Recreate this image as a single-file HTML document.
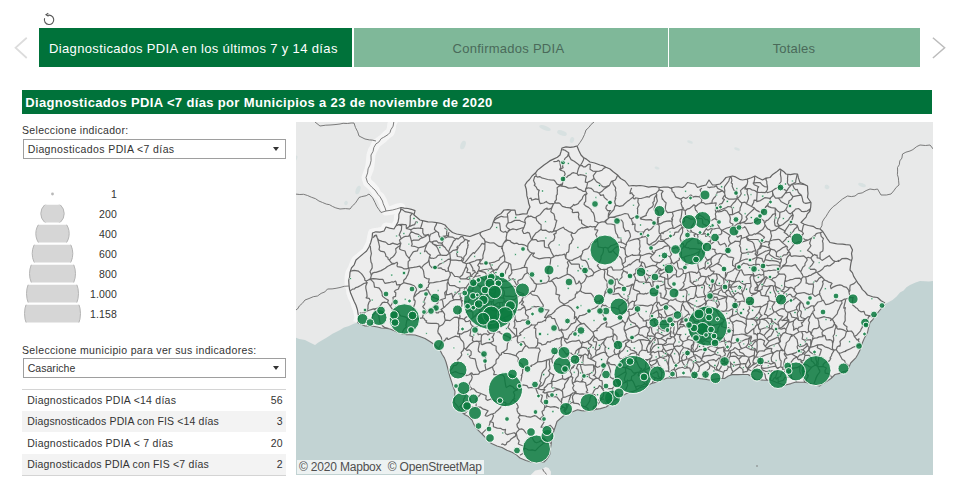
<!DOCTYPE html>
<html><head><meta charset="utf-8">
<style>
html,body{margin:0;padding:0;background:#fff;}
body{width:955px;height:480px;overflow:hidden;position:relative;font-family:"Liberation Sans","DejaVu Sans",sans-serif;color:#333;}
.abs{position:absolute;}
.tab{position:absolute;top:28px;height:38.7px;font-size:13px;white-space:nowrap;}
.tab span{position:absolute;top:12.5px;line-height:15px;}
.t1{left:39px;width:312.6px;background:#00723a;color:#fff;letter-spacing:0.355px;}
.t2{left:354px;width:313.5px;background:#7fb899;color:#4a6a59;letter-spacing:0.26px;}
.t3{left:669px;width:250.8px;background:#7fb899;color:#4a6a59;letter-spacing:0.17px;}
.title{left:22px;top:90px;width:910px;height:23.8px;background:#00723a;color:#fff;font-weight:bold;font-size:13px;line-height:15px;letter-spacing:0.35px;}
.title span{position:absolute;left:3.3px;top:4.5px;white-space:nowrap;}
.lbl{font-size:10.5px;color:#333;white-space:nowrap;}
.sel{border:1px solid #9e9e9e;background:#fff;height:17.7px;width:261px;font-size:10.5px;line-height:17px;}
.sel span{position:absolute;left:3.7px;top:1.2px;white-space:nowrap;}
.sel i{position:absolute;right:5.8px;top:7.2px;width:0;height:0;border-left:3.2px solid transparent;border-right:3.2px solid transparent;border-top:4.3px solid #333;}
.row{position:absolute;left:22px;width:264px;height:22px;font-size:10.5px;line-height:20.6px;letter-spacing:0.24px;}
.row span{position:absolute;left:5.3px;white-space:nowrap;}
.row b{position:absolute;right:3.1px;font-weight:normal;}
.leg{position:absolute;font-size:10.5px;letter-spacing:0.15px;width:40px;text-align:right;left:77px;line-height:13px;}
.attr{position:absolute;left:0.6px;top:338px;height:14px;line-height:14px;padding:0 2px 0 2.5px;letter-spacing:-0.2px;background:rgba(255,255,255,0.7);font-size:12px;color:#4f4f4f;white-space:nowrap;}
</style></head><body>
<svg class="abs" style="left:40px;top:10px" width="18" height="18" viewBox="0 0 18 18"><path d="M7.2 5.5 A4.7 4.7 0 1 1 4.6 8.3" fill="none" stroke="#555" stroke-width="1.1"/><path d="M8.3 3.1 L6 4.8 L8.5 6.2" fill="none" stroke="#555" stroke-width="1.1"/></svg>
<svg class="abs" style="left:10px;top:34px" width="20" height="28" viewBox="0 0 20 28"><path d="M16.75 3.75 L5.5 13.75 L16.75 24" fill="none" stroke="#dcdcdc" stroke-width="1.7"/></svg>
<svg class="abs" style="left:928px;top:34px" width="20" height="28" viewBox="0 0 20 28"><path d="M4.9 3.75 L16.6 13.75 L4.9 24" fill="none" stroke="#bcbcbc" stroke-width="1.5"/></svg>
<div class="tab t1"><span style="left:10px">Diagnosticados PDIA en los últimos 7 y 14 días</span></div>
<div class="tab t2"><span style="left:98.5px">Confirmados PDIA</span></div>
<div class="tab t3"><span style="left:103.7px">Totales</span></div>
<div class="abs title"><span>Diagnosticados PDIA &lt;7 días por Municipios a 23 de noviembre de 2020</span></div>

<div class="abs lbl" style="left:22px;top:124px;letter-spacing:0.32px">Seleccione indicador:</div>
<div class="abs sel" style="left:23px;top:139px"><span style="letter-spacing:0.39px">Diagnosticados PDIA &lt;7 días</span><i></i></div>

<div id="legend">
<svg class="abs" style="left:15px;top:185px" width="80" height="145" viewBox="15 185 80 145">
<circle cx="52.5" cy="194" r="1.4" fill="#b8b8b8"/>
<clipPath id="c0"><rect x="15" y="204.7" width="80" height="17.8"/></clipPath>
<circle cx="52.5" cy="213.6" r="11.7" fill="#d6d6d6" stroke="#b4b4b4" stroke-width="1" clip-path="url(#c0)"/>
<clipPath id="c1"><rect x="15" y="224.7" width="80" height="17.8"/></clipPath>
<circle cx="52.5" cy="233.6" r="16.7" fill="#d6d6d6" stroke="#b4b4b4" stroke-width="1" clip-path="url(#c1)"/>
<clipPath id="c2"><rect x="15" y="244.7" width="80" height="17.8"/></clipPath>
<circle cx="52.5" cy="253.6" r="20.3" fill="#d6d6d6" stroke="#b4b4b4" stroke-width="1" clip-path="url(#c2)"/>
<clipPath id="c3"><rect x="15" y="264.7" width="80" height="17.8"/></clipPath>
<circle cx="52.5" cy="273.6" r="23.0" fill="#d6d6d6" stroke="#b4b4b4" stroke-width="1" clip-path="url(#c3)"/>
<clipPath id="c4"><rect x="15" y="284.7" width="80" height="17.8"/></clipPath>
<circle cx="52.5" cy="293.6" r="26.0" fill="#d6d6d6" stroke="#b4b4b4" stroke-width="1" clip-path="url(#c4)"/>
<clipPath id="c5"><rect x="15" y="304.7" width="80" height="17.8"/></clipPath>
<circle cx="52.5" cy="313.6" r="28.0" fill="#d6d6d6" stroke="#b4b4b4" stroke-width="1" clip-path="url(#c5)"/>
</svg>
<div class="leg" style="top:188.2px">1</div>
<div class="leg" style="top:208.2px">200</div>
<div class="leg" style="top:228.2px">400</div>
<div class="leg" style="top:248.2px">600</div>
<div class="leg" style="top:268.2px">800</div>
<div class="leg" style="top:288.2px">1.000</div>
<div class="leg" style="top:308.2px">1.158</div>
</div>

<div class="abs lbl" style="left:22px;top:344px;letter-spacing:0.34px">Seleccione municipio para ver sus indicadores:</div>
<div class="abs sel" style="left:23px;top:358.25px;height:17.4px"><span style="top:0.8px;letter-spacing:0.04px">Casariche</span><i></i></div>

<div class="abs" style="left:22px;top:389px;width:264px;height:1px;background:#d4d4d4"></div>
<div class="row" style="top:390px;background:#fff"><span>Diagnosticados PDIA &lt;14 días</span><b>56</b></div>
<div class="row" style="top:411px;background:#f3f3f3;height:20.5px"><span style="letter-spacing:0.14px">Diagsnosticados PDIA con FIS &lt;14 días</span><b>3</b></div>
<div class="row" style="top:433px;background:#fff;height:20px"><span>Diagnosticados PDIA &lt; 7 días</span><b>20</b></div>
<div class="row" style="top:453.5px;background:#f3f3f3;height:21px"><span style="letter-spacing:0.18px">Diagnosticados PDIA con FIS &lt;7 días</span><b>2</b></div>
<div class="abs" style="left:22px;top:475px;width:264px;height:1px;background:#d4d4d4"></div>

<div class="abs" id="map" style="left:296px;top:122px;width:637px;height:353px;background:#e9eaea;overflow:hidden">
<svg width="637" height="353" viewBox="0 0 637 353" style="position:absolute;left:0;top:0">
<rect width="637" height="353" fill="#e8e9e9"/>
<path d="M97.8 -2.0 L95.9 2.0 L95.2 6.8 L94.0 10.5 L90.7 12.8 L86.9 16.7 L83.8 18.9 L80.0 21.8 L78.0 26.0 L76.2 29.1 L75.0 33.0 L74.5 38.1 L74.0 43.0 L73.1 47.5 L71.4 51.7 L70.0 55.5 L71.5 60.5 L75.6 64.0 L79.0 68.0 L81.0 72.2 L84.3 75.0 L86.5 79.0 L88.3 83.9 L90.0 89.0 L96.5 88.0 L100.5 86.3 L105.0 85.5 L104.3 90.0 L102.5 95.0 L102.0 100.0 L99.8 103.9 L98.0 107.0 L93.6 105.5 L90.0 105.0 L88.0 109.0 L82.8 110.0 L76.5 111.0 L75.3 116.4 L74.6 121.0 L72.6 124.9 L70.6 129.0 L67.1 132.1 L62.9 135.6 L60.0 138.0 L57.9 142.3 L56.4 146.5 L54.0 150.5 L53.1 154.9 L53.1 158.9 L53.0 163.0 L54.5 166.7 L54.9 171.0 L56.5 175.5 L58.8 179.8 L59.9 184.1 L61.5 188.0 L63.0 195.5 L61.5 200.5" fill="none" stroke="#f6f6f6" stroke-width="9" stroke-linejoin="round" stroke-opacity="0.9"/>
<path d="M-2.0 215.0 L3.2 217.0 L9.0 218.0 L13.8 220.4 L19.0 223.0 L22.3 220.4 L26.5 218.0 L30.0 216.0 L33.2 214.0 L36.5 211.8 L40.1 209.9 L44.0 208.0 L48.0 205.5 L53.0 204.0 L57.1 202.0 L61.5 200.5 L65.3 202.3 L69.0 204.0 L73.2 203.9 L77.3 204.3 L81.5 205.0 L85.2 206.0 L89.5 206.3 L94.0 207.0 L98.4 208.7 L102.2 210.4 L106.5 212.0 L110.7 212.6 L114.4 212.7 L119.0 213.0 L123.7 214.5 L129.0 216.5 L134.3 219.8 L139.0 223.0 L144.0 228.0 L146.1 232.3 L148.4 235.9 L150.0 240.0 L151.4 245.0 L152.7 250.2 L154.0 255.0 L155.6 259.9 L157.3 265.1 L159.0 269.5 L158.7 275.1 L158.0 280.0 L161.7 284.3 L164.5 289.0 L168.4 292.4 L172.5 294.6 L176.0 298.0 L177.6 301.9 L180.0 306.0 L183.6 309.7 L188.0 314.0 L191.3 317.9 L195.5 321.5 L201.0 323.9 L206.0 325.5 L210.9 328.2 L216.5 330.5 L220.4 332.9 L224.0 336.0 L229.9 338.5 L235.0 340.0 L239.1 340.5 L243.6 340.0 L248.0 340.0 L251.5 336.3 L254.0 332.0 L254.2 327.6 L255.0 323.2 L255.5 319.0 L256.4 313.6 L258.0 308.5 L259.7 303.5 L261.0 299.5 L264.8 296.2 L268.5 293.0 L272.4 291.1 L277.3 289.5 L281.5 287.7 L285.4 288.6 L290.5 289.0 L294.6 289.0 L299.3 287.4 L304.4 286.6 L310.0 285.0 L314.0 282.5 L317.8 278.9 L322.0 276.0 L325.7 274.4 L329.5 272.0 L333.5 270.3 L336.6 269.4 L340.7 267.7 L343.9 265.6 L348.3 264.4 L351.4 263.4 L355.5 261.5 L359.5 260.4 L362.8 259.1 L366.7 257.7 L371.0 256.0 L375.2 255.6 L379.5 256.0 L383.4 255.0 L387.8 254.9 L392.0 255.0 L395.8 255.3 L400.0 255.9 L404.4 256.6 L409.1 257.2 L413.0 258.0 L418.2 257.2 L423.2 256.5 L428.5 256.5 L432.3 254.0 L436.5 252.5 L441.9 252.6 L446.5 252.5 L452.0 252.5 L456.4 254.9 L460.0 258.0 L465.0 257.9 L469.3 258.3 L474.0 258.0 L477.8 259.3 L482.0 261.0 L485.5 262.1 L489.6 263.0 L495.0 261.6 L500.0 260.0 L504.2 260.2 L508.2 260.3 L513.0 261.0 L517.8 262.7 L523.5 264.0 L527.1 261.2 L530.8 259.3 L535.0 256.5 L539.0 252.5 L543.7 251.4 L547.4 249.6 L552.0 248.6 L553.1 244.8 L554.7 241.0 L560.0 235.6 L561.5 233.0 L564.0 228.0 L566.5 220.5 L568.7 215.4 L571.5 210.5 L572.5 206.0 L574.0 200.5 L577.0 197.3 L579.0 194.0 L584.0 188.0 L589.0 182.0 L592.9 180.0 L596.5 178.0 L600.6 174.4 L604.0 170.5 L607.6 168.5 L610.5 165.3 L614.0 163.0 L619.6 160.6 L624.0 159.0 L628.9 159.2 L632.8 159.4 L638.0 159.0 L638.0 355.0 L-2.0 355.0Z" fill="#c2d3d3"/>
<path d="M61.5 200.5 L63.0 195.5 L62.0 191.3 L61.5 188.0 L60.0 183.2 L58.2 179.5 L56.5 175.5 L54.7 171.3 L53.5 167.1 L53.0 163.0 L52.7 158.3 L53.6 155.1 L54.0 150.5 L55.5 145.9 L58.2 142.8 L60.0 138.0 L63.6 134.9 L67.7 131.4 L70.6 129.0 L73.0 125.0 L74.6 121.0 L76.1 115.7 L76.5 111.0 L79.8 109.8 L83.9 110.1 L88.0 109.0 L90.0 105.0 L93.6 106.1 L98.0 107.0 L100.2 103.3 L102.0 100.0 L102.8 95.8 L102.9 92.3 L104.5 89.0 L105.0 85.5 L108.2 86.1 L112.0 86.5 L115.4 87.3 L119.0 88.6 L118.0 93.0 L121.4 95.8 L124.0 98.0 L127.6 98.8 L132.0 99.9 L136.0 100.0 L140.7 100.7 L145.3 101.5 L149.0 103.0 L151.4 105.9 L153.5 108.0 L156.5 110.5 L160.6 112.0 L166.0 113.0 L170.4 113.9 L174.0 114.5 L178.7 112.6 L182.6 111.3 L186.5 109.5 L190.4 108.2 L194.0 107.0 L196.1 104.0 L197.3 99.9 L199.0 96.0 L201.4 93.6 L205.2 91.4 L208.0 88.0 L212.1 87.7 L215.2 88.2 L219.0 88.0 L220.0 93.0 L223.0 92.6 L226.9 91.8 L231.0 92.0 L231.9 88.9 L234.0 85.0 L232.6 81.0 L232.2 78.2 L230.9 73.9 L230.7 70.9 L230.3 67.2 L229.0 63.0 L231.0 59.9 L233.5 57.5 L236.0 54.0 L239.6 50.8 L241.5 48.1 L244.6 45.7 L248.0 43.0 L251.3 40.7 L253.7 38.9 L257.4 37.1 L261.4 35.3 L264.0 33.0 L265.0 29.7 L266.0 26.0 L270.0 24.9 L274.1 25.4 L277.8 24.9 L281.0 24.0 L282.8 28.4 L285.0 33.0 L287.4 35.5 L290.4 37.1 L294.0 40.0 L298.6 41.0 L304.0 43.0 L307.1 43.7 L310.0 45.2 L314.0 47.0 L317.2 49.8 L321.5 53.0 L324.6 56.5 L329.0 59.0 L333.0 64.0 L336.9 63.5 L340.2 63.8 L344.1 63.5 L348.0 64.0 L352.5 65.1 L356.0 64.7 L359.4 64.6 L364.0 65.5 L367.5 65.2 L372.0 65.0 L374.6 66.1 L379.0 65.0 L382.8 64.8 L386.5 65.5 L389.0 63.7 L391.5 60.5 L395.8 61.5 L399.0 62.0 L401.5 65.5 L405.4 64.1 L410.0 63.0 L413.0 58.0 L416.5 63.0 L419.8 62.9 L424.0 62.0 L427.0 59.1 L430.0 55.5 L436.5 54.0 L439.6 54.9 L443.6 57.3 L446.5 58.0 L451.2 57.1 L455.3 55.7 L459.0 54.0 L462.4 56.0 L466.5 58.0 L470.0 56.1 L474.0 55.5 L476.7 52.4 L480.3 50.1 L484.0 47.0 L487.6 49.4 L490.0 52.0 L494.4 52.7 L498.3 51.8 L501.5 52.0 L502.4 55.9 L504.0 60.5 L507.3 61.8 L511.5 64.0 L511.7 68.4 L512.0 71.6 L511.5 75.5 L515.0 80.5 L514.7 85.2 L514.0 89.0 L511.2 92.1 L510.1 95.1 L507.6 97.6 L505.0 100.5 L508.3 102.2 L512.4 103.5 L517.1 104.3 L520.1 106.3 L524.0 107.0 L526.8 109.5 L529.0 113.0 L531.0 116.3 L534.0 120.5 L538.6 121.4 L541.5 122.0 L546.7 122.2 L549.8 122.6 L554.0 123.0 L556.5 128.0 L555.5 131.3 L556.2 136.2 L555.0 140.6 L554.4 144.5 L554.0 148.0 L556.5 150.9 L557.7 154.4 L560.0 158.0 L561.9 161.1 L564.3 163.9 L566.4 167.6 L569.0 169.9 L571.5 173.0 L576.6 174.8 L581.5 175.5 L585.1 178.8 L589.0 181.0 L584.0 188.0 L579.0 194.0 L577.0 197.3 L574.0 200.5 L572.5 206.0 L571.5 210.5 L568.7 215.4 L566.5 220.5 L564.0 228.0 L561.5 233.0 L560.0 235.6 L554.7 241.0 L553.1 244.8 L552.0 248.6 L547.4 249.6 L543.7 251.4 L539.0 252.5 L535.0 256.5 L530.8 259.3 L527.1 261.2 L523.5 264.0 L517.8 262.7 L513.0 261.0 L508.2 260.3 L504.2 260.2 L500.0 260.0 L495.0 261.6 L489.6 263.0 L485.5 262.1 L482.0 261.0 L477.8 259.3 L474.0 258.0 L469.3 258.3 L465.0 257.9 L460.0 258.0 L456.4 254.9 L452.0 252.5 L446.5 252.5 L441.9 252.6 L436.5 252.5 L432.3 254.0 L428.5 256.5 L423.2 256.5 L418.2 257.2 L413.0 258.0 L409.1 257.2 L404.4 256.6 L400.0 255.9 L395.8 255.3 L392.0 255.0 L387.8 254.9 L383.4 255.0 L379.5 256.0 L375.2 255.6 L371.0 256.0 L366.7 257.7 L362.8 259.1 L359.5 260.4 L355.5 261.5 L351.4 263.4 L348.3 264.4 L343.9 265.6 L340.7 267.7 L336.6 269.4 L333.5 270.3 L329.5 272.0 L325.7 274.4 L322.0 276.0 L317.8 278.9 L314.0 282.5 L310.0 285.0 L304.4 286.6 L299.3 287.4 L294.6 289.0 L290.5 289.0 L285.4 288.6 L281.5 287.7 L277.3 289.5 L272.4 291.1 L268.5 293.0 L264.8 296.2 L261.0 299.5 L259.7 303.5 L258.0 308.5 L256.4 313.6 L255.5 319.0 L255.0 323.2 L254.2 327.6 L254.0 332.0 L251.5 336.3 L248.0 340.0 L243.6 340.0 L239.1 340.5 L235.0 340.0 L229.9 338.5 L224.0 336.0 L220.4 332.9 L216.5 330.5 L210.9 328.2 L206.0 325.5 L201.0 323.9 L195.5 321.5 L191.3 317.9 L188.0 314.0 L183.6 309.7 L180.0 306.0 L177.6 301.9 L176.0 298.0 L172.5 294.6 L168.4 292.4 L164.5 289.0 L161.7 284.3 L158.0 280.0 L158.7 275.1 L159.0 269.5 L157.3 265.1 L155.6 259.9 L154.0 255.0 L152.7 250.2 L151.4 245.0 L150.0 240.0 L148.4 235.9 L146.1 232.3 L144.0 228.0 L139.0 223.0 L134.3 219.8 L129.0 216.5 L123.7 214.5 L119.0 213.0 L114.4 212.7 L110.7 212.6 L106.5 212.0 L102.2 210.4 L98.4 208.7 L94.0 207.0 L89.5 206.3 L85.2 206.0 L81.5 205.0 L77.3 204.3 L73.2 203.9 L69.0 204.0 L65.3 202.3 L61.5 200.5Z" fill="#ededed"/>
<path d="M97.8 0.0 L97.1 4.2 L94.9 7.7 L94.0 10.5 L91.9 12.7 L87.7 15.3 L85.2 16.6 L82.8 20.1 L80.0 21.8 L77.8 25.6 L77.1 29.3 L75.0 33.0 L75.1 38.6 L74.0 43.0 L72.1 46.8 L71.6 50.9 L70.0 55.5 L71.5 60.5 L74.0 63.2 L75.9 65.3 L79.0 68.0 L82.0 72.4 L84.0 74.7 L86.5 79.0 L87.2 81.7 L89.1 86.0 L90.0 89.0 L96.5 88.0 L100.6 86.9 L105.0 85.5 M19.0 0.0 L24.0 4.0 L29.7 3.2 L34.0 3.0 L39.0 2.6 L44.0 2.0 L47.1 1.3 L51.4 1.5 L55.1 1.0 L58.0 1.0 L59.5 5.6 L61.7 9.8 L63.0 14.0 L69.0 17.0 L73.3 17.9 L76.3 18.1 L80.0 19.0 M-1.0 72.0 L3.8 72.5 L7.6 72.3 L11.5 73.5 L15.3 75.2 L19.5 76.7 L22.9 79.0 L26.5 80.5 L30.4 82.1 L33.5 82.7 L36.6 84.5 L39.8 85.9 L44.0 87.0 L49.4 86.6 L54.0 87.0 L56.5 83.7 L59.1 81.5 L61.4 78.1 L63.0 75.5 L65.7 74.6 L70.2 73.7 L73.0 72.0 L76.6 75.8 L79.0 80.5 L80.8 84.5 L83.1 87.8 L85.0 90.5 L90.0 89.0 M53.0 164.0 L48.3 164.3 L44.0 165.5 L40.1 166.3 L36.1 166.9 L31.5 167.0 L28.9 169.9 L25.1 171.4 L21.5 174.0 L17.3 174.7 L13.0 176.5 L9.0 178.0 L6.3 181.4 L3.4 183.9 L1.5 187.0 L-2.0 189.0 M298.0 0.0 L295.1 2.4 L292.9 5.4 L290.0 8.0 L288.5 12.5 L286.4 16.9 L284.0 20.5 L281.5 24.0 M524.0 107.0 L525.9 103.8 L526.3 100.0 L528.0 97.0 L530.2 94.2 L531.6 91.7 L534.0 88.0 L537.2 84.6 L539.9 82.7 L543.1 79.9 L546.5 77.0 L551.5 74.0 L555.3 74.6 L559.0 74.0 L562.1 71.6 L566.2 70.9 L570.1 68.6 L574.0 67.0 L578.2 67.7 L581.5 67.0 L585.0 73.0 L590.4 73.0 L595.0 72.0 L597.7 68.9 L600.2 65.4 L603.0 63.0 L602.6 58.8 L602.4 55.9 L601.4 52.6 L601.6 49.1 L601.5 45.5 L603.3 42.7 L603.8 38.9 L605.9 36.1 L606.5 32.0 L609.9 30.2 L614.0 29.0 L616.9 27.6 L620.7 24.6 L624.0 23.0 L629.5 23.5 L634.0 23.0 L638.0 28.0" fill="none" stroke="#6e6e6e" stroke-width="0.9" stroke-linejoin="round"/>
<clipPath id="ac"><path d="M61.5 200.5 L63.0 195.5 L62.0 191.3 L61.5 188.0 L60.0 183.2 L58.2 179.5 L56.5 175.5 L54.7 171.3 L53.5 167.1 L53.0 163.0 L52.7 158.3 L53.6 155.1 L54.0 150.5 L55.5 145.9 L58.2 142.8 L60.0 138.0 L63.6 134.9 L67.7 131.4 L70.6 129.0 L73.0 125.0 L74.6 121.0 L76.1 115.7 L76.5 111.0 L79.8 109.8 L83.9 110.1 L88.0 109.0 L90.0 105.0 L93.6 106.1 L98.0 107.0 L100.2 103.3 L102.0 100.0 L102.8 95.8 L102.9 92.3 L104.5 89.0 L105.0 85.5 L108.2 86.1 L112.0 86.5 L115.4 87.3 L119.0 88.6 L118.0 93.0 L121.4 95.8 L124.0 98.0 L127.6 98.8 L132.0 99.9 L136.0 100.0 L140.7 100.7 L145.3 101.5 L149.0 103.0 L151.4 105.9 L153.5 108.0 L156.5 110.5 L160.6 112.0 L166.0 113.0 L170.4 113.9 L174.0 114.5 L178.7 112.6 L182.6 111.3 L186.5 109.5 L190.4 108.2 L194.0 107.0 L196.1 104.0 L197.3 99.9 L199.0 96.0 L201.4 93.6 L205.2 91.4 L208.0 88.0 L212.1 87.7 L215.2 88.2 L219.0 88.0 L220.0 93.0 L223.0 92.6 L226.9 91.8 L231.0 92.0 L231.9 88.9 L234.0 85.0 L232.6 81.0 L232.2 78.2 L230.9 73.9 L230.7 70.9 L230.3 67.2 L229.0 63.0 L231.0 59.9 L233.5 57.5 L236.0 54.0 L239.6 50.8 L241.5 48.1 L244.6 45.7 L248.0 43.0 L251.3 40.7 L253.7 38.9 L257.4 37.1 L261.4 35.3 L264.0 33.0 L265.0 29.7 L266.0 26.0 L270.0 24.9 L274.1 25.4 L277.8 24.9 L281.0 24.0 L282.8 28.4 L285.0 33.0 L287.4 35.5 L290.4 37.1 L294.0 40.0 L298.6 41.0 L304.0 43.0 L307.1 43.7 L310.0 45.2 L314.0 47.0 L317.2 49.8 L321.5 53.0 L324.6 56.5 L329.0 59.0 L333.0 64.0 L336.9 63.5 L340.2 63.8 L344.1 63.5 L348.0 64.0 L352.5 65.1 L356.0 64.7 L359.4 64.6 L364.0 65.5 L367.5 65.2 L372.0 65.0 L374.6 66.1 L379.0 65.0 L382.8 64.8 L386.5 65.5 L389.0 63.7 L391.5 60.5 L395.8 61.5 L399.0 62.0 L401.5 65.5 L405.4 64.1 L410.0 63.0 L413.0 58.0 L416.5 63.0 L419.8 62.9 L424.0 62.0 L427.0 59.1 L430.0 55.5 L436.5 54.0 L439.6 54.9 L443.6 57.3 L446.5 58.0 L451.2 57.1 L455.3 55.7 L459.0 54.0 L462.4 56.0 L466.5 58.0 L470.0 56.1 L474.0 55.5 L476.7 52.4 L480.3 50.1 L484.0 47.0 L487.6 49.4 L490.0 52.0 L494.4 52.7 L498.3 51.8 L501.5 52.0 L502.4 55.9 L504.0 60.5 L507.3 61.8 L511.5 64.0 L511.7 68.4 L512.0 71.6 L511.5 75.5 L515.0 80.5 L514.7 85.2 L514.0 89.0 L511.2 92.1 L510.1 95.1 L507.6 97.6 L505.0 100.5 L508.3 102.2 L512.4 103.5 L517.1 104.3 L520.1 106.3 L524.0 107.0 L526.8 109.5 L529.0 113.0 L531.0 116.3 L534.0 120.5 L538.6 121.4 L541.5 122.0 L546.7 122.2 L549.8 122.6 L554.0 123.0 L556.5 128.0 L555.5 131.3 L556.2 136.2 L555.0 140.6 L554.4 144.5 L554.0 148.0 L556.5 150.9 L557.7 154.4 L560.0 158.0 L561.9 161.1 L564.3 163.9 L566.4 167.6 L569.0 169.9 L571.5 173.0 L576.6 174.8 L581.5 175.5 L585.1 178.8 L589.0 181.0 L584.0 188.0 L579.0 194.0 L577.0 197.3 L574.0 200.5 L572.5 206.0 L571.5 210.5 L568.7 215.4 L566.5 220.5 L564.0 228.0 L561.5 233.0 L560.0 235.6 L554.7 241.0 L553.1 244.8 L552.0 248.6 L547.4 249.6 L543.7 251.4 L539.0 252.5 L535.0 256.5 L530.8 259.3 L527.1 261.2 L523.5 264.0 L517.8 262.7 L513.0 261.0 L508.2 260.3 L504.2 260.2 L500.0 260.0 L495.0 261.6 L489.6 263.0 L485.5 262.1 L482.0 261.0 L477.8 259.3 L474.0 258.0 L469.3 258.3 L465.0 257.9 L460.0 258.0 L456.4 254.9 L452.0 252.5 L446.5 252.5 L441.9 252.6 L436.5 252.5 L432.3 254.0 L428.5 256.5 L423.2 256.5 L418.2 257.2 L413.0 258.0 L409.1 257.2 L404.4 256.6 L400.0 255.9 L395.8 255.3 L392.0 255.0 L387.8 254.9 L383.4 255.0 L379.5 256.0 L375.2 255.6 L371.0 256.0 L366.7 257.7 L362.8 259.1 L359.5 260.4 L355.5 261.5 L351.4 263.4 L348.3 264.4 L343.9 265.6 L340.7 267.7 L336.6 269.4 L333.5 270.3 L329.5 272.0 L325.7 274.4 L322.0 276.0 L317.8 278.9 L314.0 282.5 L310.0 285.0 L304.4 286.6 L299.3 287.4 L294.6 289.0 L290.5 289.0 L285.4 288.6 L281.5 287.7 L277.3 289.5 L272.4 291.1 L268.5 293.0 L264.8 296.2 L261.0 299.5 L259.7 303.5 L258.0 308.5 L256.4 313.6 L255.5 319.0 L255.0 323.2 L254.2 327.6 L254.0 332.0 L251.5 336.3 L248.0 340.0 L243.6 340.0 L239.1 340.5 L235.0 340.0 L229.9 338.5 L224.0 336.0 L220.4 332.9 L216.5 330.5 L210.9 328.2 L206.0 325.5 L201.0 323.9 L195.5 321.5 L191.3 317.9 L188.0 314.0 L183.6 309.7 L180.0 306.0 L177.6 301.9 L176.0 298.0 L172.5 294.6 L168.4 292.4 L164.5 289.0 L161.7 284.3 L158.0 280.0 L158.7 275.1 L159.0 269.5 L157.3 265.1 L155.6 259.9 L154.0 255.0 L152.7 250.2 L151.4 245.0 L150.0 240.0 L148.4 235.9 L146.1 232.3 L144.0 228.0 L139.0 223.0 L134.3 219.8 L129.0 216.5 L123.7 214.5 L119.0 213.0 L114.4 212.7 L110.7 212.6 L106.5 212.0 L102.2 210.4 L98.4 208.7 L94.0 207.0 L89.5 206.3 L85.2 206.0 L81.5 205.0 L77.3 204.3 L73.2 203.9 L69.0 204.0 L65.3 202.3 L61.5 200.5Z"/></clipPath>
<path d="M564.9 223.1 L564.0 221.8 M555.5 248.6 L555.3 246.5 L553.1 243.9 L549.2 241.0 L548.8 239.0 L547.9 238.2 L546.3 237.5 L543.7 232.7 L543.1 231.7 L543.8 231.3 M564.0 221.8 L563.0 223.8 L562.9 223.3 L560.3 224.1 L557.0 225.3 L554.5 226.7 L549.4 228.9 L549.7 229.4 L547.8 229.7 L545.4 230.7 L543.8 231.3 M576.3 195.5 L575.7 193.3 M564.0 221.8 L562.3 218.5 L563.0 216.9 L561.0 218.0 L559.9 216.4 L558.4 214.7 L558.3 214.4 M575.7 193.3 L572.9 194.6 L570.9 198.5 L569.5 200.8 L566.7 203.1 L566.4 204.3 L566.3 205.3 L565.2 207.0 L564.6 208.8 L560.7 213.2 L558.3 214.4 M253.3 125.9 L252.4 123.2 L254.4 120.3 L257.7 118.5 L258.8 115.4 L258.5 113.3 L257.7 112.4 L259.9 111.4 L260.5 108.7 M253.3 125.9 L254.7 127.9 L254.6 128.5 L255.6 130.6 L258.0 134.6 M260.5 108.7 L263.6 107.0 L267.3 105.2 L268.9 107.3 L270.4 107.9 L273.6 109.9 L276.3 110.7 M276.3 110.7 L275.3 112.0 L275.1 112.9 L277.2 117.3 L276.1 118.5 L275.3 121.0 L273.4 122.4 L273.1 126.4 L272.6 129.9 L270.7 130.8 L269.9 133.3 L269.9 136.5 M258.0 134.6 L259.8 133.4 L262.1 133.6 L263.6 133.1 L266.0 133.0 L268.5 132.1 L269.0 133.2 L269.9 136.5 M260.5 108.7 L259.7 108.8 M259.7 108.8 L258.2 109.1 L258.5 108.9 L255.8 110.1 L254.2 109.7 L253.2 110.3 L251.4 109.2 L250.0 108.2 L246.2 108.4 L245.1 106.8 M253.3 125.9 L249.2 125.5 L248.4 124.1 L248.3 121.4 L248.3 118.6 L244.9 118.9 L241.8 119.5 L240.2 117.7 L239.2 117.6 L236.2 117.8 M236.2 117.8 L236.7 115.3 L239.8 111.1 L241.6 110.0 L244.1 108.1 L245.1 106.8 M236.4 131.2 L233.4 129.7 L232.0 127.2 L231.7 128.0 L231.7 124.9 M231.7 124.9 L232.0 122.4 L233.5 120.2 L235.6 117.8 M258.0 134.6 L257.0 135.1 L254.8 136.3 M254.8 136.3 L253.4 135.5 L248.4 135.8 L243.2 136.9 L239.4 135.5 L238.1 134.9 L236.7 133.8 L237.4 132.2 L238.5 131.0 L236.4 131.2 M236.2 117.8 L235.6 117.8 M514.9 62.7 L510.5 62.8 L505.5 62.2 L502.3 61.7 L499.0 62.2 L497.2 61.6 M514.7 80.4 L509.8 81.4 L507.9 80.8 L506.8 79.2 L506.7 78.1 L506.3 76.1 L505.4 73.2 M505.4 73.2 L502.5 70.7 L501.3 67.4 L499.8 67.9 L498.1 66.2 L496.6 62.5 M497.2 61.6 L496.6 62.5 M501.2 52.4 L500.4 55.8 L499.7 58.8 L499.7 60.2 L497.2 61.6 M575.7 193.3 L572.7 193.7 L569.4 192.8 L568.9 192.0 L568.0 189.4 L564.9 189.8 L562.8 188.6 L561.4 186.5 L559.9 185.8 L559.0 184.8 L556.7 183.0 L556.4 180.3 L556.8 176.6 L557.2 175.5 L554.0 175.6 M554.0 175.6 L553.5 172.3 L552.8 169.3 L553.5 169.4 M562.5 155.4 L560.3 159.3 L558.0 161.6 L554.2 163.2 L553.8 166.4 L554.0 168.2 L553.5 169.4 M212.4 109.4 L212.0 109.2 L213.9 107.5 L211.5 106.0 L210.1 104.0 L211.6 101.1 L212.3 101.0 M228.0 105.3 L226.1 106.0 L225.1 106.2 L223.6 106.7 L220.2 107.9 L219.7 107.5 L216.9 106.9 L214.1 108.0 L212.4 109.4 M228.0 105.3 L228.5 103.7 L229.5 101.1 M229.5 101.1 L228.0 100.2 L225.2 99.2 L223.8 98.4 L218.9 98.4 L215.1 100.4 L212.3 101.0 M267.6 55.2 L267.2 58.1 L266.3 62.9 M267.6 55.2 L269.2 52.0 L268.1 49.5 L264.7 48.3 M264.7 48.3 L263.7 47.5 L264.8 45.4 L264.2 42.6 L263.9 39.7 L262.3 38.3 L260.8 39.5 L257.8 39.6 M266.2 63.0 L266.3 62.9 M266.2 63.0 L265.5 62.0 L263.5 63.0 L261.0 62.1 L259.3 59.5 L258.0 58.1 L254.3 57.9 L251.7 57.5 L248.2 56.5 L245.6 55.8 L243.6 54.6 L241.4 55.1 L240.2 54.2 M240.2 54.2 L240.1 52.6 L239.6 51.6 M272.7 30.8 L271.6 34.2 L269.0 36.4 L267.4 40.0 L267.0 41.3 L266.6 44.3 L267.1 45.7 L264.8 47.0 L264.7 48.3 M272.7 30.8 L270.8 29.5 L269.3 28.4 L267.6 27.8 L267.5 27.6 L266.7 27.9 M284.5 43.2 L286.0 40.8 L287.6 37.7 L287.5 36.6 M272.7 30.8 L272.9 33.6 L275.1 37.6 L278.2 39.2 L281.2 41.4 L283.2 43.3 L284.5 43.2 M75.2 203.8 L76.9 199.2 L75.8 197.2 L77.1 192.7 L79.1 191.1 L79.1 187.8 M89.6 209.0 L92.0 207.3 L92.1 206.4 L88.9 205.7 L86.4 203.7 L84.5 201.4 L83.8 200.5 L83.4 197.4 L82.7 193.5 L81.2 189.7 L79.1 187.8 M214.3 85.2 L216.3 86.7 L213.9 89.5 L211.3 92.2 L211.7 94.6 M211.7 94.6 L210.6 95.0 L207.5 94.9 L205.3 94.3 L202.9 95.4 L200.0 96.9 L197.4 99.3 M211.7 94.6 L212.3 101.0 M212.4 109.4 L211.0 111.2 M197.3 99.6 L198.3 100.4 L199.8 100.8 L201.5 100.9 L203.6 101.2 L204.1 104.7 L204.5 108.6 L206.3 109.7 L207.7 110.2 L209.6 109.3 L211.0 111.2 M235.6 117.8 L234.7 115.4 L233.4 111.1 L231.6 110.4 L229.0 111.5 L227.7 111.4 L226.3 108.8 L228.0 105.3 M231.7 124.9 L230.5 124.0 L228.1 122.8 L225.8 122.3 L222.9 122.5 L220.8 121.1 L218.2 121.6 L215.1 120.1 L214.1 118.7 L211.2 118.2 L208.9 120.0 L207.9 120.9 M207.9 120.9 L210.5 117.1 L210.1 115.9 L211.0 111.2 M188.2 117.2 L186.9 116.2 L185.5 114.6 L184.0 112.3 L184.9 109.8 L184.0 109.8 M188.2 117.2 L189.4 119.7 L194.1 121.0 L197.7 120.8 L200.4 122.7 L202.9 124.4 L205.1 124.6 L206.7 123.8 M206.7 123.8 L207.2 121.8 L207.9 120.9 M120.8 100.4 L121.2 99.5 L119.8 99.9 L118.7 102.6 L116.7 103.1 L113.1 104.7 M120.3 94.0 L118.2 92.5 L116.3 91.4 M113.1 104.7 L114.0 102.7 L114.3 97.1 L114.3 93.9 L116.3 91.4 M152.9 110.6 L152.4 111.5 L152.6 113.6 L150.8 113.7 M148.9 106.2 L150.7 107.6 L151.0 106.9 L150.6 111.9 L150.8 113.7 M116.3 91.4 L113.8 90.6 L108.9 89.6 L106.6 87.7 L105.0 87.6 L103.0 87.3 M150.8 113.7 L149.6 114.0 M141.1 99.5 L140.3 102.6 L138.8 105.3 L138.4 107.3 L140.1 109.0 M140.1 109.0 L142.6 110.8 L142.6 112.6 L143.8 115.4 L147.9 114.2 L149.6 114.0 M113.1 104.7 L110.4 106.5 M100.3 103.7 L102.7 102.6 M102.7 102.6 L106.1 102.4 L108.1 102.7 L109.4 102.6 L110.4 103.3 L110.2 104.6 L110.4 106.5 M126.9 97.7 L126.2 100.9 L125.1 104.5 L124.4 106.4 M124.4 106.4 L122.4 106.0 L119.7 106.3 L117.7 106.2 L114.8 107.7 M110.4 106.5 L114.8 107.7 M78.0 114.8 L77.0 115.5 M74.3 124.3 L74.7 127.9 L75.4 131.7 L74.7 134.6 L74.5 136.0 L74.9 139.3 L75.2 140.7 L75.8 141.4 L76.1 143.2 L76.2 145.9 L74.1 149.5 L74.1 149.9 L74.6 150.9 L75.3 153.5 M78.0 114.8 L78.5 113.6 L80.2 113.6 L81.5 116.6 L82.7 120.9 L83.6 124.8 L83.0 127.5 L84.5 129.1 L88.2 129.8 L89.5 132.0 L89.9 134.3 L91.9 135.5 L92.1 137.1 L93.3 138.1 M93.3 138.1 L95.6 141.2 L98.5 141.6 M98.5 141.6 L95.4 142.5 L94.9 142.6 L94.4 143.0 L91.4 144.5 L89.3 146.3 L85.1 148.6 L80.0 150.4 L78.6 150.4 L76.5 151.1 L76.3 151.5 L75.3 153.5 M220.3 311.5 L220.3 310.6 L223.3 307.3 M220.3 311.5 L221.4 316.4 L223.2 318.9 L222.6 320.7 L222.3 322.0 L224.7 323.0 L226.9 323.7 L228.8 323.4 L227.8 327.1 M223.3 307.3 L225.7 306.9 L227.4 307.7 L229.3 310.1 L230.6 311.5 L234.5 313.7 L236.1 314.0 L236.0 314.9 L236.9 317.1 L238.3 319.5 L238.9 320.1 L240.6 320.8 L243.3 319.7 L244.9 318.5 L246.5 320.1 L249.9 320.7 M227.8 327.1 L229.7 326.4 L232.1 327.8 L234.3 328.1 L236.2 327.8 L239.1 328.6 L239.7 328.4 L242.5 325.4 L246.3 322.2 L247.5 321.1 L249.9 320.7 M496.0 62.2 L492.5 66.2 L490.6 69.1 M496.0 62.2 L494.8 63.0 L492.8 63.2 L491.4 60.9 L491.6 57.5 L491.5 56.5 L491.8 53.7 L491.6 49.4 M490.6 69.1 L489.8 68.3 L487.7 67.4 L484.2 65.3 L482.8 63.7 M482.3 45.5 L485.1 47.6 L484.7 49.6 L484.4 52.3 L485.0 55.6 L485.1 59.5 L483.0 62.6 L482.8 63.7 M497.0 74.6 L495.2 72.7 L494.1 70.3 L492.2 70.5 L489.3 71.1 M489.3 71.1 L490.6 69.1 M496.6 62.5 L496.6 62.6 L496.0 62.2 M505.4 73.2 L501.8 73.7 L497.0 74.6 M310.9 147.2 L307.4 147.4 M310.9 147.2 L311.7 148.4 L311.3 152.6 L314.4 154.2 L315.7 154.7 L316.6 155.1 L319.1 157.7 M307.4 147.4 L308.9 149.2 L308.4 152.7 L308.3 155.6 L308.9 156.8 L309.8 158.0 L311.4 159.9 L311.1 162.4 L311.0 163.5 L311.4 165.7 L310.1 168.3 L308.9 170.0 L309.6 171.0 M309.6 171.0 L311.3 169.8 L312.8 170.2 L314.3 172.2 L316.0 170.9 M319.1 157.7 L319.3 162.8 L318.2 164.2 L318.5 167.5 M316.0 170.9 L318.4 169.6 L318.5 167.5 M304.7 147.5 L300.1 149.8 L298.0 150.9 M304.7 147.5 L304.2 146.5 L303.3 146.4 L302.3 144.7 L301.3 143.8 L301.5 143.5 L304.5 138.3 L305.1 136.4 L305.0 134.4 L306.9 131.2 L307.4 129.2 L307.4 125.9 M285.5 133.2 L284.7 135.9 L285.3 137.7 L287.5 138.4 L289.3 138.3 L291.1 140.5 L292.5 144.1 L293.1 147.0 L293.7 146.9 L294.8 146.8 L296.3 148.7 L298.0 150.9 M285.5 133.2 L286.4 131.2 L286.8 130.3 L286.5 129.3 L288.6 127.6 L291.8 126.6 L293.7 124.1 L294.7 122.6 L295.0 121.6 L297.2 119.4 L298.0 119.5 L299.1 120.3 L301.5 118.2 M307.4 125.9 L305.2 125.5 L302.2 124.9 L301.8 120.7 L301.5 118.2 M285.5 133.2 L282.5 135.2 L278.1 137.1 L276.1 138.4 L273.1 138.0 M269.9 136.5 L272.0 137.8 L273.1 138.0 M276.3 110.7 L276.9 111.4 L278.7 111.5 L280.5 109.9 L281.9 108.0 L286.1 105.4 L286.7 106.2 L288.4 105.7 L290.0 105.7 L292.5 105.1 M292.5 105.1 L294.2 104.3 L296.3 104.8 L300.2 104.3 M301.5 118.2 L300.7 114.1 L299.6 112.5 L301.1 109.8 L301.8 108.0 L298.8 107.7 L299.0 105.9 L300.2 104.3 M268.5 182.2 L267.3 183.1 M267.3 183.1 L269.6 183.5 L272.1 183.8 L275.2 186.1 L277.5 188.9 L278.7 190.2 L278.6 193.4 L278.3 196.7 L279.4 194.8 L280.0 194.7 L280.8 197.1 M304.0 178.9 L301.0 179.7 L300.5 180.4 L300.8 180.0 L298.2 177.1 L296.9 173.6 L294.9 171.3 L289.4 171.4 L285.9 170.0 L284.2 168.5 M304.0 178.9 L303.4 181.2 L301.6 184.2 L299.0 186.0 L295.9 187.3 L295.4 187.5 L292.9 189.2 L291.9 190.5 L289.3 192.3 L285.8 193.3 L283.6 193.7 L281.1 197.3 M284.2 168.5 L282.4 170.1 L280.5 170.1 L280.9 170.2 L281.2 171.3 L279.4 172.3 L279.2 175.6 L276.4 177.4 L274.7 178.4 L274.3 178.4 L273.2 178.9 L272.6 180.0 L268.5 182.2 M281.1 197.3 L280.8 197.1 M250.9 195.4 L252.3 193.4 L255.1 192.6 L258.2 190.0 L259.0 189.3 L258.7 188.9 L260.6 187.1 L263.9 184.7 L267.3 183.1 M250.9 195.4 L254.8 194.5 L256.0 196.4 L258.6 196.7 L259.5 199.3 L260.4 201.6 L262.6 206.1 L263.2 208.6 L265.8 207.2 M280.8 197.1 L280.1 197.6 L279.7 199.9 L278.1 200.9 L278.3 200.7 L276.2 201.8 L275.2 201.7 L274.8 202.6 L272.1 206.5 L271.4 207.1 L269.8 208.0 L266.6 208.1 L265.8 207.2 M271.6 152.2 L271.1 151.3 L271.4 148.4 L271.2 146.1 L271.3 146.7 L271.6 146.2 L272.6 143.2 L271.3 140.3 L273.1 138.1 M271.6 152.2 L273.8 152.8 L277.3 155.4 L278.7 157.8 L279.5 160.5 L280.1 162.1 L282.2 160.9 L282.9 159.2 L283.3 159.1 L284.2 160.9 L285.0 162.1 M273.1 138.1 L273.7 140.0 L275.4 142.1 L278.5 142.2 L282.4 142.0 L283.3 142.3 L283.5 145.2 L284.7 146.8 L288.1 146.9 L289.6 147.5 L289.1 150.9 L289.0 152.1 L290.3 153.6 L291.9 154.8 M285.0 162.1 L285.9 161.4 L288.3 159.4 L290.3 155.5 L290.5 153.9 L291.9 154.8 M254.8 136.3 L254.5 139.5 L253.9 143.6 L251.5 148.1 L251.9 148.2 L251.9 150.0 L252.1 152.5 L252.6 153.8 L252.2 154.0 L253.3 155.7 L252.6 159.0 M252.6 159.0 L254.1 159.6 L255.4 158.5 M255.4 158.5 L257.5 156.9 L261.0 155.6 L261.5 156.3 L262.5 156.5 L264.5 155.6 L266.6 154.5 L271.6 152.2 M273.1 138.0 L273.1 138.1 M255.4 158.5 L255.4 159.1 L257.0 160.1 L260.0 165.0 L260.3 167.6 L260.2 169.3 L259.9 172.1 L263.7 173.2 L262.9 175.4 L262.9 177.1 L264.1 179.8 L267.1 181.6 L268.5 182.2 M284.2 168.5 L285.4 164.6 L285.0 162.1 M298.0 150.9 L296.6 153.6 L295.5 153.6 L293.5 154.5 L291.9 154.8 M306.2 178.7 L304.0 178.9 M309.6 171.0 L309.0 170.9 L308.0 174.8 L306.2 176.5 L304.5 177.8 L306.2 178.7 M304.7 147.5 L307.4 147.4 M232.1 93.7 L232.4 94.1 M233.6 76.5 L235.1 76.2 L235.8 78.3 L239.7 76.9 L243.0 77.6 M232.4 94.1 L232.0 94.9 L234.6 94.2 L235.6 94.3 L237.3 95.4 L239.5 95.8 M239.5 95.8 L240.7 94.5 L244.1 92.7 L247.8 88.1 L249.5 86.8 L251.1 86.1 L251.0 87.1 L253.4 87.1 L255.5 86.0 L257.2 82.5 M243.0 77.6 L243.7 80.6 L244.2 81.6 L247.8 81.0 L250.4 79.4 L251.1 80.5 L253.8 81.8 L256.1 81.7 L257.7 81.7 M257.2 82.5 L257.7 81.7 M229.5 101.1 L228.7 98.3 L229.8 96.0 L232.4 94.1 M240.2 54.2 L238.7 54.5 L237.5 58.6 L239.1 61.9 L238.3 63.4 L238.8 63.6 L240.3 65.2 L241.4 67.4 L243.3 68.4 L242.7 69.3 L242.4 72.2 L243.0 77.6 M245.1 106.8 L245.1 102.8 L242.8 101.0 L242.1 99.8 L240.6 98.3 L240.2 96.0 L239.5 95.8 M259.7 108.8 L257.5 108.7 L258.1 107.2 L259.3 104.4 L260.1 100.7 L260.8 98.5 L258.9 97.6 L258.6 94.5 L257.9 91.9 L255.4 90.3 L254.8 89.4 L255.6 86.6 L257.2 82.5 M258.8 79.7 L260.4 77.6 L260.3 75.7 L260.4 73.4 L261.4 72.2 L261.2 71.2 L261.4 68.3 L261.1 65.8 L262.7 64.4 L266.2 63.0 M258.8 79.7 L258.7 81.0 L257.7 81.7 M292.5 105.1 L289.6 104.0 L285.7 101.5 L285.5 99.8 L285.6 98.1 L283.4 98.0 L282.4 94.8 L282.9 92.1 L282.2 90.2 L279.7 90.4 L277.0 90.7 L276.2 90.1 L276.6 87.8 L274.0 85.9 M274.0 85.9 L270.0 85.3 L266.4 84.3 L263.8 81.3 L262.2 80.9 L259.8 81.1 L258.8 79.7 M64.3 190.9 L65.1 191.4 L66.5 191.2 L68.0 191.1 L68.0 190.8 L68.0 191.4 M53.1 169.9 L56.5 167.1 L58.4 167.0 L59.6 165.6 L61.6 165.1 L64.7 163.5 L67.9 161.4 L71.0 161.0 L71.2 160.6 M71.2 160.6 L69.8 163.9 L69.8 166.2 L70.7 170.3 L70.9 172.4 L71.1 174.4 L70.1 175.8 L73.1 176.4 L74.4 178.8 L73.0 180.2 L72.0 183.3 L72.0 186.4 L71.2 188.3 L68.0 191.4 M79.1 187.8 L77.5 186.9 M77.5 186.9 L70.3 189.3 L68.0 191.4 M52.4 149.5 L55.7 148.9 L58.3 148.3 L62.5 149.2 L65.4 151.6 L67.0 153.7 L68.4 156.0 L68.8 156.4 L68.6 156.6 L68.9 158.4 L70.5 158.9 M70.5 158.9 L70.1 160.4 L71.2 160.6 M156.7 176.0 L157.8 178.1 L158.6 177.7 M158.6 177.7 L154.5 179.2 L153.0 180.7 L153.0 180.9 L150.3 183.2 L148.6 185.1 M151.2 167.2 L150.3 170.1 L150.3 172.9 L153.2 172.4 L155.7 171.4 L156.3 173.0 L156.7 176.0 M151.2 167.2 L150.8 168.4 L148.7 170.6 L148.7 171.4 L149.2 173.7 L149.4 176.3 L145.6 177.5 M145.6 177.5 L146.6 179.0 L147.5 184.5 L148.6 185.1 M162.1 125.5 L161.2 127.9 L160.6 131.5 L161.4 134.5 L165.2 135.0 L166.4 136.2 L165.4 138.5 M162.1 125.5 L160.9 125.5 L161.5 124.3 L163.2 123.7 L165.2 120.9 L167.7 119.4 L169.4 117.4 M172.7 118.7 L169.4 117.4 M173.4 118.9 L171.8 119.4 L171.5 121.1 L172.3 123.2 L171.9 123.6 L171.8 123.5 L171.8 125.3 L170.7 127.8 L170.4 131.6 L169.5 133.1 L167.9 134.8 L167.5 137.7 L166.3 139.6 M166.3 139.6 L165.4 138.5 M148.2 115.2 L149.6 114.0 M159.5 117.1 L156.4 115.1 L152.0 114.8 L149.3 116.0 L148.2 115.2 M159.5 117.1 L160.8 116.4 L162.1 117.1 L164.8 114.7 L166.6 114.3 L168.1 117.0 L169.4 117.4 M188.0 122.1 L186.1 121.4 L184.3 124.0 L181.7 127.3 L179.5 129.8 L178.4 131.4 L177.7 130.6 L176.5 131.3 L174.1 134.0 L171.5 137.4 L169.0 140.4 L167.2 140.5 M188.0 122.1 L189.2 120.5 L188.2 117.2 M167.2 140.5 L166.3 139.6 M93.3 138.1 L94.8 136.3 L96.4 135.3 L98.6 133.0 L100.1 130.2 L99.7 126.8 L101.9 125.0 L103.6 123.9 L104.9 121.2 M98.5 141.6 L101.0 140.2 L101.6 141.3 L101.0 143.7 L101.4 144.6 L104.5 145.2 L106.2 145.6 L107.7 146.8 L110.4 146.9 L112.8 146.1 M112.8 146.1 L112.1 145.1 L112.2 144.7 L112.1 142.5 L112.2 139.7 L114.1 137.8 L113.0 136.1 M113.0 136.1 L110.4 133.2 L109.0 129.0 L105.4 128.0 L103.5 126.9 L104.4 123.1 L104.9 121.2 M115.4 110.3 L114.8 107.7 M102.7 102.6 L105.7 103.9 L105.4 108.0 L104.2 110.5 L103.1 113.2 L103.9 113.5 L104.6 115.4 L105.2 116.8 M115.4 110.3 L114.7 110.5 L113.6 112.5 M105.2 116.8 L107.4 115.1 L109.4 114.3 L112.7 114.1 L113.6 112.5 M78.0 114.8 L80.0 112.9 L80.6 113.6 L81.2 115.7 L82.6 118.1 L86.2 119.4 L89.6 120.1 L92.3 122.5 L94.0 122.4 L96.8 121.1 L98.7 121.9 L99.0 121.9 L101.5 122.6 L104.3 120.9 M105.2 116.8 L103.5 118.1 L104.3 120.9 M104.3 120.9 L104.9 121.2 M73.2 157.4 L74.9 157.6 L77.8 160.6 L78.5 165.1 L80.9 165.5 L81.5 165.7 L83.2 166.2 L85.7 169.8 L86.4 173.0 L86.2 173.5 L86.9 174.6 L89.5 176.5 L92.4 178.3 L91.5 180.5 M73.2 157.4 L74.5 156.9 M74.5 156.9 L77.4 156.7 L80.2 156.8 L83.5 157.3 L86.8 157.3 L88.1 160.0 L89.1 161.4 L90.3 161.1 L94.5 160.3 L96.1 159.7 L97.2 160.2 L99.1 159.2 L99.6 159.2 L100.1 160.1 L100.7 162.8 L104.6 162.7 M104.6 162.7 L103.2 164.8 L102.5 167.0 L99.5 168.2 L98.4 169.7 L99.8 170.7 L99.6 174.4 L97.9 174.8 L96.9 175.4 L97.4 178.2 L96.0 181.8 L94.4 184.4 M94.4 184.4 L92.9 182.1 L91.5 180.5 M77.5 186.9 L79.0 186.9 L78.8 186.8 L81.9 186.0 L84.0 184.2 L86.4 180.6 L88.5 180.1 L89.5 180.3 L91.5 180.5 M70.5 158.9 L73.2 157.4 M75.3 153.5 L74.5 156.9 M112.8 146.1 L112.8 146.1 M107.7 160.7 L104.6 162.7 M107.7 160.7 L107.7 158.3 L109.9 156.3 L111.1 153.8 L111.9 152.7 L112.0 152.1 L113.2 148.2 L112.8 146.1 M106.3 213.2 L106.6 209.6 L108.1 207.0 L110.4 205.0 L109.9 203.5 L110.9 198.2 L111.7 197.4 M111.7 197.4 L111.3 196.3 L109.1 194.8 L104.8 193.9 L102.9 191.5 L102.7 190.0 L102.4 189.8 L100.1 188.7 L98.3 188.0 L97.1 187.9 L96.1 186.8 L94.4 184.4 M219.8 312.0 L218.1 310.7 L215.5 311.5 L211.5 312.6 L210.1 312.0 L209.0 310.5 L209.5 307.4 L208.2 307.8 L206.1 307.3 L204.5 306.3 L201.3 306.1 L197.4 304.7 L197.4 301.6 L197.2 300.7 L194.1 299.4 M219.8 312.0 L219.3 314.4 L217.3 315.4 L215.1 316.9 L213.6 319.0 L210.9 320.4 L210.2 322.4 L208.7 323.1 L206.7 321.9 L205.7 322.3 M186.4 311.3 L187.4 310.1 L188.7 308.9 L189.1 308.4 L192.3 305.6 L193.7 302.1 L194.1 299.4 M224.3 332.9 L226.8 331.5 L227.7 331.0 L227.5 328.4 L227.8 327.1 M219.8 312.0 L220.3 311.5 M256.9 321.3 L253.3 320.8 L249.9 320.7 M223.3 307.3 L221.4 304.9 L220.9 302.3 L222.0 301.0 L222.8 300.4 L223.8 297.4 L222.3 295.5 L223.4 293.6 M259.1 309.3 L256.5 305.9 L254.3 303.3 L250.0 304.6 L247.3 305.3 L245.0 305.2 L245.7 303.9 L248.0 300.3 L246.8 298.5 L243.7 296.9 M223.4 293.6 L225.5 293.6 L229.2 294.0 L230.9 294.6 L234.4 295.2 L238.6 293.6 L240.4 294.3 L242.5 296.1 L243.7 296.9 M203.5 233.6 L203.2 232.6 L202.6 231.5 L201.3 230.4 L200.1 228.1 L200.1 224.3 L196.7 222.8 L194.9 221.3 M203.5 233.6 L205.5 232.5 L205.4 231.1 L207.0 230.2 M207.0 230.2 L209.6 228.6 L211.0 227.1 L211.5 221.7 L212.9 219.0 L215.0 218.3 L213.6 215.5 M194.9 221.3 L194.7 220.5 L197.5 218.9 L197.3 216.3 L196.1 215.2 L197.4 213.6 L198.9 209.2 M213.6 215.5 L210.2 213.9 L205.9 212.0 L203.8 210.8 L203.8 209.7 L201.5 210.0 L198.9 209.2 M131.2 121.7 L131.6 121.4 L132.6 120.2 L133.7 119.1 M131.2 121.7 L131.9 121.0 L129.6 123.2 L127.5 124.7 L122.4 125.8 M115.5 119.2 L116.2 122.2 L115.4 124.0 L118.3 124.3 L122.4 125.8 M115.5 119.2 L117.5 118.1 L122.8 118.2 L124.4 116.5 L126.3 115.9 L128.9 114.8 M133.7 119.1 L133.5 115.2 M133.5 115.2 L132.3 112.4 M128.9 114.8 L132.3 112.4 M113.0 136.1 L114.2 134.5 L116.4 131.0 L117.3 129.9 L118.9 129.3 L121.5 128.9 L122.4 125.8 M113.6 112.5 L115.5 119.2 M115.4 110.3 L116.8 110.2 L118.7 111.3 L122.4 112.4 L124.3 113.9 L126.6 115.8 L128.9 114.8 M135.1 120.2 L133.7 119.1 M146.0 121.3 L143.8 120.9 L142.4 120.8 L140.6 118.9 L138.0 119.1 L135.1 120.2 M140.1 109.0 L139.7 109.8 L136.4 111.5 L134.4 112.3 L133.5 115.2 M146.0 121.3 L148.0 117.2 L148.2 115.2 M124.4 106.4 L126.8 106.5 L126.8 110.7 L128.2 113.1 L130.6 112.8 L132.3 112.4 M125.7 145.7 L124.8 145.8 L123.9 144.1 L120.6 144.9 L117.5 145.4 L114.4 145.8 L112.8 146.1 M125.7 145.7 L126.3 144.6 L128.0 142.8 L132.0 140.1 L132.9 137.7 M131.2 121.7 L129.5 125.8 L128.5 129.7 L128.9 129.0 L130.1 129.0 L131.9 131.2 L134.4 133.0 L133.5 134.7 M132.9 137.7 L133.5 134.7 M241.5 239.9 L242.0 236.7 L242.4 234.1 L242.9 231.2 L244.3 228.5 L243.1 226.2 L239.1 225.8 M241.5 239.9 L238.3 242.3 L236.0 243.2 L235.3 243.4 L234.7 244.2 L235.5 244.4 L233.3 244.6 L231.5 246.1 L226.7 247.0 L226.6 248.5 M226.6 248.5 L227.2 247.0 L227.9 246.3 L226.8 244.4 L226.0 242.3 L223.9 240.8 L222.0 239.7 L222.4 236.4 L222.0 235.6 L220.2 233.9 M220.2 233.9 L220.6 232.2 L223.0 229.6 L226.0 229.2 L226.8 227.6 L228.6 224.8 L229.8 223.9 M229.8 223.9 L230.7 223.9 L232.8 226.0 L235.4 225.8 L239.1 225.8 M221.9 214.2 L221.4 216.5 L221.2 218.7 L222.0 220.8 L223.3 220.8 L227.1 219.5 L227.7 219.9 L228.5 221.2 L229.8 223.9 M220.6 214.1 L221.9 214.2 M219.8 214.2 L220.6 214.1 M219.8 214.2 L215.1 216.1 L215.5 216.6 L213.6 215.5 M207.0 230.2 L208.6 231.4 L211.5 231.5 L215.1 232.2 L217.2 232.9 L220.2 233.9 M558.3 214.4 L557.9 213.4 L557.5 211.6 L555.4 209.0 L551.9 209.3 M554.0 175.6 L549.2 177.2 M551.9 209.3 L550.6 207.0 L551.0 204.8 L549.2 203.5 L547.5 201.8 L549.2 198.6 L549.1 194.3 L549.4 191.2 L549.3 190.8 L548.8 188.4 L549.4 185.7 L547.9 186.2 L547.8 185.7 L548.5 182.5 L549.5 178.7 L549.2 177.2 M543.8 231.3 L542.3 230.6 L540.2 227.7 M540.2 227.7 L541.3 224.7 L543.1 223.9 L544.0 224.1 L544.4 221.7 L543.9 219.5 L545.5 217.7 L548.6 215.2 L549.5 213.2 L550.0 210.9 L550.6 209.5 M551.9 209.3 L550.6 209.5 M316.0 170.9 L317.1 172.3 L322.5 171.4 L324.6 174.0 L327.0 176.2 L329.3 177.4 L331.3 178.7 M318.5 167.5 L322.1 165.6 L325.5 165.8 L327.2 165.5 M331.3 178.7 L332.5 175.8 L332.0 174.9 L331.6 174.1 L333.5 172.2 L334.0 169.4 L335.3 164.5 L336.5 162.9 L337.5 162.4 M327.2 165.5 L328.8 164.9 L333.5 163.8 L336.3 162.2 L337.5 162.4 M319.1 157.7 L321.2 156.8 L321.3 157.2 L322.3 159.0 M327.2 165.5 L327.0 163.2 L325.7 162.7 L322.8 161.1 L322.3 159.0 M310.9 147.2 L311.7 146.1 L315.0 144.8 L316.0 145.7 L317.0 148.1 L319.5 148.0 L322.1 148.0 L324.4 148.0 L326.4 147.2 M326.4 147.2 L327.7 148.8 M322.3 159.0 L326.1 155.1 L325.7 153.0 L326.4 151.0 L327.7 148.8 M328.2 205.3 L328.2 207.0 L329.4 208.5 L333.5 206.3 L336.8 205.1 L341.1 203.5 L342.0 204.9 L343.4 207.0 M328.2 205.3 L329.5 201.8 M329.5 201.8 L329.4 200.9 L331.0 199.3 L331.5 197.3 L332.7 194.8 M332.7 194.8 L333.3 197.6 L335.4 200.0 L339.3 201.6 L340.3 204.0 L342.6 205.5 L343.8 206.6 M343.8 206.6 L343.4 207.0 M340.4 94.2 L341.9 93.9 L342.8 94.3 L344.0 95.4 L344.9 97.1 M360.3 102.1 L358.2 101.2 L356.2 98.7 L355.1 97.7 L349.9 97.9 L344.9 97.1 M340.4 94.2 L339.1 94.5 L338.4 95.2 L335.3 96.9 M360.3 102.1 L357.9 103.6 L356.6 105.3 L355.1 107.1 L352.7 108.5 L351.7 106.9 L349.4 107.8 L347.8 110.1 M335.3 96.9 L336.3 100.1 L337.0 100.3 L336.3 102.6 L337.9 102.1 L339.1 102.1 L338.8 106.4 L339.3 108.7 L341.4 109.8 L342.8 109.9 L347.8 110.1 M284.5 43.2 L283.6 44.0 M267.6 55.2 L269.3 55.4 L271.0 55.1 L271.9 53.9 L274.1 52.9 L275.9 51.2 L277.8 50.7 L280.3 51.5 L281.1 51.7 M283.6 44.0 L282.3 47.1 L281.4 50.3 L281.1 51.7 M283.6 44.0 L286.1 43.5 L287.4 44.9 L289.4 44.8 L292.5 42.3 L294.2 42.4 L294.3 43.4 L294.0 47.3 L296.8 49.1 L300.3 49.4 M311.0 44.8 L307.7 46.4 L306.1 48.2 L303.3 49.1 L300.3 49.4 M266.3 62.9 L265.3 63.8 L265.1 64.1 L267.5 64.3 L269.4 64.6 L272.5 66.1 L276.8 65.9 L280.0 65.1 L281.8 66.4 L283.1 67.4 L285.1 67.9 L287.3 69.4 L289.7 69.3 M274.0 85.9 L275.9 84.6 L277.8 82.5 L278.5 83.3 L280.7 82.4 L282.4 81.5 L283.2 80.0 L286.2 76.8 L286.9 74.6 L288.6 72.6 L291.0 71.6 M291.0 71.6 L289.7 69.3 M300.2 104.3 L302.5 101.0 M291.0 71.6 L289.6 73.5 L289.8 75.5 L289.6 79.6 L288.5 80.5 L288.0 82.3 L289.9 84.1 L292.5 85.4 L295.1 87.6 L295.3 88.8 L297.4 91.0 L298.3 93.7 L298.8 96.8 L298.8 99.2 L300.5 99.8 L302.5 101.0 M336.9 75.2 L338.0 73.4 L336.4 72.4 L335.8 70.7 L334.0 71.7 L334.4 69.1 L335.5 66.3 M336.9 75.2 L333.5 77.9 L331.1 79.6 L328.7 81.8 L326.7 83.7 L325.7 83.8 L323.4 84.4 L321.2 83.5 L318.7 84.2 M318.7 84.2 L319.9 83.3 L319.1 81.6 L318.7 79.2 L319.8 76.2 L319.2 76.3 L320.0 73.7 L320.0 69.9 L319.2 68.1 L319.7 66.2 L319.4 65.3 L317.1 62.0 L316.8 58.9 M321.6 53.3 L320.3 56.3 L318.8 58.3 L316.8 58.9 M340.4 94.2 L341.6 93.8 L341.6 90.2 L341.7 87.2 L341.3 86.6 L342.1 84.7 L343.2 83.0 L341.8 80.0 L342.3 76.4 M342.3 76.4 L340.7 76.0 L339.5 75.9 L338.9 76.9 L337.8 76.6 L336.9 75.2 M312.7 95.4 L312.4 94.1 L314.6 91.1 L318.0 87.5 L318.7 84.2 M312.7 95.4 L314.2 95.3 L317.2 95.2 M317.2 95.2 L320.5 94.1 L324.3 93.2 L329.0 91.5 L332.0 92.0 L333.2 94.4 L333.6 95.8 L335.3 96.9 M158.6 177.7 L165.0 177.6 M162.8 196.9 L161.3 195.1 L158.2 195.4 L154.1 198.6 L150.4 198.1 L149.3 198.3 M162.8 196.9 L162.8 196.3 M162.8 196.3 L163.3 195.4 L164.2 195.2 L163.5 192.2 L163.2 189.1 L165.1 186.1 L165.7 184.2 L166.1 182.0 L165.0 177.6 M148.6 185.1 L145.0 187.5 L146.8 189.4 M149.3 198.3 L148.4 194.8 L148.6 192.0 L148.1 191.3 L146.8 189.4 M125.7 145.7 L127.3 148.3 L127.6 149.5 L128.0 152.4 L128.5 155.3 L130.8 156.6 L133.3 156.9 L132.4 160.6 L133.8 160.9 M133.8 160.9 L133.1 162.1 L132.5 162.8 L132.3 165.0 L130.5 166.1 L130.4 167.6 M107.7 160.7 L111.4 161.6 L114.7 162.4 L118.5 164.1 L120.3 166.6 L120.6 168.1 L119.2 170.8 L117.8 175.0 M130.4 167.6 L127.7 168.6 L124.3 169.3 L122.3 171.2 L120.4 172.5 L119.4 173.8 L117.8 175.0 M111.7 197.4 L113.6 197.9 L116.9 197.4 M117.8 175.0 L117.9 177.4 L117.9 178.1 L118.3 177.6 L119.2 179.0 L118.8 182.0 L117.7 184.7 L117.7 185.8 L116.7 188.5 L115.1 192.3 L114.2 193.7 L116.2 195.1 L116.9 197.4 M145.7 219.6 L145.8 218.9 L145.4 215.5 L143.9 213.2 L143.3 211.8 L142.4 211.9 L141.8 209.1 L143.0 203.9 M140.5 228.1 L142.7 226.1 L144.9 222.1 L145.7 219.6 M143.0 203.9 L142.6 202.0 L140.3 201.4 L135.1 201.4 L132.0 201.2 L130.1 200.2 L130.6 198.9 L130.7 198.8 L129.4 198.6 L128.0 196.4 L126.3 195.8 M116.9 197.4 L117.4 198.6 L119.4 197.8 L122.1 196.7 L126.3 195.8 M156.7 176.0 L158.7 172.5 L161.3 170.2 L162.4 169.5 L163.8 168.6 L163.7 166.1 M165.0 177.6 L165.0 177.6 M165.0 177.6 L164.4 176.5 L165.8 176.1 L164.1 174.8 L164.1 171.7 L166.3 170.7 L168.2 168.2 L169.0 165.5 M169.0 165.5 L163.7 166.1 M151.2 167.2 L151.1 161.8 L152.0 159.4 M163.7 166.1 L160.7 165.0 L158.7 163.7 L155.8 163.6 L153.7 163.3 L152.6 161.7 L152.0 159.4 M194.1 299.4 L195.9 297.9 L197.5 293.8 L196.6 292.1 M196.6 292.1 L195.0 292.2 L191.0 294.3 L189.2 293.7 L190.1 291.7 L192.1 288.9 L189.6 287.7 L187.3 287.2 L184.7 285.2 L182.4 285.2 L178.7 285.7 M165.3 293.7 L167.5 291.8 L169.6 291.0 L172.9 286.6 L174.8 284.5 L175.0 284.6 L177.1 285.1 L178.7 285.7 M219.8 268.3 L217.4 269.9 L218.7 273.0 L218.0 276.4 L218.8 276.8 L216.9 277.6 M219.8 268.3 L220.3 267.5 L217.9 266.2 L216.9 264.9 L213.8 263.4 L210.3 265.5 L209.8 264.2 L209.1 260.3 L208.4 255.2 L206.6 252.9 L203.1 252.7 L197.7 252.7 L198.2 250.6 L198.4 249.4 L197.9 248.9 L197.2 247.8 L196.5 244.8 M210.1 281.9 L209.4 280.3 L205.2 280.1 L202.4 279.7 L200.1 279.4 L197.8 278.2 L196.5 277.5 L195.8 277.7 L194.9 276.6 L194.4 277.3 L191.4 278.4 L189.8 277.0 L190.2 273.9 L188.5 273.0 L184.9 271.5 M210.1 281.9 L213.7 282.0 L216.9 277.6 M196.5 244.8 L194.9 245.6 L191.0 247.5 M191.0 247.5 L189.3 248.2 L186.5 249.1 L183.9 250.3 M183.9 250.3 L182.6 252.1 L179.0 252.4 L177.0 252.6 L175.8 250.8 L174.6 251.4 M184.9 271.5 L180.6 270.0 L177.8 266.9 L176.4 267.0 L176.0 266.7 M174.6 251.4 L176.2 255.3 L175.6 257.6 L173.3 261.1 L173.8 264.5 L176.0 266.7 M248.5 285.9 L248.1 287.9 L246.0 289.5 L246.6 292.0 L247.6 293.5 L244.6 296.2 L243.7 296.9 M222.5 264.6 L222.2 264.5 L221.2 268.1 L219.8 268.3 M222.5 264.6 L224.7 264.6 L227.0 262.9 L229.3 263.3 L230.9 263.7 L232.4 265.8 L236.6 265.4 L239.6 266.0 M239.6 266.0 L241.5 270.7 L242.7 272.8 L241.9 274.1 L243.8 272.9 L246.1 273.1 L246.4 273.9 L245.8 276.0 L244.9 279.4 L246.5 281.0 L249.0 282.9 L248.5 285.9 M223.4 293.6 L224.0 292.2 L222.3 291.2 L221.2 289.0 L221.0 286.6 L222.2 285.7 L222.0 284.0 L220.1 280.2 L216.9 277.6 M222.5 264.6 L222.6 261.7 L224.9 259.0 L225.2 257.4 L225.9 254.0 L225.8 253.2 L225.2 253.5 L226.6 251.1 L226.6 248.5 M203.5 233.6 L202.4 235.9 L200.4 237.4 L200.0 239.0 L200.0 241.4 L197.5 243.8 L196.5 244.8 M178.7 285.7 L180.1 284.2 L180.2 279.8 L179.9 277.2 L183.4 273.5 L184.9 271.5 M196.6 292.1 L196.7 291.7 L199.0 291.0 L199.9 289.8 L201.8 288.3 L204.4 285.8 L205.9 283.0 L208.5 283.4 L209.4 283.2 L210.1 281.9 M166.4 287.2 L165.7 285.6 L163.8 284.6 L166.0 282.1 L167.4 280.4 L167.6 277.5 L168.2 276.2 L168.5 276.1 L168.9 275.4 L169.1 274.3 L169.4 272.0 L170.6 270.7 L172.7 268.8 L176.0 266.7 M149.0 253.2 L153.0 252.0 L158.9 249.7 L160.8 250.2 L164.1 251.7 L166.6 251.6 L168.1 252.7 L169.8 252.7 L170.0 253.6 L172.8 253.0 L174.6 251.4 M148.2 254.0 L149.0 253.2 M236.4 131.2 L234.5 132.9 L232.0 136.6 L230.3 139.0 L229.0 143.0 L228.3 143.8 L228.4 145.4 M252.6 159.0 L250.4 160.9 L246.7 161.4 L244.6 161.8 L240.4 162.1 M240.4 162.1 L238.1 160.9 L237.7 159.5 L235.6 157.0 L234.2 154.9 L232.8 151.8 L231.1 150.4 L231.1 148.1 M228.4 145.4 L230.0 145.4 L231.1 145.7 L231.1 148.1 M235.9 203.0 L239.8 202.8 M235.9 203.0 L233.7 201.1 L232.5 197.7 M232.5 197.7 L231.9 196.7 L232.3 194.4 L230.5 193.1 L229.4 191.5 L229.7 188.7 M229.7 188.7 L231.1 188.0 L234.3 187.1 L235.3 185.9 L237.8 184.4 L240.1 184.9 L241.8 184.5 L245.2 184.5 L247.2 184.4 M239.8 202.8 L240.8 202.7 L242.1 200.3 L243.5 200.3 L246.1 199.8 L249.0 198.2 L249.6 198.8 L249.6 197.6 L249.9 197.0 L250.9 195.4 M250.9 195.4 L248.6 195.4 L251.5 190.5 L252.7 188.8 L252.9 188.0 L248.8 187.6 L246.5 186.5 L247.2 184.4 M241.7 220.7 L241.5 223.1 L239.1 225.8 M221.9 214.2 L223.1 213.8 L225.0 213.0 L223.6 211.6 L224.2 210.8 L226.5 209.3 L228.2 207.2 L232.8 205.3 L234.5 203.6 L235.9 203.0 M241.7 220.7 L241.8 216.8 L240.9 216.5 L240.0 214.9 L239.6 210.1 L239.9 206.8 L239.0 206.3 L238.0 206.0 L239.8 202.8 M220.6 214.1 L220.6 210.6 L220.6 208.3 L220.3 206.4 L217.7 206.0 L218.9 203.5 L218.8 200.4 L218.2 199.7 L219.1 196.9 M219.1 196.9 L220.8 199.6 L222.9 199.5 L224.5 199.4 L226.1 198.1 L228.9 198.2 L232.5 197.7 M240.4 162.1 L240.2 165.1 L238.3 169.4 L236.3 169.2 L234.1 170.9 M250.9 195.4 L250.9 195.4 M234.1 170.9 L236.4 172.9 L240.2 173.5 L241.3 173.8 L242.8 175.7 L244.7 179.1 L247.3 183.1 L247.2 184.4 M152.5 148.9 L152.4 147.2 L152.4 145.2 L152.0 146.6 L153.2 144.1 L154.2 140.9 L154.4 138.6 M152.5 148.9 L149.9 149.5 L149.2 148.4 L149.0 147.9 L146.4 147.4 L145.1 145.9 L142.4 146.2 L139.6 146.0 L135.6 145.5 M135.6 145.5 L137.8 144.5 L141.1 144.9 L143.5 142.1 L147.0 140.7 L150.6 138.5 L152.0 137.4 L154.7 136.9 L153.8 137.3 L154.5 137.2 M154.4 138.6 L154.5 137.2 M133.8 160.9 L137.4 160.6 L140.7 159.9 L144.4 159.5 L146.9 158.6 L147.8 158.7 L151.1 157.9 L152.6 156.8 M154.1 150.6 L154.1 152.0 L154.4 153.0 L152.6 156.8 M132.9 137.7 L133.6 143.0 L135.6 145.5 M154.1 150.6 L152.5 148.9 M165.4 138.5 L163.0 138.6 L160.0 138.1 L157.6 138.1 L155.2 138.1 L154.4 138.6 M162.1 125.5 L161.1 127.0 L158.9 128.2 L157.0 128.4 L154.9 130.3 L153.8 130.8 M153.8 130.8 L154.0 132.9 L154.5 137.2 M137.9 122.4 L140.4 124.3 L141.9 126.7 L143.0 129.8 L144.6 132.8 M137.9 122.4 L141.4 123.5 L145.6 123.0 L147.1 124.0 L149.3 125.7 M144.6 132.8 L146.7 133.4 L150.4 133.4 L153.0 131.5 M153.0 131.5 L152.6 129.9 M149.3 125.7 L150.4 127.7 L152.6 129.9 M135.1 120.2 L136.9 120.5 L136.3 121.5 L137.9 122.4 M133.5 134.7 L134.9 136.5 L135.9 136.0 L137.4 136.5 L139.7 135.8 L142.0 133.4 L144.6 132.8 M146.0 121.3 L147.1 123.7 L149.3 125.7 M153.8 130.8 L153.0 131.5 M159.5 117.1 L158.9 118.2 L157.6 119.1 L155.6 123.4 L154.2 125.8 L152.6 129.9 M241.7 220.7 L244.4 221.4 L245.5 222.0 L245.9 223.0 L249.7 222.1 L251.6 219.6 L254.4 220.1 L254.8 219.2 L257.7 218.2 L260.9 216.6 L261.9 216.8 L263.5 216.6 L265.9 215.2 M265.8 207.2 L265.1 209.2 L266.8 211.4 L267.5 214.4 L266.3 215.1 M265.9 215.2 L266.3 215.1 M550.6 209.5 L546.9 207.6 L543.8 206.8 L541.8 207.1 L540.8 206.0 L540.9 204.5 L539.1 202.5 M545.7 178.7 L546.0 181.2 L544.5 183.4 L543.4 186.3 L541.9 189.1 L541.2 191.9 L538.9 194.3 L536.3 197.1 M549.2 177.2 L548.1 177.2 L545.7 178.7 M536.3 197.1 L537.7 199.6 L538.2 201.1 L538.5 200.6 L538.3 202.1 M539.1 202.5 L538.3 202.1 M521.7 244.6 L521.6 244.5 M521.7 244.6 L527.1 244.5 M521.6 244.5 L521.8 243.1 L522.3 241.9 L522.0 240.3 L522.8 235.7 L523.9 232.2 L524.6 230.4 L525.3 227.6 L521.3 225.7 L521.8 222.9 M527.1 244.5 L527.1 242.7 L529.4 240.2 L533.4 238.9 L534.8 236.5 L534.0 236.2 L534.4 235.3 L535.6 233.5 L535.7 232.4 L538.2 228.2 M521.8 222.9 L525.9 222.7 L529.0 224.8 L532.4 225.8 L535.0 227.2 L536.3 227.8 L537.3 227.7 M538.2 228.2 L537.3 227.7 M535.5 255.2 L534.3 253.0 L532.3 251.7 L529.2 251.1 L529.0 248.5 L530.4 246.3 L529.9 245.7 L527.1 244.5 M517.9 261.7 L518.9 259.3 L520.0 256.5 L519.7 256.2 L520.2 255.6 L521.6 252.9 L523.8 250.0 L523.6 247.8 L523.3 248.2 L522.6 246.8 L521.7 244.6 M540.2 227.7 L538.2 228.2 M536.7 221.7 L537.7 218.4 L537.6 215.9 L537.1 214.3 L538.5 212.0 L538.7 208.4 L539.5 206.1 L540.2 205.6 L539.1 202.5 M536.7 221.7 L536.3 226.4 L537.3 227.7 M384.9 77.1 L387.4 75.3 L389.8 76.5 L393.2 74.5 L394.3 73.2 L395.8 73.4 L395.3 74.7 L395.8 75.6 L398.1 74.6 L399.7 74.3 L403.6 74.8 M384.9 77.1 L379.9 75.1 L378.1 71.8 L377.9 70.7 L376.2 69.6 L375.6 66.4 L374.6 64.6 M405.5 66.4 L404.0 68.0 L405.4 70.2 L405.0 71.2 L404.6 72.6 L403.6 74.8 M362.9 64.2 L363.1 67.8 M342.3 76.4 L345.1 76.5 L348.5 75.5 L351.1 74.6 L353.2 75.1 L354.2 73.9 L356.9 72.5 L360.2 71.2 M363.1 67.8 L362.1 69.2 L360.2 71.2 M344.9 97.1 L345.7 95.4 L350.3 93.4 L350.1 92.2 L351.6 89.6 L352.2 88.4 L353.0 87.0 L356.7 84.4 L357.4 82.4 L356.8 80.7 L358.2 79.1 L358.4 75.8 L360.7 72.7 M360.7 72.7 L360.2 71.2 M360.7 72.7 L360.6 75.7 L361.4 79.1 L360.3 81.3 L359.3 83.3 L358.1 86.9 L358.3 88.5 L359.8 87.9 L360.7 88.0 L362.2 89.8 L362.3 93.1 L362.6 93.3 L362.1 96.3 L362.4 99.5 M360.3 102.1 L360.4 102.0 M360.4 102.0 L361.4 99.7 L362.4 99.5 M369.2 87.6 L369.5 88.2 L367.3 90.0 L366.8 92.2 L364.7 94.0 L362.9 95.6 L361.7 95.7 L361.3 97.8 L362.4 99.5 M369.2 87.6 L369.4 84.6 L370.1 80.8 L368.5 79.5 L366.7 77.1 L366.6 76.6 L366.4 77.3 L365.7 74.6 L365.4 71.7 L367.1 69.2 L366.0 68.6 L363.1 67.8 M362.4 99.5 L362.4 99.5 M364.9 111.6 L363.4 111.5 L363.0 109.5 L363.3 104.4 L362.6 102.5 L360.4 102.0 M364.5 112.5 L364.9 111.6 M347.8 110.1 L345.5 115.5 M364.5 112.5 L363.2 114.2 L360.7 117.6 L359.6 119.1 L355.3 121.6 L355.2 122.2 L354.6 122.1 L353.1 123.0 M353.1 123.0 L351.2 121.2 L351.1 115.8 L350.0 114.3 L345.5 115.5 M317.2 95.2 L320.1 96.1 L321.8 98.4 L325.5 98.0 L327.0 100.5 L327.4 105.4 L328.7 107.8 L329.4 109.5 L330.9 108.5 L332.7 108.7 L334.1 111.7 L334.5 114.6 L333.2 116.7 L332.0 119.0 M332.0 119.0 L334.0 118.8 L338.0 117.4 L341.8 116.7 M345.5 115.5 L341.8 116.7 M307.4 125.9 L309.3 125.3 L311.9 126.4 M302.5 101.0 L305.0 100.1 L306.0 99.9 L306.0 99.9 L308.5 99.7 L309.7 98.4 L311.6 97.0 L313.5 95.5 M313.5 95.5 L311.1 97.6 L309.1 100.0 L311.0 101.8 L315.1 102.0 L318.8 102.9 L318.9 105.3 L319.3 108.3 L320.0 111.2 L321.4 113.0 L322.0 115.6 L324.8 116.0 L325.0 117.5 L325.4 120.7 M311.9 126.4 L312.0 125.9 L312.1 126.4 L314.9 123.8 L318.7 122.5 L322.4 120.3 L324.7 120.0 L325.4 120.7 M332.0 119.0 L330.4 121.2 L330.5 122.8 M312.7 95.4 L312.2 95.3 M313.5 95.5 L312.2 95.3 M325.4 120.7 L326.9 120.9 L329.6 122.4 L330.5 122.8 M324.4 192.3 L327.1 189.9 M324.4 192.3 L323.9 190.1 L323.8 188.3 L322.8 187.3 M327.1 189.9 L331.0 186.9 L332.4 184.3 L333.2 181.2 L332.0 181.3 M322.8 187.3 L322.9 185.6 L323.0 183.8 L324.4 183.4 L327.7 180.3 L331.3 178.7 M331.3 178.7 L332.2 179.1 L332.0 181.3 M327.1 199.1 L325.8 197.5 L323.5 195.8 L325.5 196.4 L325.6 195.2 L324.4 192.3 M327.1 199.1 L329.5 201.8 M332.7 194.8 L333.3 193.6 M333.3 193.6 L333.0 189.6 L332.3 189.0 L328.4 190.2 M328.4 190.2 L327.1 189.9 M306.8 180.4 L306.0 183.9 L304.8 186.1 L303.6 189.6 L306.7 191.5 L307.2 193.2 L307.6 194.1 L309.0 195.3 L309.9 198.6 M306.8 180.4 L306.3 182.8 L307.9 183.6 L309.4 183.3 L311.9 185.4 L315.2 185.6 L318.6 185.5 L322.8 187.3 M314.0 205.2 L310.4 204.9 L310.0 204.3 L311.0 201.3 L309.9 198.6 M314.0 205.2 L318.0 203.5 L322.7 201.5 L327.1 199.1 M306.8 180.4 L306.2 178.7 M331.3 178.7 L331.3 178.7 M313.3 63.4 L310.3 64.6 L307.5 64.9 L305.3 63.5 L303.0 61.0 L301.0 60.1 L300.1 59.1 L298.0 56.4 M313.3 63.4 L308.2 66.9 L306.0 69.3 L304.2 70.4 L303.2 71.1 M303.2 71.1 L301.4 70.2 L298.0 69.5 L297.1 68.1 L295.1 66.3 L292.2 65.8 L289.6 67.1 M289.6 67.1 L290.7 65.0 L291.6 60.6 M291.6 60.6 L293.0 59.6 L295.5 58.5 L298.0 56.4 M316.8 58.9 L315.8 59.7 L316.1 59.0 L315.3 59.5 L313.3 63.4 M300.3 49.4 L299.8 50.4 L297.3 53.6 L298.0 56.4 M312.2 95.3 L312.5 91.7 L313.7 89.3 L314.7 88.6 L311.6 88.6 L309.8 86.2 L310.4 84.0 L312.1 82.1 L312.1 78.8 L308.2 75.4 L307.5 73.1 L307.5 72.9 L304.6 73.4 L303.2 71.1 M289.7 69.3 L289.6 68.6 L289.6 67.1 M281.1 51.7 L281.8 52.7 L282.3 53.4 L284.0 52.7 L287.3 53.1 L288.7 53.6 L290.4 54.2 L289.7 56.9 L289.3 60.1 L291.6 60.6 M143.6 178.3 L142.0 177.7 L142.1 178.5 L141.8 181.1 L139.6 182.8 L139.2 183.2 L136.7 185.5 M143.6 178.3 L141.1 176.7 L138.7 176.0 L135.0 174.1 L133.4 170.9 L131.9 167.9 M131.9 167.9 L132.6 170.1 L130.8 173.5 L129.5 175.5 L128.0 178.9 L128.9 181.2 L128.5 182.7 L126.7 184.6 L128.5 186.9 L130.1 189.0 L130.3 191.0 M136.7 185.5 L132.6 189.2 L130.3 191.0 M145.6 177.5 L143.6 178.3 M146.8 189.4 L142.7 190.0 L142.3 190.9 L140.3 190.9 L139.9 189.7 L140.5 187.2 L139.4 184.7 L136.7 185.5 M152.6 156.8 L152.0 159.4 M130.4 167.6 L131.9 167.9 M126.3 195.8 L127.5 192.0 L129.5 191.7 L130.3 191.0 M149.3 198.3 L147.5 201.7 L146.4 202.8 L143.6 204.3 L143.0 203.9 M167.2 140.5 L170.5 141.7 M188.0 122.1 L189.0 121.4 L188.9 124.6 L188.8 127.5 L187.9 129.7 L186.9 133.5 L187.0 136.1 L184.0 140.0 M184.0 140.0 L183.8 138.1 L184.5 137.4 L183.6 137.7 L180.2 138.2 L179.0 139.0 L176.2 139.9 L173.1 141.0 M170.5 141.7 L173.1 141.0 M194.9 221.3 L193.6 220.6 L190.7 220.9 L186.2 222.6 L185.1 222.0 L185.2 218.6 M198.9 209.2 L198.8 209.2 M198.8 209.2 L196.5 210.9 L193.9 211.5 M193.9 211.5 L193.3 211.9 L191.9 213.1 L190.2 211.8 L188.0 211.8 L185.6 213.4 M185.2 218.6 L185.2 216.2 L185.6 213.4 M191.0 247.5 L190.0 247.8 L189.5 245.6 L189.1 243.5 L189.9 237.6 L189.1 234.9 L187.6 233.0 L184.5 230.8 L182.4 229.3 L182.4 228.3 L182.2 227.3 L183.4 221.6 L182.6 219.4 M185.2 218.6 L184.4 219.1 L182.6 219.4 M195.0 200.9 L195.6 201.6 M193.9 211.5 L191.8 209.6 L192.1 206.3 L195.6 201.6 M195.0 200.9 L191.8 201.0 L189.0 202.1 L183.9 203.1 L181.7 204.6 L179.5 205.0 M185.6 213.4 L184.6 212.0 L182.3 212.8 L181.0 208.9 L179.5 205.0 M174.5 198.1 L174.1 197.9 L176.3 196.2 M174.5 198.1 L174.5 201.4 L175.2 202.7 L176.5 204.2 M176.3 196.2 L178.9 194.4 L181.8 193.5 L183.9 195.8 L187.7 196.9 L191.0 199.2 L195.0 200.9 M176.5 204.2 L179.5 205.0 M192.4 140.8 L193.3 140.9 L194.3 142.5 L195.9 146.6 M192.4 140.8 L188.2 141.7 L184.6 141.8 L183.7 140.5 M195.9 146.6 L192.3 147.2 L188.5 147.5 L185.3 148.3 L182.4 148.7 M183.7 140.5 L181.7 143.4 L183.3 145.0 L183.1 146.8 L182.4 148.7 M208.0 132.9 L208.8 136.2 L208.7 139.6 M208.0 132.9 L205.9 134.8 L204.3 135.6 L202.9 138.1 L201.1 138.7 L198.2 140.2 L194.0 141.0 L192.4 140.8 M208.7 139.6 L207.8 139.9 L204.6 142.5 L203.0 144.6 L201.3 147.6 L200.7 148.1 L200.7 147.1 L198.1 148.4 M198.1 148.4 L195.9 146.6 M206.7 123.8 L205.6 126.7 L206.3 126.0 L206.6 127.9 L207.0 129.9 L207.7 130.5 L208.0 132.9 M184.0 140.0 L183.7 140.5 M208.7 139.6 L213.0 141.3 M228.4 145.4 L226.4 145.6 L224.6 146.5 L219.7 147.5 L216.2 148.2 L215.3 147.0 M213.0 141.3 L214.7 142.2 L215.3 147.0 M229.7 188.7 L228.7 184.9 M234.1 170.9 L232.7 172.1 L230.3 173.2 L229.6 174.6 L227.9 174.7 M228.7 184.9 L227.5 183.3 L225.5 182.6 L227.6 179.9 L226.8 179.2 L226.1 177.1 L227.9 174.7 M250.6 284.4 L252.4 284.5 L254.5 285.1 L258.5 284.7 L260.2 285.1 L264.0 286.8 L267.6 285.2 M267.6 285.2 L269.1 286.1 L268.0 288.1 M248.5 285.9 L250.6 284.4 M269.7 290.6 L268.4 289.3 M268.0 288.1 L268.4 289.3 M304.7 277.7 L303.1 278.3 L301.0 277.5 L299.3 276.4 M304.7 277.7 L302.9 280.9 L301.7 282.5 L299.6 284.9 L300.5 287.0 M299.3 276.4 L300.0 280.0 L300.6 283.4 L298.3 284.3 L297.3 285.2 L297.4 287.2 L297.9 289.8 M451.3 55.1 L451.2 57.1 L451.7 59.4 L451.2 62.0 M434.9 54.2 L435.9 58.3 L435.2 61.0 L436.4 61.7 L436.2 64.3 L438.0 68.3 L440.5 68.5 L440.0 70.5 L441.1 73.1 L441.1 77.1 L440.8 76.5 M440.8 76.5 L441.6 75.6 M441.6 75.6 L442.4 75.7 L443.7 74.4 L445.3 71.8 L444.5 68.7 L446.3 66.8 L449.0 64.8 L451.2 62.0 M339.5 265.1 L341.7 270.2 M352.9 263.6 L351.4 263.6 M339.5 265.1 L342.6 263.8 L344.7 264.0 L349.1 261.8 M349.1 261.8 L351.4 263.6 M266.3 215.1 L269.3 216.7 M281.1 197.3 L283.6 200.2 L285.0 201.0 L283.9 202.3 M269.3 216.7 L269.8 216.6 L271.1 217.5 L271.8 216.9 L273.7 213.1 L275.5 211.8 L276.8 209.7 L278.6 209.3 L279.6 208.2 L280.4 205.5 L281.2 204.4 L283.9 202.3 M309.9 198.6 L310.5 199.8 L309.2 200.8 L305.4 202.6 L302.7 205.8 L300.9 207.1 L300.9 207.4 L301.2 208.7 L299.5 208.6 L297.0 210.3 M283.9 202.3 L288.0 201.3 L290.4 204.0 L293.3 206.9 L295.0 208.6 L297.0 210.3 M298.6 214.9 L300.3 216.0 L300.8 216.4 L301.5 217.7 L302.6 218.5 L307.2 217.4 L310.8 215.4 M317.4 213.7 L314.3 214.9 L310.8 215.4 M314.0 205.2 L315.5 206.6 L317.1 208.0 L317.0 209.8 L317.0 212.1 L318.7 212.2 M318.7 212.2 L317.4 213.7 M298.6 214.9 L297.9 213.1 M297.0 210.3 L297.9 213.1 M298.6 214.9 L296.9 218.4 L297.9 219.6 L300.6 219.9 L300.4 222.2 L299.1 227.3 L300.5 228.6 M310.8 215.4 L307.8 219.7 M300.5 228.6 L301.4 227.9 L303.4 227.0 L304.8 222.8 L307.8 219.7 M515.6 245.3 L512.8 244.5 L512.1 243.5 L509.9 242.6 L507.0 241.8 L505.4 239.2 M505.4 239.2 L504.7 239.1 L507.7 238.4 L508.3 236.2 L509.0 233.2 M515.6 245.3 L519.4 243.1 M519.4 243.1 L517.4 240.3 L515.3 238.8 L515.0 235.0 L512.8 233.3 L509.0 233.2 M526.4 178.5 L524.7 179.5 L521.9 180.0 L520.0 182.3 L517.7 185.2 M545.7 178.7 L543.3 179.0 L541.4 178.9 L539.4 177.9 L537.4 180.1 L532.6 182.2 L529.8 182.6 L528.6 180.7 L527.4 178.3 L526.4 178.5 M536.3 197.1 L534.5 198.5 L535.3 196.9 L534.8 196.4 L532.3 195.7 L530.6 195.5 L528.2 194.7 L525.0 195.6 L521.6 196.5 L519.4 195.8 M519.4 195.8 L517.0 191.5 M517.7 185.2 L518.5 188.5 L516.9 189.3 L517.0 191.5 M527.4 208.8 L526.0 210.4 L526.3 212.9 M527.4 208.8 L525.0 206.7 L523.1 203.7 M523.1 203.7 L523.5 203.3 L522.7 205.4 L520.5 206.7 L518.2 206.5 L516.4 208.2 L515.1 212.5 M526.3 212.9 L527.0 214.6 L523.1 214.9 L521.0 215.9 L518.3 216.2 L516.4 217.4 M516.4 217.4 L517.1 214.3 L516.7 213.7 L515.1 212.5 M536.7 221.7 L536.0 218.5 L533.6 217.6 L530.6 218.0 L529.9 216.9 L529.1 213.9 L526.3 212.9 M538.3 202.1 L536.7 204.9 L533.5 205.8 L531.2 206.6 L527.4 208.8 M519.4 195.8 L521.6 196.4 L522.7 199.4 L523.1 203.7 M456.1 249.1 L456.8 249.5 M466.9 250.3 L463.1 249.9 L460.7 248.8 L459.1 248.6 L456.8 249.5 M465.0 240.9 L465.1 241.0 M465.1 241.0 L466.4 242.6 L465.5 243.5 L465.4 245.7 M465.0 240.9 L464.0 243.4 L461.8 242.9 L461.3 242.8 L461.1 243.7 L458.2 245.8 L456.1 249.1 M466.9 250.3 L466.2 247.8 M465.4 245.7 L466.2 247.8 M478.8 240.8 L474.8 242.1 L472.7 241.0 L468.9 240.3 L465.1 241.0 M480.4 245.5 L480.7 245.5 M478.8 240.8 L480.4 245.5 M465.4 245.7 L467.9 246.3 L471.5 245.9 L475.0 245.0 L479.8 244.2 L480.7 245.5 M494.8 246.3 L491.3 246.6 M494.8 246.3 L495.7 248.3 L494.9 252.8 L496.0 257.0 M491.3 246.6 L490.2 248.2 L485.2 251.4 L484.5 254.5 L481.6 255.8 L480.2 257.0 M496.0 257.0 L494.0 255.4 L491.2 255.2 L488.9 255.3 L487.3 258.3 L484.1 259.3 L482.2 259.9 M482.2 259.9 L482.0 256.0 L480.2 257.0 M413.0 81.7 L416.0 80.9 L416.2 78.5 L418.1 75.7 L419.4 74.5 L421.4 69.9 L423.0 70.1 L425.6 69.1 L426.7 68.8 M413.0 81.7 L417.6 81.2 L420.2 80.8 L419.6 84.0 L419.4 88.8 L420.1 90.2 M420.1 90.2 L420.9 89.5 M429.0 73.0 L428.6 71.0 M429.0 73.0 L427.6 74.7 L426.5 76.7 L428.4 77.4 L426.0 81.4 L423.6 82.4 L421.7 86.8 L421.2 89.3 M421.2 89.3 L420.9 89.5 M428.6 71.0 L426.7 68.8 M405.1 80.6 L407.2 80.6 L409.6 82.2 L413.0 81.7 M403.6 74.8 L406.0 77.5 L405.1 80.6 M411.6 65.0 L413.4 65.6 L415.1 65.2 L418.2 65.0 L419.0 64.4 L420.3 63.9 L421.7 66.4 L424.5 67.7 L426.7 68.8 M433.8 52.9 L434.3 55.3 L433.6 56.2 L432.8 59.0 L431.2 61.1 L428.6 64.6 L428.3 66.0 L428.8 68.7 L428.6 71.0 M440.8 76.5 L437.8 77.1 L436.6 77.2 L432.6 77.1 L429.6 75.3 L429.0 73.0 M441.4 75.7 L441.6 75.6 M434.4 84.8 L437.0 81.5 L439.4 79.2 L441.4 75.7 M434.4 84.8 L432.1 84.5 L430.6 85.6 L427.1 86.7 L425.5 87.4 L422.9 88.7 L421.2 89.3 M434.4 84.8 L435.7 85.3 L436.2 86.2 L436.5 89.6 L436.5 92.7 M436.5 92.7 L433.1 92.7 M433.1 92.7 L431.9 90.9 L431.0 89.2 L428.6 87.9 L425.9 89.3 L422.4 90.0 L420.9 89.5 M497.0 74.6 L495.3 77.6 L492.9 79.0 L492.9 80.2 L492.5 81.5 L492.0 83.2 M489.3 71.1 L486.9 74.2 L486.7 74.4 L486.1 74.4 L486.0 75.7 L481.9 76.0 M492.0 83.2 L488.1 81.2 L485.3 79.8 L483.3 77.0 L481.9 76.0 M514.1 87.1 L511.2 89.1 L507.9 89.7 L505.5 89.3 L504.4 87.9 L502.5 86.5 L499.5 87.2 L498.5 88.5 L498.5 88.6 L496.5 90.1 M496.5 90.1 L494.4 91.9 L492.5 91.0 L489.8 87.6 M492.0 83.2 L489.8 87.6 M482.8 63.7 L482.2 64.9 L482.4 66.0 L480.7 66.0 L479.5 66.6 L476.5 68.8 M476.5 68.8 L476.6 70.7 M481.9 76.0 L479.5 76.1 L477.5 73.3 L476.6 70.7 M432.7 129.4 L432.1 127.3 L432.5 123.9 L434.2 122.1 M432.7 129.4 L430.6 126.4 L430.1 123.3 L428.5 121.2 L424.6 123.0 L423.4 122.3 L422.2 119.8 L419.7 118.5 M434.2 122.1 L434.3 120.9 L433.1 119.0 L432.5 115.9 L434.3 113.6 L433.2 112.7 L429.7 110.4 L425.9 108.2 M419.7 118.5 L422.1 114.6 L422.6 113.0 L424.4 112.6 L425.8 111.6 L425.5 108.4 L425.1 107.8 M425.9 108.2 L425.3 108.0 M425.1 107.8 L425.3 108.0 M435.6 104.8 L430.9 106.0 L425.9 108.2 M435.6 104.8 L436.0 104.8 M436.0 104.8 L437.0 102.0 L434.9 101.2 L433.9 100.1 L434.1 98.2 L434.4 96.4 L433.8 94.1 L433.1 92.7 M419.8 97.4 L421.0 97.7 L421.1 98.9 L421.6 102.5 L422.8 104.4 L423.7 106.3 L425.3 108.0 M419.8 97.4 L419.8 94.1 L419.4 92.7 L419.5 91.2 L420.1 90.2 M435.6 104.8 L439.2 105.0 L440.0 107.0 L439.8 110.0 L440.3 111.2 L440.7 111.5 L440.3 113.6 L441.5 115.1 L444.5 113.6 L445.4 113.5 L445.3 116.5 M434.2 122.1 L437.8 120.3 L439.0 119.2 L440.8 119.4 L442.6 119.4 L444.2 120.1 M445.3 116.5 L444.4 118.6 L444.2 120.1 M493.4 101.9 L493.0 102.7 L492.2 104.1 L490.5 106.6 L488.7 109.4 M492.7 114.3 L490.9 112.2 L488.1 110.2 L489.2 109.5 L488.7 109.4 M492.7 114.3 L493.5 114.2 M493.4 101.9 L494.4 102.9 L498.0 102.0 L501.3 103.4 M493.5 114.2 L494.9 111.5 L497.3 109.4 L498.5 107.1 L499.0 106.8 L500.6 105.6 L501.3 103.4 M514.1 87.3 L513.5 90.4 M509.2 101.4 L507.3 103.7 L506.0 109.6 M493.4 101.9 L494.5 100.0 L496.4 96.9 L497.3 93.0 L496.5 92.6 M496.5 90.1 L496.5 92.6 M506.0 109.6 L503.0 108.2 L501.3 103.4 M364.9 111.6 L366.1 110.5 L367.1 111.5 L367.9 109.9 L370.8 108.7 L373.7 106.8 L376.1 106.0 L377.6 106.5 L378.4 106.3 M362.4 99.5 L361.9 100.9 L364.0 102.1 L367.2 100.2 L371.1 99.1 L373.7 98.9 L376.0 99.5 M376.0 99.5 L376.0 101.9 L376.9 104.3 L377.1 106.1 L378.4 106.3 M369.2 87.6 L371.5 90.7 L376.3 90.1 M376.0 99.5 L376.6 97.0 L375.6 97.1 L377.3 93.8 L377.0 92.7 L376.3 90.1 M331.8 134.8 L330.0 135.0 L329.2 136.3 L329.4 139.6 L326.3 142.3 M331.8 134.8 L329.5 132.5 L329.1 127.9 M329.1 127.9 L327.9 126.3 L327.2 125.6 L324.8 125.3 L323.4 124.2 L320.8 124.9 L318.6 126.3 L316.2 129.0 L313.2 130.4 M326.3 142.3 L325.8 137.7 L324.6 135.6 L321.1 132.9 L318.7 130.7 L316.9 128.6 L315.7 129.2 L315.1 130.5 L313.2 130.4 M343.4 137.9 L341.0 137.5 L337.3 139.9 L334.2 142.8 L333.6 142.8 L333.6 142.2 L332.3 143.0 L330.9 144.3 L327.7 145.5 M343.4 137.9 L344.7 134.3 L343.6 132.8 M343.6 132.8 L341.3 133.1 L338.7 133.3 L336.8 133.3 L336.7 132.5 L334.1 133.8 L331.8 134.8 M327.7 145.5 L327.4 144.0 L326.3 142.3 M343.2 132.7 L343.3 131.4 L344.2 129.1 L343.2 127.3 L344.1 124.5 L343.7 121.6 L343.8 118.5 L341.8 116.7 M343.6 132.8 L343.2 132.7 M330.5 122.8 L328.9 125.6 L329.1 127.9 M311.9 126.4 L312.1 127.9 L313.2 130.4 M326.4 147.2 L327.7 145.5 M343.4 207.0 L343.1 209.4 L342.4 211.9 M352.6 206.1 L351.0 205.0 L350.9 204.2 L349.9 204.3 M343.8 206.6 L346.8 204.9 L349.9 204.3 M342.4 211.9 L345.0 213.5 L345.9 212.9 L345.9 213.1 L348.4 215.0 L350.8 215.9 M352.6 206.1 L353.4 207.0 L353.1 209.6 L351.6 211.4 L351.6 213.2 M351.6 213.2 L350.8 215.9 M154.1 150.6 L155.6 150.3 L157.3 152.5 L158.7 154.3 L160.9 154.5 L163.6 155.2 M170.5 141.7 L170.2 144.5 M163.6 155.2 L166.5 152.8 L167.3 150.5 L167.8 149.7 L169.6 145.6 L170.2 144.5 M177.8 219.6 L176.4 218.3 L176.4 217.7 L177.0 214.9 L173.9 213.7 L174.7 209.6 L175.3 206.6 M177.8 219.6 L173.7 222.5 L170.3 226.5 L169.1 226.8 M168.0 225.8 L169.1 226.8 M168.0 225.8 L167.8 221.5 L166.9 219.5 L165.0 217.7 L163.7 215.2 M175.3 206.6 L173.5 208.1 L171.3 209.4 L168.4 210.1 L165.5 212.1 L163.2 211.6 M163.7 215.2 L163.5 211.8 L163.2 211.6 M182.6 219.4 L180.7 219.1 L177.8 219.6 M176.5 204.2 L175.3 206.6 M183.9 250.3 L182.4 248.3 L181.2 245.8 L180.3 242.7 L179.9 240.1 L179.1 236.8 L174.3 236.0 L173.2 234.3 L174.4 233.6 L175.1 232.8 L175.2 229.6 L173.4 227.8 L172.7 227.9 L171.2 228.4 L169.1 226.8 M149.0 253.2 L151.6 252.1 L153.4 251.5 L154.4 248.3 L156.6 245.8 L157.6 243.6 L160.0 243.3 L162.0 241.1 L161.8 238.8 L161.4 238.0 L164.2 235.5 L165.8 232.9 L165.1 230.4 L167.1 228.5 L167.2 228.2 L168.0 225.8 M145.7 219.6 L147.7 219.2 L149.4 217.7 L150.3 216.1 L151.5 216.2 L151.3 217.1 L152.4 217.5 L155.6 215.7 L159.5 214.1 L163.7 215.2 M168.2 197.4 L169.7 199.7 L171.9 199.5 L174.5 198.1 M168.2 197.4 L166.1 196.6 L162.8 196.3 M162.8 196.9 L162.6 200.2 L162.8 203.6 L162.5 205.2 L162.7 207.5 L161.6 211.8 L163.2 211.6 M198.1 148.4 L196.9 148.6 M182.4 148.7 L182.2 148.9 M196.9 148.6 L191.2 153.6 M191.2 153.6 L188.9 150.4 L186.0 149.7 L182.2 148.9 M231.1 148.1 L230.9 149.3 L231.5 150.7 L228.5 152.6 L226.2 156.7 L222.4 158.4 L221.7 159.6 L222.2 161.9 L221.0 163.8 M215.3 147.0 L215.9 151.0 L214.0 153.7 L213.2 153.7 L212.7 155.8 L214.4 157.8 L216.4 157.1 L217.2 156.6 M221.0 163.8 L217.2 156.6 M213.0 141.3 L212.4 143.6 L211.9 145.3 L209.7 148.5 L209.5 150.7 L208.5 153.0 L206.7 155.1 L204.7 157.5 M217.2 156.6 L211.9 158.9 L209.1 159.1 L207.0 159.3 L204.3 159.8 L204.7 157.5 M190.5 165.0 L194.1 166.6 L196.0 168.0 L198.0 167.3 L199.1 166.6 M199.1 166.6 L203.0 163.7 L203.9 162.7 L204.5 162.3 M189.6 158.9 L190.9 158.8 M190.9 158.8 L195.1 158.3 L198.7 157.6 L203.3 158.2 L205.2 157.7 L204.7 161.4 M190.5 165.0 L191.5 161.1 L189.6 158.9 M204.5 162.3 L204.7 161.4 M196.9 148.6 L198.5 151.4 L200.1 153.7 L204.9 154.0 L204.9 155.2 L204.8 156.5 L204.5 159.8 M191.2 153.6 L189.6 156.6 L190.9 158.8 M204.7 161.4 L204.5 159.8 M204.5 159.8 L204.7 157.5 M228.7 184.9 L226.2 186.1 L224.7 187.6 L222.3 187.8 L220.1 188.9 L219.5 189.4 L217.1 189.2 M227.9 173.5 L228.1 174.2 L227.9 174.7 M227.9 173.5 L227.9 173.5 M227.9 173.5 L227.7 172.9 L226.3 177.3 L225.1 179.7 L222.7 181.7 L220.2 184.2 L217.6 185.8 L216.9 187.6 M217.1 189.2 L216.9 187.6 M219.1 196.9 L218.9 192.9 L217.3 191.6 M217.1 189.2 L215.7 190.1 L218.2 189.9 L217.3 191.6 M219.8 214.2 L218.1 211.8 L216.6 210.5 L213.8 207.3 L211.8 205.5 L213.2 202.6 L213.3 201.1 L210.2 199.0 L208.2 196.6 L207.5 195.8 M217.3 191.6 L214.0 193.0 L210.9 194.6 L207.5 195.8 M227.9 173.5 L227.9 172.5 L223.6 173.8 L220.7 175.7 L218.7 177.7 L215.6 177.6 L214.7 178.2 L210.8 179.0 L208.1 179.5 M216.9 187.6 L215.7 186.3 L214.0 184.0 L209.9 181.3 L208.1 179.5 M198.8 209.2 L200.5 206.6 L202.6 203.6 L203.9 202.9 L203.8 201.7 L204.0 198.7 L204.4 197.7 M207.5 195.8 L204.4 197.7 M291.2 291.9 L292.1 286.6 L289.3 284.8 M268.4 289.3 L269.2 288.9 L270.5 287.1 L271.1 285.9 L272.6 281.9 L273.2 281.6 L273.9 281.5 L276.4 280.3 L278.0 281.1 M278.0 281.1 L282.0 281.6 L284.7 283.6 L289.3 284.8 M299.3 276.4 L299.2 274.2 L298.7 272.5 L296.9 272.4 M289.3 284.8 L291.7 282.3 L293.8 278.7 L294.0 276.3 L294.9 273.7 L296.2 273.2 L296.9 272.4 M306.4 266.2 L306.9 267.7 L307.9 269.2 L307.6 271.8 L307.1 274.7 L304.6 276.7 L305.1 277.3 M306.4 266.2 L311.9 266.6 L316.5 266.3 M316.5 266.3 L317.0 270.6 M317.0 270.6 L314.9 271.6 L314.1 276.2 L313.7 277.3 L311.7 278.0 L311.3 280.2 L310.5 282.5 M305.1 277.3 L308.8 276.9 L308.9 279.0 L310.5 282.5 M327.1 272.4 L325.1 272.8 L323.1 273.0 L320.6 271.4 L318.4 270.5 L317.0 270.6 M313.8 284.6 L310.5 282.5 M457.2 61.1 L458.2 62.7 L462.7 64.8 L461.7 66.0 L461.2 70.1 M457.2 61.1 L460.6 60.7 L464.2 60.6 L466.6 63.3 L468.4 64.6 L471.3 65.0 L471.5 67.3 M461.2 70.1 L463.8 70.5 L465.6 70.4 L469.1 70.7 L470.3 69.5 M471.5 67.3 L470.3 69.5 M458.4 53.4 L458.7 57.2 L457.9 60.5 L457.2 61.1 M461.2 70.4 L458.7 68.5 L455.7 67.8 L453.7 66.5 L451.8 66.7 L448.8 67.0 M461.2 70.4 L461.2 70.1 M451.2 62.0 L448.8 67.0 M471.5 53.3 L469.9 57.8 L470.8 59.6 L470.8 61.3 L471.5 64.5 L471.5 67.3 M476.5 68.8 L475.0 69.5 L471.3 70.7 L470.3 69.5 M353.8 245.6 L358.8 244.9 L362.2 244.3 L363.3 246.7 L365.0 248.9 M353.8 245.6 L351.0 247.0 L348.2 248.5 M348.2 248.5 L352.7 252.2 M365.0 248.9 L365.9 250.5 M354.1 252.3 L352.7 252.2 M354.1 252.3 L357.8 251.2 L360.5 249.4 L361.9 251.1 L362.1 252.6 L362.5 254.9 L365.3 255.8 M365.9 250.5 L365.3 255.8 M356.4 260.4 L359.4 255.9 M359.4 255.9 L356.8 254.7 L355.5 252.5 L354.1 252.3 M351.4 263.6 L350.8 260.6 L351.1 256.3 L351.8 253.4 L352.7 252.2 M365.0 256.4 L365.3 255.8 M359.4 255.9 L360.1 255.8 L361.5 256.6 L361.9 256.8 L365.0 256.4 M354.7 244.1 L359.7 241.3 L361.2 238.4 M354.7 244.1 L354.6 242.7 L353.1 242.4 L353.4 239.8 M353.4 239.8 L356.4 238.7 L359.8 237.8 M361.2 238.4 L359.8 237.8 M365.0 248.9 L365.4 245.7 L362.9 243.0 L361.2 238.4 M353.8 245.6 L354.7 244.1 M356.1 230.1 L357.2 229.5 L358.6 230.7 L362.5 229.0 M356.1 230.1 L353.9 232.4 L355.9 233.3 L355.7 235.5 M355.7 235.5 L354.4 236.7 L353.4 239.8 M362.5 229.0 L362.6 230.2 L363.1 233.5 L363.8 235.5 M363.8 235.5 L359.8 237.8 M296.9 272.4 L295.9 272.2 M304.7 277.7 L305.1 277.3 M306.4 266.2 L306.2 266.0 M306.2 266.0 L305.6 266.1 L305.4 264.9 L303.4 263.6 L301.7 266.3 L299.7 266.7 L298.0 268.7 L296.9 271.3 L295.9 272.2 M280.2 270.1 L276.8 273.7 L276.4 275.7 L277.3 279.6 L278.0 281.1 M280.2 270.1 L279.8 271.7 L281.8 271.5 L283.7 272.1 L286.6 271.8 L289.4 272.3 L292.4 271.3 M292.4 271.3 L295.9 272.2 M297.4 242.9 L298.9 244.6 M297.4 242.9 L297.9 247.1 L296.7 250.1 L293.2 252.0 M298.9 244.6 L299.2 246.6 L299.6 250.3 L299.1 252.2 L297.3 253.4 L298.8 253.8 L300.5 255.9 L301.0 256.3 M293.2 252.0 L293.1 255.1 L294.9 256.5 L297.5 257.6 L299.6 256.4 M301.0 256.3 L299.6 256.4 M306.2 266.0 L306.3 260.6 L305.9 258.6 L304.0 258.4 L302.8 256.9 M302.8 256.9 L302.5 256.2 L301.0 256.3 M290.3 264.9 L290.3 263.7 L294.2 261.8 L296.3 258.8 L299.6 256.4 M290.3 264.9 L291.6 268.3 L290.2 269.9 L292.4 271.3 M250.6 284.4 L250.8 281.6 L250.8 281.5 L251.0 279.3 L250.7 274.2 L251.0 271.2 M267.6 285.2 L264.7 283.6 L266.1 281.5 L265.3 280.1 M265.3 280.1 L263.5 278.4 L260.8 274.9 L255.4 274.7 L252.5 274.6 L251.0 271.2 M280.1 270.1 L276.6 271.2 M280.1 270.1 L277.8 268.4 L276.8 266.2 L276.7 265.8 L278.0 263.5 L276.5 261.5 M276.6 271.2 L273.8 273.3 L271.2 274.3 L269.1 275.2 L267.1 275.3 M276.5 261.5 L276.1 258.2 L276.9 255.4 L275.0 254.3 M267.1 275.3 L266.5 269.5 M266.5 269.5 L266.0 268.2 L268.5 265.4 L268.7 262.3 L270.5 259.8 L272.5 256.8 L273.1 255.4 M275.0 254.3 L273.1 255.4 M268.0 288.1 L270.3 285.9 L270.7 284.1 L270.1 283.2 L272.0 281.3 L272.9 279.0 L274.4 274.2 L275.2 272.9 L276.6 271.2 M280.2 270.1 L280.1 270.1 M265.3 280.1 L266.0 277.0 L265.3 277.1 L267.1 275.3 M346.0 228.0 L346.2 223.4 L344.2 218.5 L342.9 217.8 M346.0 228.0 L349.6 228.6 L350.8 228.1 L352.1 230.5 L351.8 230.3 M342.9 217.8 L347.2 217.7 L349.4 218.1 L351.0 218.5 L354.1 218.7 M351.8 230.3 L350.5 226.5 L352.7 221.5 M352.7 221.5 L354.1 218.7 M342.4 211.9 L340.0 213.6 L336.7 215.6 L335.3 217.1 M335.3 217.1 L335.4 220.4 L338.6 220.0 L342.9 217.8 M350.8 215.9 L354.1 218.7 M348.2 248.5 L345.6 249.5 M355.7 235.5 L351.9 238.0 M345.6 249.5 L347.8 247.3 L349.6 245.8 L349.6 242.2 L350.9 238.4 L351.9 238.0 M354.4 229.8 L351.8 230.3 M354.4 229.8 L356.1 230.1 M346.0 228.0 L343.7 229.9 L342.6 232.7 M351.9 238.0 L351.4 237.5 L347.8 237.3 L343.6 235.7 L342.6 232.7 M339.5 265.1 L337.3 259.8 L336.0 258.1 L333.0 258.9 M329.8 267.6 L330.9 265.1 L331.6 263.5 L331.4 262.0 L331.0 259.1 L331.6 258.2 M333.0 258.9 L331.6 258.2 M298.9 244.6 L299.3 244.1 M302.8 256.9 L304.1 254.1 L305.6 251.6 L306.6 247.8 L306.8 248.0 L309.1 245.2 L310.4 241.2 M299.3 244.1 L300.3 244.4 L301.1 245.5 L303.2 244.8 L303.2 244.5 L306.9 242.8 L310.4 241.2 M300.5 228.6 L299.7 230.3 L299.8 233.6 M307.8 219.7 L307.8 222.6 L310.0 225.3 L309.0 225.8 L309.0 228.7 L310.6 232.9 M299.8 233.6 L304.3 231.4 L307.7 230.2 L310.6 231.1 L310.6 232.9 M505.2 238.8 L505.4 239.2 M508.4 232.1 L509.0 233.2 M508.4 232.1 L507.3 231.8 L506.7 231.1 M505.2 238.8 L505.0 237.7 L504.1 237.4 L502.1 237.6 L501.3 235.9 M501.3 235.9 L503.5 233.2 L505.9 232.6 L506.6 231.9 L506.7 231.1 M503.9 244.1 L505.0 243.1 M503.9 244.1 L503.9 245.7 L503.9 249.7 L505.6 253.6 L507.0 255.3 L507.5 255.2 L508.1 257.4 L508.8 262.5 M505.0 243.1 L507.1 246.5 L508.7 246.6 L509.0 247.2 L510.0 250.6 L511.7 253.4 L512.0 255.0 M510.4 263.0 L510.4 259.6 L510.4 256.8 L512.0 255.0 M488.9 246.8 L491.3 246.6 M505.2 238.8 L505.0 243.1 M488.9 246.8 L490.9 244.8 L493.4 244.4 L493.9 242.9 L495.4 241.2 L495.3 239.8 L497.8 236.7 L500.7 234.9 M500.7 234.9 L501.3 235.9 M494.8 246.3 L494.9 246.4 L497.5 246.1 L501.0 245.7 L503.9 244.1 M501.0 260.6 L499.6 258.5 L496.0 257.0 M515.6 245.3 L512.2 249.3 L510.3 251.2 L512.4 253.1 L512.0 255.0 M521.6 244.5 L520.3 243.5 M520.3 243.5 L519.4 243.1 M477.5 231.1 L480.8 228.7 L483.8 229.0 M476.9 232.2 L477.5 231.1 M476.9 232.2 L475.2 235.7 L475.6 239.1 L476.7 240.2 L478.8 240.8 M480.4 245.5 L482.2 245.9 L484.8 244.8 M483.8 229.0 L483.3 232.2 L483.6 236.3 L484.2 237.7 L484.1 237.9 L485.2 238.9 L484.8 244.8 M508.4 232.1 L511.3 229.4 L512.6 228.0 L513.0 225.1 M506.7 231.1 L509.0 229.7 L506.9 227.6 M506.9 227.6 L510.3 224.7 L511.5 222.7 M511.5 222.7 L512.1 224.5 L513.2 224.9 L513.0 225.1 M520.3 243.5 L520.9 240.8 L520.6 238.9 L519.9 237.5 L519.9 233.6 L517.2 231.3 L516.4 231.6 L514.3 230.2 L512.8 228.3 L514.1 225.6 M513.0 225.1 L514.1 225.6 M521.8 222.9 L517.1 224.7 L514.2 225.4 M514.1 225.6 L514.2 225.4 M516.4 217.4 L514.7 224.0 M514.2 225.4 L514.7 224.0 M515.1 212.5 L514.4 209.8 L513.0 209.4 M517.0 191.5 L516.0 191.0 L514.3 194.2 M513.0 209.4 L512.3 207.7 L512.6 203.9 L513.5 200.5 L512.4 198.4 L512.7 197.5 L514.3 194.2 M456.8 249.5 L454.4 252.5 L453.7 256.3 M466.9 250.3 L467.4 250.9 L469.0 252.4 L469.6 256.2 L471.3 258.8 M365.0 256.4 L366.1 257.5 M482.6 261.1 L482.2 259.9 M479.6 255.4 L482.1 247.2 M479.6 255.4 L478.1 256.0 L477.0 257.8 L476.6 258.2 L475.7 259.0 M482.1 247.2 L482.1 248.1 L479.3 249.3 M474.1 260.1 L474.6 256.1 L475.9 252.1 L479.3 249.3 M486.7 246.0 L484.8 244.8 M480.7 245.5 L482.1 247.2 M480.2 257.0 L479.6 255.4 M488.9 246.8 L486.8 247.5 L486.7 246.0 M466.2 247.8 L469.9 249.5 L475.3 248.8 L479.3 249.3 M486.3 120.6 L483.4 117.5 L482.3 117.4 L477.7 117.8 L474.0 119.0 M474.0 119.0 L475.1 115.7 L475.6 113.8 L474.8 111.1 L474.6 109.1 M492.7 114.3 L492.0 115.5 L490.6 115.5 L489.8 117.3 L486.3 120.6 M488.7 109.4 L487.8 108.2 L486.1 107.4 L482.6 105.6 M482.6 105.6 L479.4 108.2 L474.6 109.1 M454.8 161.4 L450.8 161.5 L448.0 162.5 M439.3 159.8 L443.1 159.0 L444.7 160.4 L448.0 162.5 M439.3 159.8 L439.8 157.1 L441.0 154.6 L442.1 152.1 L443.6 149.2 L443.1 148.1 M454.8 161.4 L454.0 155.9 L455.5 153.2 L455.7 152.5 M443.1 148.1 L445.8 147.8 L446.4 150.1 L448.3 153.2 L452.7 152.7 L455.7 152.5 M459.9 128.7 L457.5 129.1 L456.2 130.1 L452.3 130.2 L449.8 130.9 L446.3 131.3 M459.9 128.7 L460.2 130.4 L459.1 131.9 L459.8 132.4 M461.0 134.9 L459.8 135.7 L455.2 137.9 L453.4 138.5 L452.6 138.4 L452.1 137.1 L450.2 137.0 L446.0 138.5 L443.4 140.1 M461.0 134.9 L459.9 132.5 M443.4 140.1 L444.9 136.0 L445.4 132.1 L446.3 131.3 M459.9 132.5 L459.8 132.4 M445.3 116.5 L450.2 115.0 M450.2 115.0 L451.6 118.1 L456.0 119.7 L456.8 120.5 L457.7 121.7 L458.9 126.4 L459.9 128.7 M444.2 120.1 L444.2 122.2 L443.3 123.7 L444.6 125.6 L444.8 129.6 L446.3 131.3 M439.7 144.7 L439.7 144.7 M439.7 144.7 L439.6 143.3 L439.3 142.3 L443.4 140.1 M460.0 143.0 L457.5 142.5 L456.7 143.1 L452.7 143.3 L451.6 142.0 L449.3 141.6 L447.4 141.2 L444.9 143.7 L440.8 146.2 L439.6 146.7 M439.7 144.7 L439.6 146.7 M461.4 135.4 L459.9 138.6 L459.8 142.2 M459.8 142.2 L460.0 143.0 M461.4 135.4 L461.0 134.9 M429.4 132.3 L432.1 134.8 L436.0 135.4 L437.8 136.0 L436.6 139.4 L436.6 143.4 L439.7 144.7 M429.4 132.3 L430.4 130.0 L432.7 129.4 M461.2 70.4 L460.7 77.6 M476.6 70.7 L476.8 73.7 L474.2 76.1 L474.4 76.6 M460.7 77.6 L460.8 79.6 L464.4 78.6 L468.7 75.7 L470.8 75.8 L473.5 76.4 L474.4 76.6 M448.8 67.0 L449.6 67.0 L451.5 67.6 L451.0 69.5 L451.5 72.4 L452.0 73.1 L452.6 76.3 L450.4 81.7 M441.4 75.7 L441.8 76.6 L443.5 79.0 L444.9 80.2 L445.7 80.8 M450.4 81.7 L448.9 80.1 L445.7 80.8 M460.7 77.6 L459.8 78.3 L458.1 78.2 L457.6 80.8 L456.7 82.4 L455.6 84.5 M450.4 81.7 L455.6 84.5 M474.4 76.6 L473.6 79.4 L471.6 82.9 L469.9 84.6 M465.7 92.3 L466.8 90.6 L467.9 88.1 L469.9 84.6 M465.7 92.3 L465.5 89.8 L463.6 89.9 L460.2 88.1 L458.3 86.0 M455.6 84.5 L458.3 86.0 M436.5 92.7 L439.2 91.3 L442.6 89.9 M445.7 80.8 L445.6 82.7 L444.1 86.1 L444.0 88.6 L442.6 89.9 M436.0 104.8 L439.4 103.4 L441.9 101.6 L442.7 102.9 L442.4 102.0 L444.4 99.7 L444.9 98.9 M442.6 89.9 L443.7 91.3 L445.8 93.1 L446.0 96.6 L444.9 98.9 M466.0 97.4 L465.4 97.2 L462.5 97.3 L458.8 100.1 L455.3 101.3 L451.7 101.4 L449.8 101.6 L447.6 100.5 L445.6 100.8 M466.0 97.4 L467.4 98.4 L467.8 98.5 L468.5 101.2 M468.8 102.4 L468.5 101.2 M468.8 102.4 L468.9 104.0 L466.8 107.4 L464.5 108.7 L461.0 111.4 M461.0 111.4 L459.3 112.3 L458.5 111.8 L456.3 113.1 L453.4 113.2 M453.4 113.2 L452.1 110.4 L449.9 106.1 L448.7 104.7 L448.0 105.5 L445.7 106.1 L443.7 102.0 M443.7 102.0 L445.6 100.8 M458.3 86.0 L457.7 87.3 L454.6 90.1 L452.2 92.4 L450.0 94.9 L451.3 96.9 L449.3 99.3 L448.0 99.9 L445.6 100.8 M465.7 92.3 L465.2 92.3 L463.0 94.9 L466.0 97.4 M450.3 114.9 L453.4 113.2 M450.3 114.9 L450.2 115.0 M444.9 98.9 L443.7 102.0 M528.6 158.0 L525.9 155.0 M528.6 158.0 L526.5 159.5 L527.1 161.7 L526.1 164.9 L524.3 168.4 L523.7 169.3 L523.6 170.9 L523.9 171.5 M525.9 155.0 L523.2 156.1 L520.7 159.6 L519.1 158.9 L518.8 159.1 L517.4 160.6 L517.3 162.0 M517.3 162.0 L517.5 164.6 L517.0 166.8 L516.5 171.9 M523.9 171.5 L518.9 174.4 L516.5 171.9 M556.3 138.3 L553.8 137.8 L551.4 136.6 L549.9 136.3 L545.9 136.7 L543.8 138.5 L542.4 139.4 L542.6 138.4 L540.7 139.5 L538.7 139.4 M553.5 169.4 L551.9 167.2 L550.5 165.4 L547.8 164.7 L545.8 163.3 L543.8 162.9 L540.4 163.6 L537.1 165.1 L535.0 166.7 L534.4 163.8 L536.1 161.4 L535.4 160.9 L532.9 160.2 L531.8 159.4 L528.6 158.0 M538.7 139.4 L537.9 140.8 L533.7 143.9 L532.4 143.9 L531.1 143.4 L530.0 144.4 L529.0 144.0 L526.7 146.9 L523.3 149.4 L521.2 150.3 M521.2 150.3 L522.1 151.7 L525.9 155.0 M526.4 178.5 L524.7 174.1 L523.6 172.6 L523.9 171.5 M509.7 154.9 L510.3 158.6 L510.1 161.1 L511.3 161.2 L512.9 162.2 L517.3 162.0 M509.7 154.9 L512.1 154.4 L512.3 154.0 L512.7 153.6 L515.2 153.1 L516.5 152.1 L519.8 150.4 M521.2 150.3 L519.8 150.4 M472.6 120.0 L473.5 120.6 L473.6 121.9 L472.5 122.0 L472.8 123.6 L473.7 126.1 M472.6 120.0 L469.6 119.4 L469.4 119.7 L468.4 120.3 L466.0 120.0 M473.7 126.1 L469.9 124.7 L466.3 123.9 L463.3 126.8 L461.7 127.8 M466.0 120.0 L464.8 126.0 L462.2 127.5 M461.7 127.8 L462.2 127.5 M461.0 111.4 L463.9 111.8 L466.5 113.7 L468.5 115.3 L467.8 116.2 L466.0 120.0 M474.0 119.0 L472.6 120.0 M474.6 109.1 L473.6 107.6 L472.0 107.1 L470.5 105.5 L469.9 104.3 L468.8 102.4 M450.3 114.9 L452.8 117.3 L457.1 117.5 L461.9 117.5 L463.9 119.9 L465.2 121.9 L463.8 125.3 L462.2 127.5 M459.8 132.4 L460.1 133.2 L461.5 131.3 L461.8 128.7 L461.7 127.8 M506.0 109.6 L507.5 111.5 L506.1 113.0 L506.2 115.8 L508.9 117.5 L511.9 118.2 M493.5 114.2 L495.4 115.2 L496.3 116.3 L496.4 118.9 L496.3 120.7 L499.5 121.6 M499.5 121.6 L502.5 119.7 L505.2 120.5 L508.1 119.3 L511.9 118.2 M486.3 120.6 L490.6 124.1 M493.6 130.3 L491.4 127.7 L490.9 125.9 L491.6 125.2 L490.6 124.1 M493.6 130.3 L494.0 131.0 M499.5 121.6 L497.3 123.1 L494.9 126.1 L493.1 127.9 L492.4 129.4 L494.0 131.0 M504.8 149.8 L506.8 145.2 L508.9 143.5 L509.0 141.5 L511.2 138.0 L510.5 136.2 M504.8 149.8 L503.2 148.2 L501.6 146.1 L499.4 142.6 L495.5 144.1 L491.0 143.7 L488.7 143.8 L486.3 145.0 M486.3 145.0 L486.9 143.6 L489.2 142.3 L490.5 140.2 L490.4 137.1 L491.7 134.7 L493.7 132.8 L494.3 131.7 M494.3 131.7 L494.4 133.4 L495.7 134.4 L497.9 133.9 L499.7 133.9 L504.0 134.3 L507.5 133.8 L510.5 136.2 M507.2 154.9 L509.7 154.9 M507.2 154.9 L506.3 152.4 L505.3 151.1 L504.8 149.8 M519.8 150.4 L520.1 148.3 L518.6 147.2 L514.3 147.3 L513.6 145.4 L515.8 143.1 L517.9 140.0 L516.4 138.7 L514.8 135.9 M514.8 135.9 L513.1 135.6 L512.2 135.3 L510.5 136.2 M413.4 100.0 L413.2 102.9 L412.9 104.0 L410.9 105.0 M413.4 100.0 L412.6 99.2 L411.7 97.8 L411.1 97.6 L409.4 97.7 L406.9 94.9 L403.2 92.7 M410.9 105.0 L411.7 104.4 L410.2 103.6 L406.7 101.8 L406.5 97.8 L405.8 96.5 L401.7 96.7 M403.2 92.7 L401.7 96.7 M419.8 97.4 L418.8 96.4 L417.1 97.4 L414.1 99.3 L413.4 100.0 M416.4 107.0 L418.3 106.9 L419.8 106.5 L423.3 106.0 L425.1 107.8 M416.4 107.0 L414.9 106.5 L412.0 108.2 L410.1 106.9 L410.7 105.4 M410.7 105.4 L410.9 105.0 M405.1 80.6 L401.9 82.5 L398.9 85.3 M398.9 85.3 L399.6 88.2 L400.6 88.8 L401.2 90.0 L403.2 92.7 M389.7 95.4 L390.0 94.6 L389.5 94.1 L389.5 91.7 L389.2 89.1 M389.7 95.4 L387.3 96.1 L388.5 97.3 L388.5 99.3 L385.7 101.7 M385.7 101.7 L384.0 99.1 L384.2 97.1 L384.8 96.9 L385.4 93.6 L385.9 89.6 L385.9 87.3 M389.2 89.1 L388.9 88.0 L388.0 88.1 L386.3 87.2 M386.3 87.2 L385.9 87.3 M398.9 85.3 L399.2 83.8 L397.9 82.8 L396.3 84.3 L393.8 86.3 L391.1 87.1 L389.7 88.7 L389.2 89.1 M398.0 96.8 L401.7 96.7 M398.0 96.8 L394.7 97.2 L391.5 95.3 L389.7 95.4 M384.7 102.8 L378.4 106.3 M376.3 90.1 L382.0 88.3 L385.9 87.3 M384.7 102.8 L385.7 101.7 M384.9 77.1 L385.9 79.7 L385.6 80.1 L385.0 81.1 L386.2 85.0 L387.5 86.2 L386.3 87.2 M333.3 193.6 L334.8 193.6 L335.6 193.0 L337.4 192.4 L341.4 189.6 M328.4 190.2 L331.0 187.8 L332.4 187.7 L333.8 187.0 L334.4 187.2 L336.1 187.3 L338.5 184.0 M338.5 184.0 L339.8 187.7 L341.3 187.8 L341.4 189.6 M332.0 181.3 L334.2 180.8 L336.2 179.2 L337.9 179.5 L338.5 179.8 M338.5 179.8 L338.0 183.1 M338.5 184.0 L338.0 183.1 M349.9 204.3 L350.6 200.7 L349.7 198.6 M341.4 189.6 L343.6 194.1 L347.1 197.3 L347.3 198.9 L349.7 198.6 M177.3 156.1 L176.0 157.8 L175.7 158.9 L176.2 159.3 L173.8 160.2 L173.2 161.1 M177.3 156.1 L178.8 154.4 M178.8 154.4 L180.8 151.5 M174.0 154.4 L172.4 155.1 L170.1 156.6 M174.0 154.4 L176.0 154.5 L175.7 153.1 L179.2 149.9 M179.2 149.9 L180.8 151.5 M170.1 156.6 L171.7 157.3 L174.7 157.1 L173.2 161.1 M180.7 162.4 L178.2 164.7 L176.9 166.5 L177.1 167.5 L175.5 169.2 M170.0 165.6 L171.0 168.0 L172.4 167.8 L175.5 169.2 M180.7 162.4 L179.7 161.6 L178.2 160.4 L177.3 156.1 M170.0 165.6 L173.2 161.1 M183.7 164.2 L180.7 162.4 M190.5 165.0 L185.6 164.1 L183.7 164.2 M189.6 158.9 L186.3 156.6 L183.9 153.6 L181.8 154.0 L178.8 154.4 M182.2 148.9 L181.5 149.4 L181.9 151.3 L180.8 151.5 M163.6 155.2 L164.4 156.8 L170.1 156.6 M170.2 144.5 L171.8 147.4 L170.8 150.3 L174.2 150.9 L174.6 152.8 L174.0 154.4 M173.1 141.0 L174.6 142.4 L176.8 146.4 L177.0 149.0 L178.0 148.4 L178.2 148.4 L179.2 149.9 M169.0 165.5 L170.0 165.6 M192.4 173.5 L194.9 173.4 L196.8 174.2 L198.8 171.8 M192.4 173.5 L189.9 172.6 L187.4 172.1 L185.3 172.1 M185.3 172.1 L186.2 169.0 M186.2 169.0 L189.8 169.8 L192.7 170.5 L194.6 170.5 L195.1 171.3 L197.5 171.5 L199.5 170.4 M199.5 170.4 L198.8 171.8 M183.7 164.2 L186.2 169.0 M199.1 166.6 L199.5 170.4 M204.4 197.7 L203.7 198.9 M203.7 198.9 L201.4 198.5 M194.5 195.8 L194.6 199.9 L195.6 201.6 M194.5 195.8 L196.6 196.0 L199.4 194.1 L202.3 193.5 M202.3 193.5 L201.4 198.5 M194.5 195.8 L193.9 194.0 L191.7 193.8 L187.0 192.6 M187.0 192.6 L188.1 189.8 M194.3 186.9 L188.1 189.8 M194.3 186.9 L196.2 188.4 L200.4 188.8 M202.3 193.5 L200.4 188.8 M203.7 198.9 L204.3 197.7 L202.9 195.3 L203.7 191.4 L206.7 189.4 L207.3 187.0 L206.7 182.0 L207.1 180.3 M208.1 179.5 L208.0 179.4 M208.0 179.4 L207.1 180.3 M185.3 172.1 L183.0 174.6 L180.1 177.8 L182.1 181.0 M192.4 173.5 L190.6 174.7 L191.5 175.0 L189.1 178.2 M189.1 178.2 L182.1 181.0 M227.6 171.7 L222.9 170.1 L219.7 168.4 L220.6 165.1 M227.6 171.7 L223.3 173.4 L220.2 173.5 L217.0 174.7 L213.2 174.2 L210.6 174.4 L207.4 173.7 M220.6 165.1 L217.2 164.0 L212.7 165.4 L208.1 165.9 L205.4 165.3 M207.4 173.7 L208.4 172.1 L208.2 169.3 L206.1 165.8 L205.4 165.3 M227.9 173.5 L227.6 171.7 M221.0 163.8 L220.6 165.1 M208.1 176.3 L208.0 179.4 M208.1 176.3 L207.1 175.7 L207.4 173.7 M204.5 162.3 L204.5 163.6 L204.5 163.5 L205.4 165.3 M198.2 173.1 L198.6 175.5 L200.7 176.0 L204.2 175.7 L208.1 176.3 M198.8 171.8 L198.2 173.1 M339.8 147.6 L343.2 145.6 L345.1 142.8 M339.3 151.3 L339.3 151.7 L339.8 151.3 L339.8 149.7 L339.8 147.6 M339.3 151.3 L336.6 153.2 L333.3 154.4 L331.2 151.7 L331.3 150.2 L330.1 150.1 L327.7 148.8 M343.4 137.9 L343.4 140.0 L346.0 139.9 M346.0 139.9 L345.1 142.8 M354.4 229.8 L354.5 229.8 M352.7 221.5 L353.1 222.2 L355.4 219.5 L357.3 216.8 L358.4 215.7 M354.5 229.8 L354.4 226.9 L355.1 224.7 L356.7 221.3 L359.3 218.0 L358.4 215.7 M362.6 190.9 L365.4 192.7 L365.8 194.7 L368.5 196.2 M368.5 196.2 L370.5 199.0 L372.3 199.7 M362.6 190.9 L363.0 194.6 M363.0 194.6 L365.5 195.8 L365.4 198.4 L367.8 200.0 L372.3 199.7 M368.5 196.2 L371.2 194.1 M371.2 194.1 L376.0 192.7 M372.3 199.7 L377.5 199.3 M376.0 192.7 L377.7 192.6 L376.8 196.8 L377.3 198.6 L378.2 199.3 M377.5 199.3 L378.2 199.3 M293.7 218.4 L289.4 220.2 L287.8 220.7 L286.3 219.9 L285.9 222.5 M293.7 218.4 L291.9 219.4 L292.9 221.6 L295.8 223.1 L294.8 224.3 L292.9 227.0 L293.6 230.9 L295.3 233.3 L294.9 235.2 L294.8 237.3 M285.9 222.5 L285.1 225.6 M294.8 237.3 L291.9 235.9 L291.9 233.8 M291.9 233.8 L292.9 230.6 L290.6 226.1 L286.8 225.1 L285.2 225.7 M285.1 225.6 L285.2 225.7 M297.9 213.1 L293.7 218.4 M269.3 216.7 L268.5 218.3 L270.8 221.2 L273.6 219.9 L276.7 219.0 L279.9 219.1 L283.2 218.2 L284.8 220.8 L285.9 222.5 M294.9 237.3 L297.3 235.0 L299.8 233.6 M294.9 237.3 L294.8 237.3 M277.7 232.7 L279.0 231.9 L280.2 228.7 L282.7 226.8 L285.1 225.6 M270.2 232.2 L274.9 230.9 L276.1 232.1 L277.0 232.9 L277.7 232.7 M265.9 215.2 L265.1 219.1 L265.2 222.3 L265.8 222.9 L264.7 225.2 M264.7 225.2 L267.2 228.0 L270.2 232.2 M286.5 242.5 L286.9 241.2 L287.0 238.5 L287.4 233.1 M287.4 233.1 L289.2 231.9 L291.9 233.8 M297.4 242.9 L293.0 242.9 L289.0 243.2 L286.5 242.5 M299.3 244.1 L299.9 239.9 L298.2 238.9 L294.9 237.3 M288.3 253.1 L286.2 255.0 L286.8 257.7 L285.1 259.7 L284.0 260.0 M288.3 253.1 L286.8 251.1 L285.2 246.4 L284.4 242.5 M284.4 242.5 L282.0 242.1 M282.0 242.1 L281.5 243.5 L280.3 246.6 L281.8 247.0 L282.6 250.2 L282.2 253.8 L280.0 256.1 L278.6 260.1 M278.6 260.1 L280.9 259.0 L284.0 260.0 M293.2 252.0 L288.3 253.1 M290.3 264.9 L289.6 260.7 L287.1 259.7 L284.0 260.0 M286.5 242.5 L284.4 242.5 M276.5 261.5 L278.6 260.1 M270.2 232.2 L272.7 234.2 L272.0 234.7 L272.2 237.2 L273.8 239.2 M255.8 236.6 L258.1 233.0 L259.0 230.8 L259.1 231.2 L261.8 230.1 L262.9 229.6 L263.3 226.0 L264.7 225.2 M255.8 236.6 L256.1 239.7 L257.1 241.3 L259.9 242.0 L264.0 242.6 L266.2 245.1 L266.9 247.9 M266.9 247.9 L269.1 247.2 M273.8 239.2 L272.9 242.2 L270.1 243.4 L269.9 243.8 L269.1 247.2 M266.5 256.6 L269.0 257.6 L273.1 255.4 M266.5 256.6 L266.6 254.3 L266.1 252.1 L266.3 249.7 L266.9 247.9 M275.0 254.3 L275.0 255.0 L275.7 252.2 L273.9 249.3 L275.2 246.6 L277.3 245.5 L278.1 243.6 M269.1 247.2 L269.4 248.0 L270.9 249.4 L274.8 246.8 L278.1 243.6 M241.9 266.5 L242.1 266.6 M241.9 266.5 L242.9 264.7 L244.1 262.5 L245.2 260.5 L244.7 260.1 L243.8 259.0 L244.5 257.2 L245.5 253.3 L246.1 250.9 L247.5 248.7 L249.5 246.9 L250.3 245.2 L250.4 240.2 L250.9 237.6 L250.8 238.1 M242.1 266.6 L243.7 264.9 L244.7 264.1 L246.7 263.1 L248.3 260.1 L249.3 257.2 L249.6 256.6 L252.9 253.9 L253.2 253.2 L254.2 250.8 M254.2 250.8 L252.4 248.6 L253.8 247.3 L254.0 246.0 L253.3 242.0 L253.6 239.0 L252.7 237.4 M250.8 238.1 L252.7 237.4 M241.5 239.9 L245.6 239.7 L249.1 238.6 L250.8 238.1 M239.6 266.0 L241.9 266.5 M255.2 259.8 L256.8 256.0 L257.9 252.7 L256.8 252.6 L254.2 250.8 M266.5 256.6 L264.0 257.5 L259.5 259.5 L257.1 259.3 L255.2 259.8 M255.8 236.6 L252.7 237.4 M263.2 267.3 L258.4 268.4 L257.8 269.6 L253.0 269.8 L251.1 270.3 M263.2 267.3 L258.2 265.7 L255.6 265.3 L256.0 263.8 L255.9 260.4 M255.9 260.4 L256.0 259.5 L255.5 261.1 L251.7 262.3 L250.2 264.3 L248.9 265.5 L248.4 265.4 L248.0 267.4 M251.1 270.3 L249.0 271.1 L246.9 270.1 L248.9 267.8 L248.0 267.4 M266.5 269.5 L263.2 267.3 M251.0 271.2 L251.1 270.3 M255.2 259.8 L255.9 260.4 M242.1 266.6 L245.0 267.7 L248.0 267.4 M342.6 232.7 L340.8 232.4 M340.6 230.6 L340.8 232.4 M335.3 217.1 L334.6 217.5 L333.1 218.9 M340.6 230.6 L338.2 228.9 L334.3 227.7 L334.0 225.7 L332.6 225.2 L330.6 224.2 L329.6 221.4 M329.6 221.4 L333.1 218.9 M328.2 205.3 L328.1 207.4 L329.7 211.3 L330.3 212.9 L329.9 213.4 L331.0 216.3 L333.1 218.5 M333.1 218.5 L333.1 218.9 M318.7 212.2 L321.0 214.7 L321.0 217.7 L321.9 220.9 M333.1 218.5 L332.9 218.1 L330.1 218.0 L326.8 220.2 L321.9 220.9 M329.5 260.3 L328.3 257.1 L329.5 253.5 L330.3 251.4 L329.7 249.4 M329.5 260.3 L326.8 261.4 L324.8 263.4 L324.1 263.1 L323.2 262.7 L320.0 263.7 L318.9 262.7 M329.7 249.4 L328.8 250.3 L322.6 254.0 L318.5 256.0 L316.5 256.6 L314.3 255.2 M318.9 262.7 L318.1 259.9 L318.7 258.5 L317.8 257.4 L314.3 255.2 M316.5 266.3 L317.7 264.6 L318.9 262.7 M331.6 258.2 L329.5 260.3 M310.4 241.2 L311.1 240.8 M311.1 240.8 L312.9 244.0 L314.5 248.7 L314.5 251.7 L314.3 255.2 M340.8 239.5 L342.3 243.3 L343.8 245.9 L345.8 246.9 L344.1 248.8 M340.8 239.5 L340.7 239.7 L337.8 239.8 L335.3 242.5 L331.9 244.1 L329.6 245.5 M329.6 245.5 L331.7 246.4 L335.4 248.0 L336.4 249.7 L337.7 251.1 L341.0 250.4 M344.1 248.8 L344.0 250.7 L343.2 250.1 M343.2 250.1 L341.0 250.4 M340.8 232.4 L340.5 234.7 L339.5 238.0 L340.8 239.5 M345.6 249.5 L344.1 248.8 M329.3 245.6 L329.7 249.4 M333.0 258.9 L335.3 257.9 L335.5 255.5 L335.6 254.3 L337.5 253.5 L341.0 250.4 M329.3 245.6 L329.6 245.5 M349.1 261.8 L347.1 259.3 L345.2 256.7 L343.3 254.7 L342.1 252.9 L343.2 250.1 M313.0 235.4 L312.2 236.4 L311.0 239.4 L313.3 240.8 L312.8 241.1 M313.0 235.4 L316.2 233.7 L319.1 232.0 M312.8 241.1 L313.5 241.9 L315.8 242.6 L318.7 242.6 L320.3 244.6 L323.8 245.3 L326.8 245.1 M319.1 232.0 L320.0 232.7 L322.1 231.6 L322.9 231.8 M322.9 231.8 L322.5 234.2 M322.5 234.2 L324.0 236.5 L326.2 237.1 M326.8 245.1 L326.2 241.4 L326.9 238.5 L326.2 237.1 M311.1 240.8 L312.8 241.1 M310.6 232.9 L313.0 235.4 M317.4 213.7 L316.5 217.3 L317.5 218.5 L318.4 221.1 L320.4 223.0 L319.0 226.4 L318.0 229.2 L319.1 232.0 M329.3 245.6 L326.8 245.1 M321.9 220.9 L323.2 221.9 L322.5 223.3 L323.9 224.4 L323.9 228.6 L323.2 230.1 L323.3 230.5 L322.9 231.8 M329.6 221.4 L329.7 224.0 L327.5 227.6 L326.1 229.2 L325.3 229.4 L322.4 232.8 L322.5 234.2 M340.6 230.6 L337.8 231.1 L335.1 231.5 L332.1 234.1 L329.5 235.1 L326.2 237.1 M514.7 224.0 L514.7 222.4 L514.8 218.8 L514.6 217.7 L513.6 217.8 L511.7 217.8 L508.6 218.1 M513.0 209.4 L511.3 210.6 L510.6 210.7 L509.2 209.5 L505.6 209.5 M505.6 209.5 L506.8 212.8 L506.1 217.0 L508.6 218.1 M511.5 222.7 L511.1 221.7 M508.6 218.1 L510.0 221.5 L511.1 221.7 M454.2 179.5 L456.3 180.0 L456.2 180.9 L456.0 183.8 L458.9 185.2 L464.3 184.4 L465.4 184.9 M452.1 180.1 L454.2 179.5 M452.1 180.1 L453.9 179.7 L453.1 180.6 L453.1 183.7 L453.7 186.6 L451.7 188.8 L453.2 190.6 L450.8 194.3 L450.9 196.9 M463.3 189.4 L464.5 186.3 L465.4 184.9 M463.3 189.4 L462.2 191.3 L461.1 192.4 L459.0 195.4 L457.4 196.1 L453.7 197.2 M453.7 197.2 L450.9 196.9 M483.5 104.1 L482.8 103.8 M483.5 104.1 L482.9 103.1 L481.3 101.1 L482.3 96.5 L483.6 95.6 L483.9 90.4 M482.8 103.8 L480.5 104.3 L479.1 103.6 L478.4 99.8 L479.4 94.2 L479.6 91.7 M479.6 91.7 L479.2 90.9 L479.2 86.1 M483.9 90.4 L481.6 89.1 L479.2 86.1 M496.5 92.6 L494.9 94.5 L493.6 95.8 L492.7 97.8 L489.5 100.3 L486.9 102.5 L483.5 104.1 M482.6 105.6 L482.8 103.8 M489.8 87.6 L487.9 89.2 L483.9 90.4 M468.5 101.2 L470.0 99.3 L470.0 98.6 L471.9 98.2 L475.0 94.8 L476.8 92.4 L479.6 91.7 M469.9 84.6 L471.9 83.6 L472.5 84.6 L475.3 85.6 L479.2 86.1 M467.7 149.3 L466.8 148.6 M467.7 149.3 L471.3 148.9 L473.0 148.3 L473.6 148.6 L475.7 148.5 L477.8 148.0 L480.0 148.2 L481.6 148.6 L482.0 150.4 M466.8 148.6 L466.8 146.2 L468.9 143.2 M468.9 143.2 L472.3 143.6 L476.5 143.0 L480.1 143.0 L483.6 143.5 L483.1 146.6 L482.1 150.2 M482.0 150.4 L482.1 150.4 M482.1 150.4 L482.1 150.2 M459.8 142.2 L463.1 142.3 L464.4 143.8 L465.3 146.6 L466.8 148.6 M467.6 140.7 L466.4 138.2 L466.1 136.7 L462.9 135.8 L461.4 135.4 M467.6 140.7 L467.2 142.6 L468.9 143.2 M456.2 152.5 L457.8 152.8 M456.2 152.5 L457.7 154.9 L457.9 157.3 L459.0 159.6 M457.8 152.8 L458.7 154.2 L460.8 153.3 L463.6 152.3 L465.0 153.2 L467.7 152.3 M459.0 159.6 L460.8 160.5 L461.9 160.3 L464.1 159.7 L469.2 155.3 M467.7 152.3 L468.2 155.5 L469.2 155.3 M460.0 143.0 L459.3 145.1 L457.3 149.0 L456.6 148.8 L457.8 152.8 M439.6 146.7 L440.5 147.7 L443.1 148.1 M455.7 152.5 L456.2 152.5 M467.7 149.3 L467.7 152.3 M483.3 151.8 L482.3 152.7 L479.8 155.4 L476.9 156.1 L475.7 158.0 M471.1 155.6 L472.6 156.4 L475.7 158.0 M483.3 151.8 L481.9 150.8 L482.0 150.4 M469.8 154.6 L469.2 155.3 M471.1 155.6 L469.8 154.6 M490.6 124.1 L486.7 125.7 L483.2 128.4 L481.4 129.3 L480.5 130.7 M493.6 130.3 L491.6 130.7 L491.0 132.5 L489.7 132.8 L487.9 132.8 L486.3 134.4 L483.0 135.0 M483.0 135.0 L480.3 134.2 L480.5 130.7 M473.7 126.1 L474.9 127.2 M480.5 130.7 L478.6 128.2 L474.9 127.2 M459.9 132.5 L461.9 133.6 L462.6 132.9 L466.7 130.7 L469.3 129.2 L470.6 129.0 L474.7 127.6 M474.7 127.6 L474.9 127.2 M524.5 110.6 L522.1 111.0 L520.3 111.6 L518.3 114.3 L518.3 114.4 L519.0 114.2 L518.0 113.9 L515.7 116.1 M524.5 110.6 L525.2 114.3 L527.4 116.5 L526.9 117.9 L526.4 118.9 L527.0 121.2 L527.1 126.6 L526.8 128.9 L524.2 130.4 L524.0 133.7 L524.2 136.9 M515.7 116.1 L515.1 116.6 L513.6 121.2 L514.9 123.7 L513.8 125.5 L511.5 128.4 L513.7 129.8 L516.5 132.2 L516.7 133.7 M524.2 136.9 L523.7 136.1 L521.2 135.8 L521.1 133.1 L520.1 133.5 L518.7 132.4 L516.7 133.7 M526.4 110.0 L524.5 110.6 M511.9 118.2 L515.7 116.1 M538.7 139.4 L536.8 138.2 L534.9 136.0 L533.3 133.7 L529.1 136.6 L526.1 138.4 L524.2 136.9 M494.0 131.0 L494.3 131.7 M514.8 135.9 L516.7 133.7 M338.0 183.1 L342.7 183.3 L346.8 183.4 L351.7 184.1 L355.5 182.8 L357.0 183.7 M349.7 198.6 L351.1 198.2 L353.3 197.9 M353.3 197.9 L354.6 195.3 L354.2 193.7 L353.8 194.5 M353.8 194.5 L354.8 191.2 L356.2 187.8 L357.0 183.7 M353.3 197.9 L354.1 198.6 L356.3 198.5 L358.2 196.4 L358.6 197.2 L360.4 196.9 M360.4 196.9 L363.0 194.6 M362.6 190.9 L362.2 188.3 M353.8 194.5 L355.4 192.5 L359.1 189.6 L361.2 188.4 L362.2 188.3 M199.8 184.0 L204.1 184.9 M199.8 184.0 L197.9 182.9 L197.6 182.3 M197.6 182.3 L197.7 182.8 L198.9 182.7 L202.2 180.5 L203.5 180.6 M204.1 184.9 L203.5 180.6 M200.4 188.8 L201.4 188.2 L200.4 187.6 L199.8 184.0 M201.4 198.5 L201.6 193.2 L203.2 190.5 L204.1 188.6 L204.1 184.9 M194.3 186.9 L195.7 184.3 L195.3 181.6 L195.6 179.5 M195.6 179.5 L196.9 179.7 M196.9 179.7 L197.6 182.3 M198.2 173.1 L198.8 174.4 L197.4 179.1 L196.9 179.7 M207.1 180.3 L203.5 180.6 M189.2 185.6 L188.1 184.7 M189.2 185.6 L190.0 183.6 L192.5 182.0 L194.1 179.7 M188.1 184.7 L187.8 182.1 L189.4 178.8 L190.0 177.8 M194.1 179.7 L190.0 177.8 M195.6 179.5 L194.1 179.7 M188.1 189.8 L189.1 187.3 L189.2 185.6 M189.1 178.2 L190.0 177.8 M343.2 132.7 L346.2 133.5 L349.8 132.2 L353.3 131.4 L354.8 131.8 L356.8 132.9 M359.8 143.7 L356.6 143.4 L353.4 144.3 L349.6 145.6 L348.7 142.3 L348.2 141.2 L346.0 139.9 M359.8 143.7 L361.7 140.4 M361.7 140.4 L359.6 140.2 L356.8 138.8 L354.5 135.2 L356.8 132.9 M354.7 123.8 L353.1 123.0 M354.7 123.8 L356.0 125.0 L356.1 125.2 L356.1 129.2 L358.0 131.7 M358.0 131.7 L356.8 132.9 M398.0 96.8 L398.5 100.1 L395.8 104.4 L394.3 107.8 L395.5 109.0 L395.3 109.7 M384.7 102.8 L386.3 104.0 M395.3 109.7 L393.0 110.5 L392.3 110.0 L390.8 106.6 L389.6 106.0 L386.9 105.4 L386.3 104.0 M357.0 183.7 L358.1 182.0 L359.8 180.3 L360.9 180.0 M359.7 171.1 L359.6 171.9 L360.8 173.4 L360.9 180.0 M359.7 171.1 L355.6 171.5 L353.8 170.0 M338.5 179.8 L340.6 178.1 L340.7 174.8 L341.3 172.1 L344.0 171.5 M353.8 170.0 L350.8 171.8 L349.4 171.4 L347.9 172.2 L344.8 171.7 L344.0 171.5 M337.5 162.4 L338.1 162.4 M344.0 171.5 L343.3 169.6 L339.3 168.1 L337.1 166.9 L337.7 163.9 L338.1 162.4 M339.3 151.3 L338.1 153.3 L339.7 156.5 M339.7 156.5 L338.1 162.4 M351.6 213.2 L353.9 214.4 L354.9 213.8 L358.9 214.5 M358.4 215.7 L359.4 215.2 M358.9 214.5 L359.4 215.2 M354.5 229.8 L357.0 225.3 L358.9 223.5 L361.3 222.1 L362.6 222.3 M362.6 222.3 L361.6 216.7 M359.4 215.2 L361.6 216.7 M280.9 241.9 L280.8 241.4 L282.4 239.5 L282.8 237.5 L286.2 233.4 M280.9 241.9 L279.8 241.0 M279.8 241.0 L279.3 239.4 L279.3 238.3 M279.3 238.3 L281.1 235.5 L280.7 234.5 M280.7 234.5 L282.0 233.3 M286.2 233.4 L283.2 233.1 L282.0 233.3 M287.4 233.1 L286.2 233.4 M282.0 242.1 L280.9 241.9 M278.1 243.6 L279.8 241.0 M273.8 239.2 L276.9 239.0 L279.3 238.3 M277.7 232.7 L277.5 234.4 L280.7 234.5 M285.2 225.7 L283.0 227.4 L282.8 230.2 L281.9 233.1 L282.0 233.3 M463.3 189.4 L464.4 192.6 L466.0 193.3 L464.7 194.5 L463.0 196.1 L464.0 197.7 M453.7 197.2 L457.9 197.5 M457.9 197.5 L460.4 197.1 L461.6 197.0 L460.6 198.7 L461.8 198.6 L462.0 196.8 L463.9 197.7 M464.0 197.7 L463.9 197.7 M461.4 202.2 L461.5 202.5 L461.1 203.2 L460.9 200.6 L459.2 198.4 L457.9 197.5 M461.4 202.2 L462.3 203.2 M463.9 197.7 L463.9 200.6 L463.6 201.2 L462.3 203.2 M472.0 226.6 L470.9 225.9 M472.0 226.6 L474.7 226.3 L475.8 226.6 L475.1 229.3 L477.5 231.1 M470.9 225.9 L474.1 223.8 L478.7 222.3 L480.9 221.3 L482.6 220.8 L484.5 219.1 M483.8 229.0 L484.5 228.2 L487.2 228.8 M487.2 228.8 L485.1 226.1 L482.6 221.7 L484.5 219.1 M447.0 251.0 L447.1 250.4 M456.1 249.1 L454.6 248.5 L451.7 247.0 M451.7 247.0 L451.4 246.8 M451.4 246.8 L451.6 247.3 L451.8 248.7 L450.2 249.8 L449.6 249.6 L447.1 250.4 M459.8 234.7 L457.7 237.2 M459.8 234.7 L461.9 235.3 L464.7 235.0 M457.7 237.2 L457.0 239.0 L457.1 240.4 L458.1 240.5 L456.5 243.1 M464.7 235.0 L463.7 235.8 L464.6 238.7 M464.6 238.7 L462.6 240.4 L461.4 240.2 L459.7 241.4 L456.5 243.1 M458.3 233.1 L458.3 234.9 L457.7 237.2 M458.3 233.1 L458.7 228.1 L455.0 227.7 M460.8 230.3 L460.0 228.5 L459.0 226.6 L456.1 225.9 M461.3 231.2 L460.8 230.3 M461.3 231.2 L459.8 234.7 M455.0 227.7 L456.1 225.9 M476.9 232.2 L476.3 230.9 L474.1 231.5 L470.2 232.8 L464.7 235.0 M472.0 226.6 L469.4 227.3 L468.2 229.1 L466.5 228.9 L463.1 229.0 L461.3 231.2 M465.0 240.9 L464.6 238.7 M451.7 247.0 L454.0 245.2 L456.5 243.1 M451.4 246.8 L451.3 246.7 M451.3 246.7 L453.3 243.9 L454.6 242.0 L453.6 240.3 L452.8 236.2 M458.3 233.1 L453.3 235.2 M453.3 235.2 L452.8 236.2 M451.3 246.7 L450.8 245.2 L450.7 245.5 L449.5 244.2 L449.9 242.1 L447.4 241.7 M452.8 236.2 L451.2 239.7 L449.9 241.9 L449.4 241.7 L447.4 241.7 M448.0 162.5 L449.7 163.1 L447.9 168.0 L446.4 170.3 M439.3 159.8 L436.4 162.2 L434.4 165.2 M439.3 159.8 L439.3 159.8 M434.4 165.2 L438.1 164.8 L443.5 163.8 L445.9 165.3 L445.5 167.6 L446.4 170.3 M439.7 144.7 L438.1 147.2 L436.8 148.5 L434.1 149.8 L431.5 150.8 L430.3 153.7 L429.3 155.8 M439.3 159.8 L438.4 159.4 L436.1 159.6 L433.6 158.3 M429.3 155.8 L428.5 156.6 M428.5 156.6 L430.1 158.4 L430.3 158.4 L433.6 158.3 M414.2 120.1 L414.7 118.7 L412.2 120.0 L410.0 122.4 L408.2 124.5 L406.1 125.5 M414.2 120.1 L415.2 116.8 L414.2 114.7 L410.9 114.1 M406.1 125.5 L405.4 121.9 L404.4 120.9 L402.1 121.6 L401.9 119.2 L401.4 116.3 L402.0 114.6 L401.3 112.5 M410.9 114.1 L409.7 114.3 L409.8 112.4 L409.3 111.7 L407.0 112.1 M407.0 112.1 L401.3 112.5 M419.7 118.5 L416.1 121.3 L414.1 123.1 M416.4 107.0 L415.1 109.2 L414.1 111.4 L410.9 113.0 L410.9 114.1 M414.1 123.1 L414.2 120.1 M410.7 105.4 L410.7 106.0 L408.4 109.6 L407.0 112.1 M395.3 109.7 L399.9 111.8 M399.9 111.8 L401.3 112.5 M468.8 173.9 L465.2 173.4 L464.9 171.8 L464.5 169.8 L463.0 169.1 M468.8 173.9 L470.0 172.0 L470.4 170.2 L472.2 167.3 L474.6 163.7 M474.6 163.7 L470.6 164.5 L468.5 163.9 L466.3 163.8 M463.0 169.1 L466.1 167.2 L466.3 163.8 M460.1 171.4 L458.0 172.1 L455.5 173.6 L456.2 176.7 L454.2 179.5 M460.1 171.4 L462.1 169.3 M473.3 178.5 L472.6 174.3 L468.8 173.9 M473.3 178.5 L472.7 179.4 L472.8 179.1 L471.8 179.6 L471.8 181.3 M465.4 184.9 L468.5 183.1 L471.8 181.3 M462.1 169.3 L463.0 169.1 M462.8 168.7 L461.9 168.4 L460.9 167.1 L461.8 166.0 L462.4 163.9 M462.8 168.7 L460.8 168.6 L458.8 168.1 L459.2 166.0 L461.2 164.9 L461.3 162.4 L459.2 159.8 M459.2 159.8 L461.7 163.9 L462.4 163.9 M462.1 169.3 L462.8 168.7 M471.1 155.6 L469.3 157.9 L469.2 158.8 L467.5 162.0 L466.9 163.6 L466.3 163.8 M469.8 154.6 L468.1 156.6 L465.5 160.0 L462.4 163.9 M454.8 161.4 L455.1 164.3 L454.0 166.0 L453.7 169.6 L455.0 171.5 L459.8 171.2 L460.1 171.4 M459.0 159.6 L459.2 159.8 M474.6 163.7 L476.5 163.7 L477.4 164.7 M473.3 178.5 L478.2 180.1 M478.2 180.1 L481.1 178.9 M481.1 178.9 L479.4 174.4 L479.9 174.2 L479.8 172.5 L478.8 170.5 L477.7 168.0 L477.4 164.7 M475.7 158.0 L479.0 160.5 L479.2 163.3 M477.4 164.7 L479.2 163.3 M486.3 145.0 L483.9 147.7 L482.1 150.4 M507.2 154.9 L506.3 155.6 L505.0 157.5 M483.3 151.8 L488.3 152.1 L489.8 154.2 M505.0 157.5 L503.7 156.1 L499.4 156.3 L497.0 157.3 L494.4 157.6 L492.5 158.5 L489.8 159.4 L489.2 157.9 L489.8 154.2 M484.1 142.0 L482.8 140.0 L480.0 139.2 L476.9 138.7 L473.6 138.7 L469.0 137.7 M484.1 142.0 L485.3 139.0 L485.5 137.5 M485.5 137.5 L482.2 137.2 L478.7 136.0 L474.1 132.9 L473.1 131.3 M469.0 137.7 L470.1 133.5 L473.1 131.3 M467.6 140.7 L469.0 137.7 M482.1 150.2 L484.0 144.9 L484.1 142.0 M483.0 135.0 L484.2 135.1 L485.5 137.5 M474.7 127.6 L473.1 131.3 M361.9 180.7 L361.2 182.2 L360.3 183.7 L361.7 185.9 L362.0 187.5 L362.4 188.4 M361.9 180.7 L362.9 180.2 L363.7 182.0 L364.1 182.6 L364.9 183.6 L368.4 182.1 L371.7 180.8 M362.4 188.4 L365.8 187.6 L367.0 186.9 L368.3 185.8 M368.3 185.8 L369.0 183.8 L371.1 181.6 M371.7 180.8 L371.1 181.6 M360.9 180.0 L361.9 180.7 M362.2 188.3 L362.4 188.4 M371.2 194.1 L369.6 191.9 L368.8 190.0 L368.3 185.8 M376.0 192.7 L379.1 190.6 L381.8 190.7 M381.8 190.7 L379.7 188.5 L377.8 186.5 L375.2 184.2 L372.5 183.7 L371.1 181.6 M187.7 184.5 L184.9 184.0 M187.7 184.5 L186.5 185.2 L184.3 189.0 L185.2 191.2 M184.9 184.0 L184.8 185.7 L183.4 187.2 L183.3 190.3 M185.2 191.2 L183.3 190.3 M187.0 192.6 L185.2 191.2 M188.1 184.7 L187.7 184.5 M176.3 196.2 L176.8 195.8 M176.8 195.8 L180.2 192.3 L183.3 190.3 M181.7 181.1 L180.0 182.3 L181.3 182.9 M181.7 181.1 L180.0 180.1 L178.6 177.1 L178.3 174.4 L177.1 172.7 M181.3 182.9 L179.1 183.7 L178.2 186.8 L174.6 189.2 M177.1 172.7 L175.6 175.8 L173.1 178.1 L172.5 180.0 M174.6 189.2 L172.3 188.9 L173.3 186.3 M172.5 180.0 L173.2 183.0 L173.3 186.3 M182.1 181.0 L181.7 181.1 M184.9 184.0 L181.3 182.9 M175.5 169.2 L177.1 169.8 L177.1 172.7 M176.8 195.8 L176.9 193.6 L176.9 190.6 L175.9 189.7 L174.6 189.2 M165.0 177.6 L167.2 179.2 L170.6 179.9 L172.5 180.0 M168.2 197.4 L169.4 195.6 L172.3 194.0 L171.6 192.2 L169.9 190.2 L170.8 189.6 L173.3 186.3 M365.0 152.2 L368.6 149.9 L371.2 150.0 M364.6 146.9 L363.3 148.9 L363.0 149.9 L362.9 151.5 L365.0 152.2 M364.6 146.9 L365.1 147.6 L364.8 147.1 L364.7 148.7 L368.1 147.1 M368.1 147.1 L370.6 147.9 L370.0 149.0 L371.2 150.0 M364.6 146.9 L362.8 146.4 M373.8 134.8 L371.6 133.7 L370.2 134.3 L368.6 136.1 L367.6 137.0 L364.9 139.9 L363.3 140.8 L361.7 140.4 M359.8 143.7 L362.8 146.4 M373.8 134.8 L375.4 138.4 M375.4 138.4 L375.1 141.7 L374.3 141.9 M368.1 147.1 L370.2 142.5 L374.3 141.9 M387.3 151.4 L387.2 148.2 M387.3 151.4 L383.6 154.6 L380.7 154.8 L380.1 152.5 M387.2 148.2 L385.7 146.8 L383.1 147.0 L381.7 144.2 L381.5 141.4 L380.7 139.6 M375.4 138.4 L375.9 140.2 L377.7 141.9 L380.7 139.6 M374.3 141.9 L375.1 142.7 L378.4 145.8 L380.7 148.8 L380.1 152.5 M384.6 127.8 L386.6 126.4 L388.0 123.9 M384.6 127.8 L383.1 127.5 L380.8 125.5 L377.8 126.3 L375.1 126.2 L373.6 125.0 M388.0 123.9 L387.3 121.6 L385.7 122.3 L385.5 120.3 L384.2 116.7 L384.6 114.1 L386.3 111.0 L386.7 109.3 L386.4 104.4 M386.4 104.4 L384.9 106.7 L383.0 108.7 L382.7 109.8 L378.9 110.4 L378.3 112.8 L375.0 114.5 L372.0 116.3 L370.8 116.6 L367.8 118.6 M373.6 125.0 L372.7 123.6 M372.7 123.6 L367.8 119.2 M367.8 119.2 L367.8 118.6 M380.7 139.6 L383.3 137.9 L383.4 135.7 L384.8 135.8 M384.8 135.8 L385.3 133.2 L385.4 129.9 L385.1 129.3 L384.6 127.8 M373.8 134.8 L375.6 132.5 L374.3 129.4 L373.4 125.7 L373.6 125.0 M399.9 111.8 L398.7 112.8 L397.9 112.8 L398.8 115.0 L395.8 117.1 L393.7 118.9 L391.1 120.5 L388.9 125.2 M386.3 104.0 L386.4 104.4 M388.9 125.2 L388.0 123.9 M364.5 112.5 L364.9 113.9 L364.8 117.4 L366.1 117.6 L367.8 118.6 M358.0 131.7 L358.7 130.4 L359.0 130.3 L359.3 128.9 L361.7 127.7 L366.2 126.2 L368.7 124.3 L372.7 123.6 M354.7 123.8 L356.7 123.4 L357.6 122.9 L358.7 122.8 L361.3 120.5 L362.7 118.9 L364.4 119.3 L365.3 119.3 L367.8 119.2 M356.8 160.4 L357.2 163.1 L356.3 165.9 M356.8 160.4 L357.2 158.9 L356.9 159.2 L355.9 157.2 L356.8 152.7 M356.3 165.9 L354.7 162.6 L354.2 160.8 L352.8 160.2 L350.4 160.6 M353.4 153.8 L355.0 153.4 L356.8 152.7 M353.4 153.8 L350.2 159.6 M350.2 159.6 L350.4 160.6 M353.8 170.0 L355.0 167.1 L355.4 167.2 L356.3 165.9 M339.7 156.5 L339.2 158.3 L341.3 158.2 L342.3 159.4 L343.3 159.9 L347.3 160.2 L350.4 160.6 M362.8 146.4 L361.1 149.0 L358.5 151.6 L356.8 152.7 M345.1 142.8 L346.7 145.1 L348.5 149.8 L350.8 152.6 L353.4 153.8 M339.8 147.6 L345.1 149.4 L347.9 150.7 L348.4 154.3 L350.2 159.6 M373.3 178.7 L371.7 180.8 M373.3 178.7 L370.5 177.1 L367.7 176.3 M359.7 171.1 L362.1 170.2 M362.1 170.2 L363.7 171.1 L364.9 171.2 L364.9 175.5 L367.7 176.3 M356.8 160.4 L359.9 158.7 M362.1 170.2 L362.7 169.7 L362.0 166.2 L363.3 164.3 L366.8 163.0 L368.7 161.8 M359.9 158.7 L362.6 159.1 L365.5 159.3 L367.6 159.8 L368.7 161.8 M365.0 152.2 L364.1 154.1 M359.9 158.7 L361.1 156.3 L364.1 154.1 M352.6 206.1 L354.8 204.6 M360.4 196.9 L358.0 199.3 L359.8 202.6 M354.8 204.6 L355.4 206.0 L355.5 205.9 L357.1 204.9 L359.8 202.6 M358.9 214.5 L358.9 213.5 M354.8 204.6 L355.5 207.1 L356.1 210.6 L358.9 213.5 M375.0 202.2 L377.5 199.3 M375.0 202.2 L370.1 202.4 L363.5 202.3 L360.7 203.0 M359.8 202.6 L360.7 203.0 M394.3 206.4 L396.1 202.3 L398.3 200.9 L399.4 199.4 M396.2 195.4 L398.0 198.5 L399.4 199.4 M396.2 195.4 L393.2 195.7 L391.6 197.2 L389.2 199.2 L385.3 200.5 L383.4 202.7 M394.3 206.4 L389.4 204.8 L388.3 203.5 M388.3 203.5 L387.3 202.5 L383.4 202.7 M506.9 227.6 L502.4 228.2 M511.1 221.7 L507.6 223.8 L503.9 224.7 L502.0 223.1 M502.0 223.1 L501.1 224.5 L501.4 226.0 L502.4 228.2 M500.7 234.9 L495.8 231.9 M502.4 228.2 L501.5 229.5 L499.4 230.9 L495.8 231.9 M486.7 246.0 L487.7 243.5 L488.1 240.1 L488.8 237.3 L490.9 236.1 L489.2 233.7 L488.2 231.9 L488.9 230.7 M495.8 231.9 L490.8 233.1 L488.9 230.7 M487.2 228.8 L488.4 228.0 M488.9 230.7 L488.4 228.0 M484.4 219.7 L483.9 216.8 L484.9 214.3 M484.4 219.7 L483.6 219.4 L482.9 217.3 L482.0 214.7 M484.9 214.3 L484.8 214.4 L485.2 214.2 L485.5 213.6 L482.5 212.0 M482.0 214.7 L482.7 213.3 L482.5 212.0 M470.9 225.9 L469.3 224.4 M469.3 224.4 L473.1 219.1 M473.1 219.1 L479.0 216.4 L482.0 214.7 M484.5 219.1 L484.4 219.7 M434.2 234.5 L437.5 234.2 L439.6 234.3 L442.8 237.2 M434.2 234.5 L434.6 231.3 M434.6 231.3 L438.2 230.0 L439.3 231.3 L441.6 233.5 L444.9 233.8 L448.2 234.1 M442.8 237.2 L445.1 235.0 L446.2 233.9 L448.2 234.1 M447.4 241.7 L444.6 241.9 M444.6 241.9 L442.8 237.2 M453.3 235.2 L451.5 234.8 L449.1 233.9 M449.1 233.9 L448.2 234.1 M434.7 254.8 L435.5 251.5 L437.1 249.9 M447.1 250.4 L446.8 247.3 L443.6 244.9 M437.1 249.9 L443.6 244.9 M444.6 241.9 L444.4 242.0 M443.6 244.9 L444.4 242.0 M433.1 238.7 L434.4 240.6 M433.1 238.7 L431.7 240.3 L430.3 240.1 M430.3 240.1 L429.7 241.2 L430.3 242.4 L432.4 244.9 M434.4 240.6 L435.0 245.4 M432.4 244.9 L435.0 245.4 M444.4 242.0 L439.5 243.2 L436.7 242.9 L434.4 240.6 M434.2 234.5 L432.9 235.8 L433.1 238.7 M427.6 250.5 L428.6 248.6 L430.7 248.5 L432.4 244.9 M427.6 250.5 L426.0 249.7 L422.6 248.6 M422.6 248.6 L424.7 245.7 L426.2 241.7 L429.0 241.7 L430.1 240.2 M430.1 240.2 L430.3 240.1 M437.1 249.9 L436.1 248.1 L435.0 245.4 M426.0 260.4 L426.9 254.6 L427.6 250.5 M388.9 125.2 L391.4 125.8 L392.6 125.5 L393.3 126.8 L394.8 126.6 L398.5 126.6 L403.7 127.3 M406.1 125.5 L406.7 126.5 M406.7 126.5 L403.7 127.3 M432.3 165.8 L432.2 166.0 M432.3 165.8 L434.1 162.6 L432.7 164.0 M432.2 166.0 L432.9 164.6 L432.0 164.4 L430.1 164.1 M432.7 164.0 L429.8 164.4 L428.2 163.6 M430.1 164.1 L428.2 163.6 M434.4 165.2 L434.4 165.2 M434.4 165.2 L432.3 165.8 M433.6 158.3 L432.7 164.0 M430.5 168.9 L432.6 168.1 M432.6 168.1 L432.2 166.0 M430.5 168.9 L430.6 165.9 L430.1 164.1 M428.5 156.6 L427.1 156.2 M427.1 156.2 L427.7 157.6 L428.0 160.1 L427.9 163.4 M427.9 163.4 L428.2 163.6 M425.3 164.0 L421.2 163.5 L419.5 161.9 L419.7 159.5 M425.3 164.0 L425.5 165.3 M425.5 165.3 L423.2 166.7 L419.1 168.2 M419.1 168.2 L419.0 165.1 L418.0 161.9 M418.0 161.9 L419.7 159.5 M427.9 163.4 L426.2 163.1 L425.3 164.0 M420.4 151.9 L421.3 156.4 L419.7 159.5 M420.4 151.9 L423.0 152.5 L424.6 154.2 L427.1 156.2 M416.2 161.5 L416.3 160.2 L415.0 160.5 L414.1 158.1 L411.7 154.5 M417.0 151.6 L413.8 153.9 L412.4 153.6 L411.7 154.5 M420.4 151.9 L417.0 151.6 M416.2 161.5 L418.0 161.9 M516.5 171.9 L514.7 172.0 L513.0 172.7 L512.2 172.1 L510.7 171.6 L508.1 170.5 L504.6 171.1 L500.9 171.7 M505.0 157.5 L505.5 157.8 L504.7 160.3 L501.6 163.5 L499.2 164.8 L498.1 168.6 M498.1 168.6 L500.9 171.7 M408.8 256.1 L410.4 255.6 L409.6 253.6 L409.2 250.1 L411.1 248.4 L413.4 246.5 L414.0 243.1 M422.6 248.6 L422.1 248.3 M414.0 243.1 L416.6 244.8 L418.3 245.3 L418.7 246.7 L419.1 247.7 L422.1 248.3 M389.6 143.4 L389.8 140.3 L388.1 136.1 L388.2 135.0 M389.6 143.4 L392.0 142.2 L393.1 142.4 L395.6 140.1 L396.6 138.8 L400.4 136.1 L401.7 135.6 M388.2 135.0 L389.8 134.4 L392.8 133.5 L395.1 133.0 L399.6 131.5 L403.9 129.1 M401.7 135.6 L402.0 132.9 L403.9 129.1 M387.2 148.2 L388.1 144.7 L389.6 143.4 M384.8 135.8 L388.2 135.0 M403.7 127.3 L403.9 129.1 M369.3 165.8 L368.7 162.1 M369.3 165.8 L372.7 166.9 L376.5 166.4 M368.7 162.1 L368.7 157.4 L368.7 155.5 M376.5 166.4 L373.1 163.3 L372.1 161.4 L372.0 159.7 L372.1 157.4 M368.7 155.5 L369.1 157.0 L370.5 156.9 L372.0 157.3 M372.1 157.4 L372.0 157.3 M367.7 176.3 L370.1 171.9 L370.3 168.7 L369.2 167.3 L369.3 165.8 M368.7 161.8 L368.7 162.1 M382.9 168.3 L379.9 171.4 L380.1 174.1 L379.8 176.5 L377.8 177.8 M382.9 168.3 L381.7 168.5 L380.1 168.6 L376.5 166.4 M377.8 177.8 L375.8 178.3 L374.9 177.8 L373.3 178.7 M364.1 154.1 L366.5 155.1 L368.7 155.5 M371.2 150.0 L372.0 157.3 M380.1 152.5 L378.2 152.9 L377.4 152.8 L374.8 155.5 L372.1 157.4 M362.9 205.6 L361.8 210.8 M362.9 205.6 L366.2 208.2 L371.1 209.6 L375.1 209.7 M361.8 210.8 L365.9 212.7 L368.4 214.1 M375.1 209.7 L373.1 211.7 L368.4 214.1 M358.9 213.5 L359.8 211.2 L361.8 210.8 M360.7 203.0 L362.9 204.5 L362.9 205.6 M375.1 209.7 L374.2 207.9 L375.5 203.8 L375.0 202.2 M375.1 209.7 L375.1 209.7 M361.6 216.7 L364.5 216.5 M364.5 216.5 L368.4 214.1 M364.5 216.5 L366.6 217.3 L369.9 219.4 M375.1 209.7 L374.1 214.3 L376.2 214.8 M376.2 214.8 L374.2 216.7 L371.3 216.3 L369.9 219.4 M395.3 208.7 L400.4 209.7 L404.4 208.3 M395.3 208.7 L394.3 206.4 M404.8 201.2 L405.5 203.0 L408.0 207.1 L408.3 207.4 M401.4 199.6 L404.8 201.2 M399.4 199.4 L401.4 199.6 M408.3 207.4 L406.9 207.5 L404.4 208.3 M384.3 204.9 L383.3 206.6 L381.8 207.4 L381.7 203.6 L381.4 201.6 L381.8 199.5 M384.3 204.9 L381.6 208.2 L380.1 211.6 M380.1 211.6 L378.9 213.7 M378.9 213.7 L377.9 211.7 L377.8 210.6 L377.0 211.2 L378.0 207.4 L378.1 203.8 L378.7 199.9 M378.7 199.9 L381.8 199.5 M384.4 201.0 L386.1 196.1 M386.1 196.1 L384.9 197.0 L381.8 199.5 M388.3 203.5 L386.1 204.9 L384.3 204.9 M383.4 202.7 L384.4 201.0 M386.9 219.7 L392.4 217.5 M395.3 208.7 L394.5 210.0 L395.0 212.8 L391.7 215.2 L391.2 216.7 L392.4 217.5 M386.9 219.7 L384.1 217.2 L383.5 214.5 L385.0 212.7 L382.3 212.7 L380.1 211.6 M376.2 214.8 L378.1 214.7 M378.1 214.7 L378.9 213.7 M378.2 199.3 L378.7 199.9 M384.2 190.2 L385.4 190.7 L386.1 196.1 M381.8 190.7 L384.2 190.2 M383.6 239.8 L383.3 237.8 L383.7 234.7 L383.1 233.0 M383.6 239.8 L385.4 238.6 M385.4 238.6 L386.4 238.5 M386.4 238.5 L385.4 236.3 L386.8 233.3 L389.0 231.4 L391.2 229.2 L392.7 226.7 M383.1 233.0 L384.0 232.1 L384.7 229.5 L387.7 225.5 M387.7 225.5 L392.7 226.7 M392.8 236.8 L393.0 237.9 M391.0 245.4 L391.4 241.8 L392.0 239.4 L393.0 237.9 M391.0 245.4 L387.7 242.5 L386.0 239.3 L385.3 238.6 L385.4 238.6 M390.6 237.0 L388.5 238.1 L386.4 238.5 M390.6 237.0 L392.8 236.8 M379.9 241.8 L379.8 241.3 L378.3 241.2 L377.2 238.9 L375.8 235.3 M379.9 241.8 L379.3 244.0 L378.1 247.3 M378.1 247.3 L375.7 248.4 L374.0 250.6 L372.0 249.1 M375.8 235.3 L374.4 233.8 M372.0 249.1 L372.8 248.0 M372.8 248.0 L372.4 245.9 L372.6 239.1 L372.9 236.6 L373.4 235.3 L371.8 233.3 M374.4 233.8 L371.8 233.2 M371.8 233.3 L371.8 233.2 M391.0 245.4 L391.6 245.6 M383.6 239.8 L381.6 241.6 L379.9 241.8 M391.6 245.6 L388.7 246.3 L386.3 245.2 L385.6 245.5 L382.6 246.1 L378.9 248.4 M378.9 248.4 L378.1 247.3 M365.9 250.5 L367.7 250.2 L369.5 249.1 L372.0 249.1 M380.6 254.6 L380.4 253.0 L380.2 250.5 L378.9 248.4 M364.7 235.2 L366.7 235.9 L370.2 237.7 L372.7 244.5 L372.8 248.0 M363.8 235.5 L364.7 235.2 M364.7 235.2 L368.1 234.9 L369.9 234.5 L371.8 233.3 M362.5 229.0 L365.8 229.3 M365.8 229.3 L366.8 229.6 L368.2 231.2 L371.8 233.2 M366.4 223.1 L366.6 222.9 M366.4 223.1 L367.6 226.2 M366.6 222.9 L369.6 223.3 L372.8 222.1 L376.9 222.2 L377.4 222.2 M367.6 226.2 L369.7 229.2 M369.7 229.2 L373.1 228.1 L375.6 227.3 L377.1 227.5 M377.1 227.5 L378.3 225.6 M378.3 225.6 L377.6 224.2 M377.6 224.2 L377.4 222.2 M362.6 222.3 L366.0 222.3 L366.4 223.1 M369.9 219.4 L370.4 220.7 L366.6 222.9 M365.8 229.3 L367.6 226.2 M378.1 214.7 L377.9 215.3 L378.8 216.3 L379.4 218.7 L377.4 222.2 M374.4 233.8 L371.1 231.4 L369.9 229.9 L369.7 229.2 M375.8 235.3 L374.5 232.3 L376.2 230.0 L377.1 227.5 M383.1 233.0 L382.3 230.6 L379.8 228.0 L378.3 225.6 M385.5 223.3 L387.7 225.5 M385.5 223.3 L383.1 224.4 L381.2 223.9 L378.8 224.6 L377.6 224.2 M385.5 223.3 L386.8 221.6 L386.9 219.7 M395.3 229.3 L395.4 228.7 M395.3 229.3 L396.9 230.3 M395.4 228.7 L395.3 224.2 L395.6 223.5 L397.3 221.9 L397.7 218.8 M396.9 230.3 L397.3 227.4 L396.6 226.6 L397.8 221.9 L398.2 219.0 M398.2 219.0 L397.7 218.8 M390.6 237.0 L390.7 235.8 L390.3 233.0 L392.9 231.0 L395.3 229.3 M392.7 226.7 L395.4 228.7 M397.4 230.4 L397.6 232.7 L399.6 232.9 M399.6 232.9 L398.4 233.4 M397.4 230.4 L396.9 230.3 M398.4 233.4 L397.0 234.5 L392.8 236.8 M392.4 217.5 L397.7 218.8 M384.4 201.0 L387.1 198.6 L386.9 196.7 L390.5 193.6 L393.0 191.8 M384.2 190.2 L385.4 187.3 L385.5 184.7 L386.2 182.2 M393.0 191.8 L392.0 189.6 L389.2 187.7 L387.8 184.3 L386.2 182.2 M396.2 195.4 L395.8 194.8 M393.0 191.8 L395.8 194.8 M377.8 177.8 L378.9 176.8 L381.2 178.8 L385.2 180.0 L387.6 179.2 L387.6 180.0 M387.6 180.0 L386.2 182.2 M429.4 132.3 L427.0 132.2 M429.3 155.8 L429.6 150.5 L429.0 147.3 L426.3 145.0 L424.0 142.9 L421.0 141.6 M427.0 132.2 L424.7 135.5 L423.2 137.9 L423.3 137.9 L423.2 138.9 L422.8 140.6 L421.0 141.6 M414.1 123.1 L414.2 126.7 L418.0 127.3 L419.1 127.6 L418.8 129.1 L419.3 130.1 L420.8 132.2 M427.0 132.2 L424.0 131.3 L420.8 132.2 M417.0 151.6 L418.2 149.3 L415.2 148.9 L413.2 145.7 M421.0 141.6 L417.5 143.7 L413.2 145.7 M430.1 240.2 L428.3 240.2 M434.6 231.3 L434.3 229.3 M428.3 240.2 L428.6 237.4 L428.4 236.0 L430.8 235.5 L432.6 231.7 L434.3 229.3 M449.1 233.9 L447.1 231.4 L443.9 230.2 L443.0 227.8 M443.0 227.8 L441.6 227.3 L440.6 226.6 L438.8 225.6 L437.2 227.5 L433.5 229.0 M434.3 229.3 L433.5 229.0 M414.5 201.8 L415.5 203.9 L418.2 203.1 L423.7 201.9 L427.4 199.9 M414.5 201.8 L414.7 203.4 L414.5 208.1 L413.0 210.7 M419.7 210.0 L418.0 211.0 L415.3 210.5 L413.0 210.7 M419.7 210.0 L421.9 209.8 L421.9 206.3 L424.1 203.0 L426.6 201.0 M426.6 201.0 L427.4 199.9 M408.5 207.0 L408.6 203.9 L406.7 201.7 L408.0 198.7 M408.5 207.0 L410.3 205.3 L411.3 202.7 L414.1 201.7 M414.1 201.7 L412.4 201.2 L412.3 197.0 L411.7 192.6 M408.0 198.7 L412.0 195.3 L411.7 192.6 M404.8 201.2 L408.0 198.7 M407.6 208.2 L408.3 207.4 M407.6 208.2 L408.5 207.0 M428.2 197.8 L427.4 199.9 M420.6 189.4 L422.9 193.1 L423.6 194.9 L424.3 195.6 L428.2 197.8 M420.4 189.0 L420.4 189.0 M416.5 185.6 L418.4 187.4 L420.4 189.0 M416.5 185.6 L414.7 189.4 L414.1 189.7 L413.3 191.8 L412.9 192.5 L411.7 192.6 M411.7 192.6 L411.7 192.6 M414.5 201.8 L414.1 201.7 M420.6 189.4 L420.4 189.0 M425.5 165.3 L425.6 167.4 M430.5 168.9 L429.3 170.8 M425.6 167.4 L426.9 170.0 L429.3 170.8 M434.4 165.2 L436.0 167.8 L437.2 170.5 L437.0 170.8 L438.9 172.4 M432.6 168.1 L434.3 170.2 L434.1 171.2 L435.1 172.3 L437.2 175.0 M437.2 175.0 L438.9 172.4 M446.4 170.3 L446.2 171.7 M438.9 172.4 L442.3 170.3 L443.9 171.9 L446.2 171.7 M452.1 180.1 L448.7 179.6 M446.2 171.7 L447.1 174.3 L448.1 176.8 L448.7 179.6 M436.9 186.4 L439.2 184.7 L439.8 183.2 L439.7 182.7 L439.1 181.7 L439.6 180.4 M436.9 186.4 L436.9 186.3 M436.9 186.3 L439.1 184.8 L438.4 185.4 L440.0 185.4 L440.8 185.6 M440.8 185.6 L442.2 184.9 L443.9 181.7 L443.9 179.7 M443.9 179.7 L439.6 180.4 M416.2 161.5 L416.4 164.1 L415.1 167.5 M410.2 154.8 L409.4 158.5 M411.7 154.5 L410.2 154.8 M409.4 158.5 L410.4 161.8 L412.4 162.8 L413.4 165.4 L415.1 167.5 M395.8 194.8 L399.4 194.2 M398.4 191.2 L399.4 194.2 M398.4 191.2 L397.4 187.3 L397.1 186.2 L395.4 185.8 L393.9 183.7 L391.0 179.7 M387.6 180.0 L390.0 179.7 L390.5 178.9 M390.5 178.9 L391.0 179.7 M405.8 183.2 L400.9 185.0 L396.3 182.5 L394.0 181.2 L391.1 179.6 M405.8 183.2 L404.7 184.0 M404.7 184.0 L401.0 187.6 L398.4 191.2 M391.1 179.6 L391.0 179.7 M481.1 178.9 L483.0 181.4 M483.0 181.4 L483.8 179.5 M479.2 163.3 L479.6 164.3 M483.8 179.5 L485.0 176.3 M479.6 164.3 L479.5 165.6 L480.4 168.6 L483.0 171.5 L485.1 174.4 L485.0 176.3 M489.5 210.4 L490.1 207.9 L488.5 206.1 L485.2 207.1 L483.3 206.5 M484.9 214.3 L487.0 211.4 L489.5 210.4 M482.5 212.0 L479.7 208.2 M483.3 206.5 L482.5 206.5 L479.7 208.2 M473.1 219.1 L470.6 217.0 M470.6 217.0 L472.8 214.9 L475.0 213.8 L477.1 209.9 L478.0 207.8 M479.7 208.2 L478.0 207.8 M483.8 179.5 L487.0 176.3 L489.7 174.9 L491.3 173.5 L491.2 173.3 L493.5 172.3 L494.6 172.3 L496.4 174.8 L498.4 174.8 M498.4 174.8 L500.0 175.6 M483.0 181.4 L484.2 182.8 L485.0 182.5 L485.4 182.7 L487.1 181.7 L488.5 183.0 M500.0 175.6 L498.7 176.8 L497.4 177.6 L497.7 177.9 L493.7 178.2 L492.8 178.9 L490.1 180.7 L488.5 183.0 M399.5 240.8 L396.9 240.2 M399.5 240.8 L401.5 242.4 L403.4 245.8 M396.9 240.2 L397.7 243.2 L397.2 245.1 L394.7 249.7 M403.4 245.8 L402.6 249.2 L401.5 249.7 L400.5 251.0 L399.7 253.4 M399.7 253.4 L396.6 251.2 L394.7 249.7 M398.4 233.4 L399.7 237.3 L400.4 240.1 M393.0 237.9 L395.5 237.8 L396.9 240.2 M400.4 240.1 L399.5 240.8 M391.6 245.6 L393.9 246.0 L394.7 249.7 M398.0 258.0 L399.7 253.4 M401.6 193.7 L404.0 190.3 L404.4 188.5 M401.6 193.7 L402.4 193.2 M410.2 191.1 L409.5 189.4 L409.2 188.4 L408.3 186.9 L406.4 186.8 M410.2 191.1 L402.4 193.2 M406.4 186.8 L404.4 188.5 M404.7 184.0 L404.2 186.0 L404.4 188.5 M399.4 194.2 L401.6 193.7 M401.4 199.6 L402.2 200.1 L402.4 198.5 L402.3 195.4 L402.4 193.2 M408.9 184.5 L409.3 184.9 L410.9 184.2 L413.6 184.7 L416.5 185.6 M408.9 184.5 L406.4 186.8 M411.7 192.6 L410.2 191.1 M405.8 183.2 L409.5 180.7 L409.8 178.9 M409.8 178.9 L409.8 181.1 L409.5 183.4 M408.9 184.5 L409.5 183.4 M398.2 219.0 L400.8 220.2 L402.8 220.3 M397.4 230.4 L398.6 229.3 M398.6 229.3 L399.9 227.2 L401.2 225.9 L402.8 220.3 M404.4 208.3 L406.0 210.4 L407.6 212.9 L406.1 216.2 L404.6 218.3 M402.8 220.3 L404.7 217.7 L404.6 218.3 M463.6 211.3 L464.5 211.6 L468.0 213.5 M463.6 211.3 L464.5 208.7 L462.8 206.6 M468.0 213.5 L469.8 211.2 L471.4 209.5 L474.3 206.6 M462.8 206.6 L464.3 207.5 L468.5 206.0 L471.9 205.3 L474.3 206.6 M457.8 206.5 L457.8 209.1 L457.9 211.9 L459.5 211.7 L461.3 213.6 M461.3 213.6 L461.6 211.4 L462.6 211.6 L463.6 211.3 M461.4 202.2 L460.2 203.4 L458.6 206.2 L457.8 206.5 M462.3 203.2 L462.8 206.6 M457.8 206.5 L455.8 208.0 L453.3 210.3 L450.9 211.9 M461.3 213.6 L461.4 217.6 M450.9 211.9 L448.1 212.4 M448.1 212.4 L449.9 213.3 L451.7 214.0 L455.2 214.2 M455.2 214.2 L455.6 215.4 L454.3 218.9 L455.1 220.4 L457.9 218.4 L461.4 217.6 M460.8 230.3 L461.2 223.7 L460.9 219.6 M456.1 225.9 L455.8 223.8 M455.8 223.8 L457.6 221.5 L459.2 219.4 L460.9 219.6 M469.3 224.4 L467.6 222.2 L468.6 218.9 L466.4 217.7 L464.2 217.1 L461.7 217.7 M460.9 219.6 L461.7 217.7 M470.6 217.0 L468.0 213.5 M461.7 217.7 L461.4 217.6 M407.6 145.7 L409.3 145.1 L409.3 144.2 L409.2 141.2 L409.9 139.6 L411.8 138.4 L414.7 136.7 M407.6 145.7 L408.8 146.8 L410.1 147.5 L410.7 146.5 L412.8 144.5 M412.8 144.5 L415.7 142.0 L414.8 138.8 L415.5 135.4 L417.2 134.3 M414.7 136.7 L417.2 134.3 M402.9 147.7 L407.6 145.7 M402.9 147.7 L402.4 145.8 L401.7 142.4 L403.0 137.7 L401.7 135.6 M406.7 126.5 L406.6 130.2 L408.2 132.7 L409.1 135.0 L411.1 138.0 L414.7 136.7 M402.7 149.5 L404.1 151.4 L404.4 153.9 L405.6 154.4 M402.7 149.5 L402.9 147.7 M405.6 154.4 L407.3 154.3 L410.2 154.8 M413.2 145.7 L412.8 144.5 M420.8 132.2 L420.4 131.8 L419.8 132.7 L417.2 134.3 M412.8 177.6 L414.3 177.9 L419.1 179.5 M412.8 177.6 L414.6 175.9 L415.7 173.3 L416.4 169.3 M419.1 179.5 L417.9 177.5 L416.3 176.5 L419.2 175.3 L418.2 175.5 M418.2 175.5 L416.2 171.4 M416.2 171.4 L416.2 170.3 M416.4 169.3 L416.2 170.3 M409.5 183.4 L410.4 181.4 L410.2 179.7 L412.8 177.6 M420.4 189.0 L421.3 183.3 L420.2 181.0 L419.1 179.5 M421.6 177.0 L421.1 177.8 L422.9 180.1 L423.5 182.3 L421.5 185.1 L420.4 189.0 M421.6 177.0 L421.1 175.1 L418.2 175.5 M419.1 168.2 L417.6 168.9 L416.2 170.3 M421.8 172.4 L423.1 169.4 L425.6 167.4 M421.8 172.4 L419.3 171.8 L417.1 171.7 L416.2 171.4 M414.8 168.7 L415.1 167.5 M414.8 168.7 L416.4 169.3 M407.6 208.2 L407.6 211.8 M404.6 218.3 L405.0 220.2 M405.0 220.2 L406.4 218.4 L408.1 217.0 L408.2 214.3 L407.6 211.8 M413.0 210.7 L412.6 211.0 M407.6 211.8 L409.3 210.8 L412.6 211.0 M436.8 200.4 L434.6 199.0 L433.6 196.1 L434.8 194.7 M436.8 200.4 L440.1 198.4 L443.1 199.1 L445.9 199.7 L448.2 201.2 L450.5 203.0 M443.1 192.9 L442.3 191.8 L439.5 192.8 L438.0 193.2 L435.0 194.6 M443.1 192.9 L444.8 194.6 L447.6 195.4 L450.4 196.8 M435.0 194.6 L434.8 194.7 M450.4 196.8 L450.1 198.3 L450.5 203.0 M437.5 208.9 L435.2 208.2 M435.2 208.2 L433.0 206.1 L432.1 205.6 L429.2 205.7 L425.6 204.5 L426.6 201.0 M428.2 197.8 L429.9 197.9 L431.6 196.3 L433.7 196.4 L433.7 195.3 L434.8 194.7 M437.5 208.9 L437.0 204.8 L437.2 202.9 L436.1 201.0 L436.8 200.4 M436.9 212.3 L437.5 208.9 M448.1 212.4 L445.7 212.0 L443.0 212.5 L439.1 212.9 L437.5 213.4 L436.9 212.3 M450.9 211.9 L449.1 209.9 L449.1 207.1 L450.5 203.0 M440.8 185.6 L441.4 190.8 L443.1 192.9 M436.9 186.3 L437.3 185.4 L436.6 189.3 L436.6 192.4 L435.0 194.6 M450.9 196.9 L450.4 196.8 M448.7 179.6 L446.1 179.0 L443.9 179.7 M410.7 217.0 L412.4 215.2 L413.1 212.9 L412.6 211.0 M419.7 210.0 L419.7 211.9 L422.6 216.3 M410.7 217.0 L415.7 215.1 L418.6 215.4 M418.6 215.4 L421.1 216.1 L422.6 216.3 M436.9 212.3 L436.1 214.9 L434.9 220.4 L435.5 220.7 M435.5 220.7 L435.4 220.7 M435.4 220.7 L434.2 220.1 L433.1 219.0 L432.0 220.0 L429.8 219.0 L428.5 217.9 M435.2 208.2 L433.1 209.3 L431.9 210.3 L428.8 212.7 L427.9 215.7 M428.5 217.9 L427.9 215.7 M422.6 216.3 L427.9 215.7 M439.7 177.8 L437.1 175.3 M439.7 177.8 L439.0 179.4 L438.7 180.8 L437.8 185.5 L436.8 186.4 M437.1 175.3 L434.1 174.6 L431.6 173.8 M429.7 188.9 L432.5 189.0 L436.8 186.4 M429.7 188.9 L430.9 185.9 L430.7 181.3 L430.0 179.2 L430.8 175.4 M431.6 173.8 L430.9 175.2 M430.8 175.4 L430.9 175.2 M437.2 175.0 L437.1 175.3 M439.6 180.4 L438.8 179.8 L440.2 177.6 L439.7 177.8 M436.9 186.4 L436.8 186.4 M429.3 170.8 L429.7 171.6 L431.6 173.8 M420.6 189.4 L421.6 189.1 L425.4 189.2 L427.6 189.4 L429.7 188.9 M421.6 177.0 L423.6 177.5 L426.7 176.4 L430.8 175.4 M421.8 172.4 L423.3 173.5 L427.8 174.3 L430.9 175.2 M409.4 158.5 L407.0 162.6 M414.8 168.7 L411.9 171.3 L410.8 174.0 M407.0 162.6 L408.5 163.7 L408.4 166.4 L407.8 170.2 L408.2 171.6 L408.6 173.2 L410.8 174.0 M409.8 178.9 L408.4 177.1 L410.2 174.2 M391.1 179.6 L392.9 178.3 L394.5 176.6 L397.6 176.3 L399.1 174.6 L399.4 172.0 M399.4 172.0 L401.4 175.5 L407.4 174.6 L410.2 174.2 M410.2 174.2 L410.8 174.0 M384.8 167.4 L384.5 167.1 L384.6 168.5 L386.4 168.1 M384.8 167.4 L387.8 164.0 L388.2 162.0 L387.2 160.7 L388.6 159.2 L389.7 154.9 L389.9 152.7 L389.8 151.5 M386.4 168.1 L389.4 166.8 L391.8 166.0 L394.6 164.5 L400.5 164.3 M389.8 151.5 L393.1 150.0 M393.1 150.0 L393.6 152.3 L394.1 156.2 L394.2 158.7 L394.9 159.0 L394.1 159.5 L396.4 161.5 M396.4 161.5 L400.5 164.2 M400.5 164.2 L400.5 164.3 M382.9 168.3 L384.8 167.4 M390.5 178.9 L390.3 175.5 L390.9 172.3 L391.1 169.6 L389.3 167.4 L386.4 168.1 M387.3 151.4 L389.8 151.5 M399.4 172.0 L400.4 166.6 L400.5 164.3 M402.7 149.5 L400.7 151.5 L399.1 150.3 L397.9 150.3 L395.9 149.8 L393.1 150.0 M405.6 154.4 L404.1 155.3 L402.3 157.2 L402.1 158.2 L399.9 159.1 L397.9 159.4 L396.4 161.5 M407.0 162.6 L402.9 163.9 L402.8 163.9 L403.3 163.4 L402.2 163.0 L400.5 164.2 M484.9 168.9 L488.6 170.3 M484.9 168.9 L487.7 167.2 L488.6 164.3 M488.6 170.3 L492.6 167.5 L493.1 165.7 L495.0 165.4 M488.6 164.3 L492.0 165.7 L493.8 166.1 L495.0 165.4 M479.6 164.3 L481.1 165.4 L484.3 166.8 L484.9 168.9 M485.0 176.3 L488.6 170.3 M489.8 154.2 L489.2 157.7 L488.5 160.8 L488.6 164.3 M500.9 171.7 L498.4 174.8 M498.1 168.6 L497.8 167.1 L495.7 165.6 L495.0 165.4 M474.3 206.6 L475.8 207.0 M464.0 197.7 L465.8 197.1 M465.8 197.1 L468.5 197.8 L470.4 198.8 L473.4 202.1 L473.7 206.2 L475.8 207.0 M478.0 207.8 L476.3 207.1 M475.8 207.0 L476.3 207.1 M500.6 187.1 L500.4 185.1 L502.7 182.2 L504.8 179.5 M500.6 187.1 L502.5 189.3 L501.3 190.6 L501.4 193.2 L502.8 198.4 M502.8 198.4 L505.3 198.7 L509.2 197.2 M505.1 179.9 L503.7 182.6 L503.3 188.0 L505.3 189.5 L505.3 191.2 L504.4 194.4 L505.9 195.7 L507.8 196.3 L510.0 196.5 M505.1 179.9 L504.8 179.5 M510.0 196.5 L509.2 197.2 M492.0 190.5 L492.4 190.2 M492.4 190.2 L494.5 189.5 L497.8 188.5 L500.0 187.5 L500.6 187.1 M488.3 186.5 L490.1 189.3 L492.0 190.5 M500.0 175.6 L504.8 179.5 M488.5 183.0 L488.3 186.5 M492.4 190.2 L494.3 191.0 L496.0 195.2 L500.6 196.0 M500.6 196.0 L502.8 198.4 M517.7 185.2 L517.6 183.8 L516.6 183.8 L515.0 183.9 L513.9 184.7 L511.6 186.2 L509.1 186.5 L507.6 184.7 L507.1 182.0 L505.1 179.9 M514.3 194.2 L511.5 195.1 L510.0 196.5 M500.6 196.0 L497.5 199.0 M509.2 197.2 L506.7 200.4 L505.3 200.8 L505.7 201.6 L506.6 203.7 L504.6 204.8 L503.3 205.0 L501.5 207.0 M497.5 199.0 L496.9 202.9 L497.8 205.5 L497.5 208.2 L500.1 206.3 L501.5 207.0 M489.5 210.4 L489.6 209.8 M488.4 228.0 L489.2 225.1 L490.0 222.9 L490.2 220.9 L493.3 218.1 L494.8 214.6 L496.2 214.2 L495.3 213.7 L496.5 212.9 M489.6 209.8 L490.3 211.2 L493.6 212.2 L496.5 212.9 M502.0 223.1 L501.1 217.7 L498.8 214.8 L497.5 213.1 M497.5 213.1 L496.5 212.9 M505.6 209.5 L502.9 210.0 M497.5 213.1 L502.9 210.0 M502.9 210.0 L501.5 207.0 M398.6 229.3 L400.8 229.5 L403.2 227.9 L406.5 227.5 L409.2 229.1 M409.2 229.1 L407.3 232.2 L406.1 236.0 M399.6 232.9 L400.8 233.5 L402.8 234.9 L404.0 235.1 L404.1 235.9 L405.7 237.5 M405.7 237.5 L406.1 236.0 M400.4 240.1 L401.1 239.9 L403.9 240.1 L403.7 240.2 L405.8 238.6 M405.7 237.5 L405.8 238.6 M403.4 245.8 L403.0 245.2 L404.8 243.4 L409.7 240.8 M405.8 238.6 L409.7 240.8 M414.0 243.1 L411.8 240.1 L410.3 240.4 M409.7 240.8 L410.3 240.4 M422.1 248.3 L420.7 246.6 L420.3 245.4 L421.6 243.4 L423.9 237.4 M410.3 240.4 L412.8 238.5 L417.4 237.7 L418.4 237.9 L420.0 239.2 L423.1 235.9 L423.9 237.4 M452.6 221.1 L452.7 218.0 L455.2 214.5 M452.6 221.1 L451.0 223.7 L449.8 225.0 M455.2 214.5 L452.0 216.8 L448.8 217.7 L445.2 219.5 L443.0 221.4 M443.0 221.4 L444.7 225.5 L446.1 226.5 M449.8 225.0 L446.1 226.5 M455.2 214.2 L455.2 214.5 M455.8 223.8 L453.5 222.5 L452.6 221.1 M455.0 227.7 L452.1 226.3 L449.8 225.0 M435.5 220.7 L437.2 221.3 L441.3 220.0 L443.0 221.4 M432.1 228.7 L433.5 229.0 M443.0 227.8 L446.1 226.5 M432.1 228.7 L433.7 225.8 L435.2 224.0 L435.2 222.7 L435.4 220.7 M408.3 218.5 L407.6 219.6 L405.7 220.7 M408.3 218.5 L411.1 219.3 L413.6 220.1 L415.0 223.7 M405.7 220.7 L407.2 222.5 L408.6 221.5 L407.1 224.1 L409.4 226.3 M415.0 223.7 L411.4 225.9 L411.4 226.4 M409.4 226.3 L409.2 227.0 L411.4 226.4 M410.7 217.0 L408.3 218.5 M405.0 220.2 L405.7 220.7 M409.2 229.1 L409.4 226.3 M484.3 197.5 L481.9 200.4 L482.8 203.5 M484.3 197.5 L486.8 194.3 L482.7 193.4 L479.7 189.8 M482.8 203.5 L479.8 201.6 L476.5 199.4 L475.5 196.8 M478.4 189.9 L479.7 189.8 M478.4 189.9 L476.7 191.4 L473.6 193.3 L471.9 194.3 M475.5 196.8 L471.3 196.0 M471.9 194.3 L471.3 196.0 M476.3 207.1 L475.4 206.6 L476.3 203.4 L475.4 199.5 L475.5 196.8 M483.3 206.5 L483.2 206.5 M483.2 206.5 L482.8 203.5 M478.2 180.1 L478.4 181.1 L476.1 184.5 L476.5 187.0 L477.7 189.1 L477.7 189.7 L478.4 189.9 M488.3 186.5 L487.3 187.3 L486.2 186.6 L484.3 187.3 L479.7 189.8 M471.8 181.3 L471.1 184.8 L469.7 189.1 L468.3 192.3 L470.1 192.6 L471.9 194.3 M465.8 197.1 L468.1 196.7 L471.3 196.0 M492.7 198.7 L489.0 198.4 L486.6 198.5 M492.7 198.7 L493.0 200.6 M493.0 200.6 L493.1 200.4 M493.1 200.4 L492.7 197.7 L491.2 196.9 L491.4 194.2 M491.4 194.2 L489.7 195.9 L486.6 198.5 M483.2 206.5 L486.2 205.0 L489.5 201.8 L492.7 198.7 M484.3 197.5 L486.6 198.5 M489.6 209.8 L490.2 207.7 L490.0 207.1 L491.1 204.9 L493.0 200.6 M497.5 199.0 L493.6 200.4 L493.1 200.4 M492.0 190.5 L491.4 194.2 M428.3 240.2 L425.7 237.9 L425.8 235.2 M423.9 237.4 L425.0 235.9 M425.8 235.2 L425.0 235.9 M406.1 236.0 L407.6 234.3 L411.0 233.6 L413.6 233.4 L414.7 233.7 L419.0 231.9 M425.0 235.9 L424.1 233.4 L421.3 233.0 L419.0 231.9 M411.4 226.4 L415.5 229.1 L418.9 230.1 M419.0 231.9 L418.9 230.1 M421.5 221.4 L424.1 219.9 L425.8 219.5 L428.3 218.9 M421.5 221.4 L421.0 225.8 M421.0 225.8 L424.5 225.8 M424.5 225.8 L428.0 225.1 L427.8 227.4 L427.8 229.5 M428.3 218.9 L429.4 222.0 L430.3 225.9 L429.5 226.6 L427.8 228.9 M427.8 228.9 L427.8 229.5 M418.6 215.4 L419.2 217.2 L421.5 221.4 M428.5 217.9 L428.3 218.9 M415.0 223.7 L421.0 225.8 M418.9 230.1 L421.1 226.9 L424.5 225.8 M425.8 235.2 L427.4 234.4 L429.0 233.3 L429.4 231.5 L427.8 229.5 M432.1 228.7 L430.8 228.9 L427.8 228.9" fill="none" stroke="#6a6a6a" stroke-width="1.2" stroke-linejoin="round" stroke-linecap="round" clip-path="url(#ac)"/>
<path d="M61.5 200.5 L63.0 195.5 L62.0 191.3 L61.5 188.0 L60.0 183.2 L58.2 179.5 L56.5 175.5 L54.7 171.3 L53.5 167.1 L53.0 163.0 L52.7 158.3 L53.6 155.1 L54.0 150.5 L55.5 145.9 L58.2 142.8 L60.0 138.0 L63.6 134.9 L67.7 131.4 L70.6 129.0 L73.0 125.0 L74.6 121.0 L76.1 115.7 L76.5 111.0 L79.8 109.8 L83.9 110.1 L88.0 109.0 L90.0 105.0 L93.6 106.1 L98.0 107.0 L100.2 103.3 L102.0 100.0 L102.8 95.8 L102.9 92.3 L104.5 89.0 L105.0 85.5 L108.2 86.1 L112.0 86.5 L115.4 87.3 L119.0 88.6 L118.0 93.0 L121.4 95.8 L124.0 98.0 L127.6 98.8 L132.0 99.9 L136.0 100.0 L140.7 100.7 L145.3 101.5 L149.0 103.0 L151.4 105.9 L153.5 108.0 L156.5 110.5 L160.6 112.0 L166.0 113.0 L170.4 113.9 L174.0 114.5 L178.7 112.6 L182.6 111.3 L186.5 109.5 L190.4 108.2 L194.0 107.0 L196.1 104.0 L197.3 99.9 L199.0 96.0 L201.4 93.6 L205.2 91.4 L208.0 88.0 L212.1 87.7 L215.2 88.2 L219.0 88.0 L220.0 93.0 L223.0 92.6 L226.9 91.8 L231.0 92.0 L231.9 88.9 L234.0 85.0 L232.6 81.0 L232.2 78.2 L230.9 73.9 L230.7 70.9 L230.3 67.2 L229.0 63.0 L231.0 59.9 L233.5 57.5 L236.0 54.0 L239.6 50.8 L241.5 48.1 L244.6 45.7 L248.0 43.0 L251.3 40.7 L253.7 38.9 L257.4 37.1 L261.4 35.3 L264.0 33.0 L265.0 29.7 L266.0 26.0 L270.0 24.9 L274.1 25.4 L277.8 24.9 L281.0 24.0 L282.8 28.4 L285.0 33.0 L287.4 35.5 L290.4 37.1 L294.0 40.0 L298.6 41.0 L304.0 43.0 L307.1 43.7 L310.0 45.2 L314.0 47.0 L317.2 49.8 L321.5 53.0 L324.6 56.5 L329.0 59.0 L333.0 64.0 L336.9 63.5 L340.2 63.8 L344.1 63.5 L348.0 64.0 L352.5 65.1 L356.0 64.7 L359.4 64.6 L364.0 65.5 L367.5 65.2 L372.0 65.0 L374.6 66.1 L379.0 65.0 L382.8 64.8 L386.5 65.5 L389.0 63.7 L391.5 60.5 L395.8 61.5 L399.0 62.0 L401.5 65.5 L405.4 64.1 L410.0 63.0 L413.0 58.0 L416.5 63.0 L419.8 62.9 L424.0 62.0 L427.0 59.1 L430.0 55.5 L436.5 54.0 L439.6 54.9 L443.6 57.3 L446.5 58.0 L451.2 57.1 L455.3 55.7 L459.0 54.0 L462.4 56.0 L466.5 58.0 L470.0 56.1 L474.0 55.5 L476.7 52.4 L480.3 50.1 L484.0 47.0 L487.6 49.4 L490.0 52.0 L494.4 52.7 L498.3 51.8 L501.5 52.0 L502.4 55.9 L504.0 60.5 L507.3 61.8 L511.5 64.0 L511.7 68.4 L512.0 71.6 L511.5 75.5 L515.0 80.5 L514.7 85.2 L514.0 89.0 L511.2 92.1 L510.1 95.1 L507.6 97.6 L505.0 100.5 L508.3 102.2 L512.4 103.5 L517.1 104.3 L520.1 106.3 L524.0 107.0 L526.8 109.5 L529.0 113.0 L531.0 116.3 L534.0 120.5 L538.6 121.4 L541.5 122.0 L546.7 122.2 L549.8 122.6 L554.0 123.0 L556.5 128.0 L555.5 131.3 L556.2 136.2 L555.0 140.6 L554.4 144.5 L554.0 148.0 L556.5 150.9 L557.7 154.4 L560.0 158.0 L561.9 161.1 L564.3 163.9 L566.4 167.6 L569.0 169.9 L571.5 173.0 L576.6 174.8 L581.5 175.5 L585.1 178.8 L589.0 181.0" fill="none" stroke="#636363" stroke-width="1.2" stroke-linejoin="round"/>
<path d="M61.5 200.5 L65.3 202.3 L69.0 204.0 L73.2 203.9 L77.3 204.3 L81.5 205.0 L85.2 206.0 L89.5 206.3 L94.0 207.0 L98.4 208.7 L102.2 210.4 L106.5 212.0 L110.7 212.6 L114.4 212.7 L119.0 213.0 L123.7 214.5 L129.0 216.5 L134.3 219.8 L139.0 223.0 L144.0 228.0 L146.1 232.3 L148.4 235.9 L150.0 240.0 L151.4 245.0 L152.7 250.2 L154.0 255.0 L155.6 259.9 L157.3 265.1 L159.0 269.5 L158.7 275.1 L158.0 280.0 L161.7 284.3 L164.5 289.0 L168.4 292.4 L172.5 294.6 L176.0 298.0 L177.6 301.9 L180.0 306.0 L183.6 309.7 L188.0 314.0 L191.3 317.9 L195.5 321.5 L201.0 323.9 L206.0 325.5 L210.9 328.2 L216.5 330.5 L220.4 332.9 L224.0 336.0 L229.9 338.5 L235.0 340.0 L239.1 340.5 L243.6 340.0 L248.0 340.0 L251.5 336.3 L254.0 332.0 L254.2 327.6 L255.0 323.2 L255.5 319.0 L256.4 313.6 L258.0 308.5 L259.7 303.5 L261.0 299.5 L264.8 296.2 L268.5 293.0 L272.4 291.1 L277.3 289.5 L281.5 287.7 L285.4 288.6 L290.5 289.0 L294.6 289.0 L299.3 287.4 L304.4 286.6 L310.0 285.0 L314.0 282.5 L317.8 278.9 L322.0 276.0 L325.7 274.4 L329.5 272.0 L333.5 270.3 L336.6 269.4 L340.7 267.7 L343.9 265.6 L348.3 264.4 L351.4 263.4 L355.5 261.5 L359.5 260.4 L362.8 259.1 L366.7 257.7 L371.0 256.0 L375.2 255.6 L379.5 256.0 L383.4 255.0 L387.8 254.9 L392.0 255.0 L395.8 255.3 L400.0 255.9 L404.4 256.6 L409.1 257.2 L413.0 258.0 L418.2 257.2 L423.2 256.5 L428.5 256.5 L432.3 254.0 L436.5 252.5 L441.9 252.6 L446.5 252.5 L452.0 252.5 L456.4 254.9 L460.0 258.0 L465.0 257.9 L469.3 258.3 L474.0 258.0 L477.8 259.3 L482.0 261.0 L485.5 262.1 L489.6 263.0 L495.0 261.6 L500.0 260.0 L504.2 260.2 L508.2 260.3 L513.0 261.0 L517.8 262.7 L523.5 264.0 L527.1 261.2 L530.8 259.3 L535.0 256.5 L539.0 252.5 L543.7 251.4 L547.4 249.6 L552.0 248.6 L553.1 244.8 L554.7 241.0 L560.0 235.6 L561.5 233.0 L564.0 228.0 L566.5 220.5 L568.7 215.4 L571.5 210.5 L572.5 206.0 L574.0 200.5 L577.0 197.3 L579.0 194.0 L584.0 188.0 L589.0 182.0" fill="none" stroke="#6c6c6c" stroke-width="1.1" stroke-linejoin="round"/>
<path d="M233.7 354.0 L239.2 348.6 L245.9 347.3 L249.6 345.0 L252.6 346.0 L255.0 349.8 L254.7 354.0Z" fill="#ededed"/>
<path d="M246.7 346.9 L247.5 349.0 L249.0 350.5 L250.5 352.5" fill="none" stroke="#6c6c6c" stroke-width="1"/>
<circle cx="461.0" cy="344.0" r="0.8" fill="#777"/>
<ellipse cx="62.0" cy="68.0" rx="2.2" ry="4.5" fill="#d3dfde" fill-opacity="0.8" transform="rotate(20 62.0 68.0)"/>
<ellipse cx="167.0" cy="23.0" rx="2.5" ry="4.5" fill="#d3dfde" fill-opacity="0.8" transform="rotate(20 167.0 23.0)"/>
<ellipse cx="249.0" cy="6.0" rx="6.0" ry="2.2" fill="#d3dfde" fill-opacity="0.8" transform="rotate(20 249.0 6.0)"/>
<ellipse cx="266.0" cy="11.0" rx="5.0" ry="2.5" fill="#d3dfde" fill-opacity="0.8" transform="rotate(20 266.0 11.0)"/>
<ellipse cx="276.0" cy="18.0" rx="2.0" ry="3.0" fill="#d3dfde" fill-opacity="0.8" transform="rotate(20 276.0 18.0)"/>
<ellipse cx="394.0" cy="20.0" rx="3.0" ry="1.3" fill="#d3dfde" fill-opacity="0.8" transform="rotate(20 394.0 20.0)"/>
<ellipse cx="361.0" cy="46.0" rx="2.5" ry="1.3" fill="#d3dfde" fill-opacity="0.8" transform="rotate(20 361.0 46.0)"/>
<ellipse cx="441.0" cy="27.0" rx="3.0" ry="1.3" fill="#d3dfde" fill-opacity="0.8" transform="rotate(20 441.0 27.0)"/>
<ellipse cx="531.0" cy="65.0" rx="2.5" ry="2.2" fill="#d3dfde" fill-opacity="0.8" transform="rotate(20 531.0 65.0)"/>
<ellipse cx="566.0" cy="63.0" rx="4.0" ry="1.8" fill="#d3dfde" fill-opacity="0.8" transform="rotate(20 566.0 63.0)"/>
<ellipse cx="50.0" cy="81.0" rx="1.8" ry="2.2" fill="#d3dfde" fill-opacity="0.8" transform="rotate(20 50.0 81.0)"/>
<ellipse cx="0.0" cy="36.0" rx="1.2" ry="2.5" fill="#d3dfde" fill-opacity="0.8" transform="rotate(20 0.0 36.0)"/>
<g fill="#0a7a3f" fill-opacity="0.86" stroke="#fff" stroke-opacity="0.9" stroke-width="1">
<circle cx="195.0" cy="180.0" r="27.5"/>
<circle cx="411.5" cy="204.0" r="20.0"/>
<circle cx="337.0" cy="252.5" r="19.0"/>
<circle cx="209.5" cy="267.6" r="17.0"/>
<circle cx="520.0" cy="248.6" r="15.0"/>
<circle cx="309.0" cy="128.0" r="15.0"/>
<circle cx="396.0" cy="129.0" r="14.0"/>
<circle cx="108.4" cy="197.0" r="15.2"/>
<circle cx="240.5" cy="327.0" r="14.0"/>
<circle cx="166.0" cy="280.5" r="10.0"/>
<circle cx="500.0" cy="249.4" r="9.5"/>
<circle cx="482.0" cy="257.0" r="9.5"/>
<circle cx="323.0" cy="185.0" r="9.0"/>
<circle cx="293.0" cy="280.5" r="9.0"/>
<circle cx="266.0" cy="243.5" r="9.0"/>
<circle cx="162.0" cy="248.0" r="9.0"/>
<circle cx="406.5" cy="98.0" r="8.5"/>
<circle cx="83.0" cy="195.5" r="8.0"/>
<circle cx="361.5" cy="252.0" r="8.0"/>
<circle cx="316.5" cy="276.0" r="8.0"/>
<circle cx="393.0" cy="100.0" r="7.5"/>
<circle cx="226.5" cy="168.0" r="7.0"/>
<circle cx="310.0" cy="276.0" r="7.0"/>
<circle cx="167.5" cy="266.0" r="6.5"/>
<circle cx="179.0" cy="291.0" r="6.5"/>
<circle cx="251.5" cy="314.0" r="6.5"/>
<circle cx="270.0" cy="287.0" r="6.5"/>
<circle cx="461.0" cy="252.5" r="6.5"/>
<circle cx="501.0" cy="117.0" r="6.0"/>
<circle cx="268.0" cy="230.5" r="6.0"/>
<circle cx="66.5" cy="197.0" r="5.5"/>
<circle cx="143.0" cy="223.0" r="5.5"/>
<circle cx="363.5" cy="89.0" r="5.5"/>
<circle cx="303.0" cy="177.5" r="5.5"/>
<circle cx="227.5" cy="241.0" r="5.5"/>
<circle cx="419.5" cy="256.0" r="5.5"/>
<circle cx="547.5" cy="246.5" r="5.5"/>
<circle cx="485.0" cy="177.5" r="5.5"/>
<circle cx="368.5" cy="202.5" r="5.5"/>
<circle cx="253.0" cy="148.0" r="5.0"/>
<circle cx="161.5" cy="188.0" r="5.0"/>
<circle cx="211.0" cy="215.0" r="5.0"/>
<circle cx="358.0" cy="170.0" r="5.0"/>
<circle cx="378.0" cy="171.0" r="5.0"/>
<circle cx="358.0" cy="200.5" r="5.0"/>
<circle cx="438.0" cy="109.0" r="5.0"/>
<circle cx="177.5" cy="277.0" r="5.0"/>
<circle cx="251.0" cy="308.5" r="5.0"/>
<circle cx="323.0" cy="271.0" r="5.0"/>
<circle cx="409.0" cy="73.0" r="5.0"/>
<circle cx="557.0" cy="177.0" r="5.1"/>
<circle cx="139.0" cy="176.0" r="4.8"/>
<circle cx="345.0" cy="150.0" r="4.8"/>
<circle cx="373.0" cy="147.0" r="4.8"/>
<circle cx="322.0" cy="223.0" r="4.8"/>
<circle cx="411.0" cy="125.0" r="4.8"/>
<circle cx="454.0" cy="179.0" r="4.8"/>
<circle cx="216.5" cy="252.0" r="4.8"/>
<circle cx="279.0" cy="237.5" r="4.8"/>
<circle cx="428.5" cy="239.5" r="4.8"/>
<circle cx="321.0" cy="261.0" r="4.8"/>
<circle cx="85.0" cy="188.5" r="4.3"/>
<circle cx="98.0" cy="193.0" r="4.3"/>
<circle cx="116.5" cy="193.5" r="4.3"/>
<circle cx="461.5" cy="99.0" r="4.3"/>
<circle cx="381.5" cy="193.0" r="4.3"/>
<circle cx="419.0" cy="115.5" r="4.3"/>
<circle cx="235.0" cy="310.0" r="4.3"/>
<circle cx="194.0" cy="316.0" r="4.3"/>
<circle cx="310.0" cy="252.5" r="4.3"/>
<circle cx="569.0" cy="200.5" r="4.3"/>
<circle cx="74.0" cy="200.5" r="3.9"/>
<circle cx="99.0" cy="200.5" r="3.9"/>
<circle cx="468.0" cy="90.0" r="3.9"/>
<circle cx="273.0" cy="160.0" r="3.9"/>
<circle cx="285.0" cy="208.5" r="3.9"/>
<circle cx="310.0" cy="189.0" r="3.9"/>
<circle cx="258.5" cy="229.0" r="3.9"/>
<circle cx="359.0" cy="155.0" r="3.9"/>
<circle cx="419.0" cy="221.0" r="3.9"/>
<circle cx="409.5" cy="252.5" r="3.9"/>
<circle cx="398.5" cy="253.0" r="3.9"/>
<circle cx="464.5" cy="239.0" r="3.9"/>
<circle cx="491.7" cy="244.0" r="3.9"/>
<circle cx="299.0" cy="82.0" r="3.4"/>
<circle cx="321.0" cy="99.0" r="3.4"/>
<circle cx="484.5" cy="65.5" r="3.4"/>
<circle cx="115.0" cy="208.0" r="3.4"/>
<circle cx="140.0" cy="186.0" r="3.4"/>
<circle cx="135.0" cy="189.0" r="3.4"/>
<circle cx="289.0" cy="148.5" r="3.4"/>
<circle cx="245.0" cy="188.0" r="3.4"/>
<circle cx="258.0" cy="206.0" r="3.4"/>
<circle cx="179.0" cy="208.0" r="3.4"/>
<circle cx="304.0" cy="189.0" r="3.4"/>
<circle cx="188.0" cy="232.0" r="3.4"/>
<circle cx="368.5" cy="133.5" r="3.4"/>
<circle cx="432.0" cy="128.5" r="3.4"/>
<circle cx="439.0" cy="183.5" r="3.4"/>
<circle cx="414.0" cy="174.0" r="3.4"/>
<circle cx="458.0" cy="147.0" r="3.4"/>
<circle cx="341.5" cy="187.0" r="3.4"/>
<circle cx="315.0" cy="160.0" r="3.4"/>
<circle cx="314.0" cy="169.0" r="3.4"/>
<circle cx="374.0" cy="198.0" r="3.4"/>
<circle cx="231.5" cy="247.0" r="3.4"/>
<circle cx="182.5" cy="304.0" r="3.4"/>
<circle cx="221.0" cy="328.5" r="3.4"/>
<circle cx="239.0" cy="262.5" r="3.4"/>
<circle cx="578.0" cy="192.5" r="3.4"/>
<circle cx="563.0" cy="224.0" r="3.4"/>
<circle cx="267.0" cy="40.5" r="2.4"/>
<circle cx="267.0" cy="57.0" r="2.9"/>
<circle cx="313.5" cy="80.5" r="2.4"/>
<circle cx="341.0" cy="95.0" r="2.4"/>
<circle cx="358.0" cy="101.0" r="2.4"/>
<circle cx="440.0" cy="71.0" r="2.4"/>
<circle cx="440.0" cy="97.5" r="2.9"/>
<circle cx="443.0" cy="105.5" r="2.9"/>
<circle cx="423.0" cy="100.0" r="2.4"/>
<circle cx="314.0" cy="80.5" r="2.4"/>
<circle cx="90.0" cy="172.0" r="2.9"/>
<circle cx="99.5" cy="180.0" r="2.9"/>
<circle cx="116.0" cy="167.0" r="2.9"/>
<circle cx="124.5" cy="164.0" r="2.9"/>
<circle cx="130.0" cy="172.0" r="2.4"/>
<circle cx="128.0" cy="190.0" r="2.4"/>
<circle cx="139.0" cy="145.5" r="2.4"/>
<circle cx="146.0" cy="117.0" r="2.4"/>
<circle cx="69.0" cy="188.0" r="1.9"/>
<circle cx="108.0" cy="151.0" r="1.9"/>
<circle cx="113.5" cy="179.0" r="1.9"/>
<circle cx="271.5" cy="199.0" r="2.9"/>
<circle cx="232.0" cy="200.5" r="2.9"/>
<circle cx="236.0" cy="152.5" r="2.9"/>
<circle cx="227.0" cy="127.0" r="2.4"/>
<circle cx="206.0" cy="152.5" r="2.9"/>
<circle cx="190.0" cy="141.0" r="2.4"/>
<circle cx="245.0" cy="159.0" r="1.9"/>
<circle cx="293.0" cy="189.0" r="2.4"/>
<circle cx="279.0" cy="212.0" r="2.4"/>
<circle cx="244.0" cy="212.0" r="1.9"/>
<circle cx="166.5" cy="207.0" r="1.9"/>
<circle cx="225.0" cy="222.5" r="1.9"/>
<circle cx="236.5" cy="192.0" r="1.9"/>
<circle cx="281.5" cy="185.5" r="1.9"/>
<circle cx="355.0" cy="126.0" r="2.4"/>
<circle cx="429.0" cy="165.0" r="2.9"/>
<circle cx="428.0" cy="147.0" r="2.9"/>
<circle cx="416.5" cy="159.0" r="2.4"/>
<circle cx="467.0" cy="144.0" r="2.9"/>
<circle cx="443.0" cy="145.0" r="2.4"/>
<circle cx="328.0" cy="167.0" r="2.9"/>
<circle cx="334.0" cy="154.0" r="2.9"/>
<circle cx="389.0" cy="145.5" r="2.4"/>
<circle cx="370.0" cy="185.5" r="2.9"/>
<circle cx="376.5" cy="202.5" r="2.4"/>
<circle cx="371.5" cy="208.0" r="2.4"/>
<circle cx="336.0" cy="215.5" r="2.4"/>
<circle cx="441.5" cy="218.0" r="2.4"/>
<circle cx="431.5" cy="225.0" r="1.9"/>
<circle cx="409.0" cy="227.5" r="2.4"/>
<circle cx="361.5" cy="165.0" r="2.4"/>
<circle cx="378.0" cy="162.0" r="2.4"/>
<circle cx="356.0" cy="194.0" r="1.9"/>
<circle cx="445.0" cy="191.0" r="1.9"/>
<circle cx="433.0" cy="209.0" r="2.4"/>
<circle cx="324.0" cy="195.5" r="2.9"/>
<circle cx="540.0" cy="174.0" r="2.9"/>
<circle cx="514.0" cy="176.0" r="2.4"/>
<circle cx="512.0" cy="181.0" r="2.4"/>
<circle cx="527.0" cy="190.0" r="2.9"/>
<circle cx="586.0" cy="183.5" r="2.9"/>
<circle cx="568.5" cy="212.0" r="1.9"/>
<circle cx="495.0" cy="178.5" r="1.9"/>
<circle cx="480.0" cy="207.0" r="1.9"/>
<circle cx="518.0" cy="116.0" r="1.4"/>
<circle cx="503.0" cy="229.0" r="1.9"/>
<circle cx="518.5" cy="230.0" r="1.9"/>
<circle cx="250.0" cy="280.0" r="2.9"/>
<circle cx="239.5" cy="290.0" r="2.4"/>
<circle cx="248.0" cy="297.0" r="2.4"/>
<circle cx="211.0" cy="297.0" r="2.4"/>
<circle cx="242.5" cy="274.0" r="1.9"/>
<circle cx="256.0" cy="273.0" r="2.4"/>
<circle cx="288.0" cy="254.0" r="2.4"/>
<circle cx="307.5" cy="243.5" r="2.9"/>
<circle cx="160.0" cy="264.0" r="2.4"/>
<circle cx="189.0" cy="239.0" r="2.4"/>
<circle cx="193.0" cy="307.0" r="2.9"/>
<circle cx="376.5" cy="252.0" r="2.9"/>
<circle cx="387.5" cy="251.0" r="1.9"/>
<circle cx="324.0" cy="243.0" r="2.4"/>
<circle cx="195.3" cy="155.0" r="3.9"/>
<circle cx="206.0" cy="153.0" r="2.9"/>
<circle cx="194.0" cy="161.3" r="5.0"/>
<circle cx="202.4" cy="161.3" r="3.4"/>
<circle cx="177.3" cy="160.7" r="3.9"/>
<circle cx="182.4" cy="158.0" r="2.4"/>
<circle cx="189.0" cy="168.0" r="3.9"/>
<circle cx="198.7" cy="170.0" r="6.7"/>
<circle cx="168.7" cy="171.0" r="2.9"/>
<circle cx="177.0" cy="174.0" r="3.4"/>
<circle cx="181.3" cy="173.0" r="1.9"/>
<circle cx="187.3" cy="178.0" r="4.8"/>
<circle cx="182.7" cy="182.0" r="4.3"/>
<circle cx="171.6" cy="184.3" r="2.9"/>
<circle cx="177.3" cy="185.7" r="2.4"/>
<circle cx="171.0" cy="284.0" r="4.3"/>
<circle cx="204.0" cy="278.6" r="2.9"/>
<circle cx="379.5" cy="127.5" r="4.8"/>
<circle cx="391.5" cy="113.0" r="2.9"/>
<circle cx="464.0" cy="94.0" r="2.4"/>
<circle cx="443.5" cy="165.5" r="2.4"/>
<circle cx="454.0" cy="138.0" r="1.9"/>
<circle cx="482.0" cy="147.0" r="1.9"/>
<circle cx="474.0" cy="155.0" r="1.9"/>
<circle cx="466.0" cy="118.5" r="1.9"/>
<circle cx="494.0" cy="84.0" r="1.9"/>
<circle cx="495.0" cy="100.0" r="1.9"/>
<circle cx="474.5" cy="80.0" r="1.9"/>
<circle cx="394.5" cy="76.0" r="1.9"/>
<circle cx="421.0" cy="86.0" r="1.9"/>
<circle cx="424.5" cy="85.0" r="1.9"/>
<circle cx="404.0" cy="110.5" r="1.9"/>
<circle cx="412.0" cy="112.5" r="1.9"/>
<circle cx="374.5" cy="114.0" r="1.9"/>
<circle cx="352.0" cy="113.5" r="1.9"/>
<circle cx="345.0" cy="112.0" r="1.9"/>
<circle cx="416.5" cy="103.5" r="1.9"/>
<circle cx="391.5" cy="231.0" r="2.9"/>
<circle cx="380.0" cy="243.5" r="1.9"/>
<circle cx="309.0" cy="197.0" r="2.4"/>
<circle cx="310.0" cy="264.0" r="2.9"/>
<circle cx="214.4" cy="183.7" r="5.0"/>
<circle cx="209.3" cy="192.7" r="8.0"/>
<circle cx="195.3" cy="192.7" r="8.7"/>
<circle cx="187.3" cy="196.7" r="6.4"/>
<circle cx="197.3" cy="204.0" r="6.5"/>
<circle cx="403.0" cy="192.0" r="5.0"/>
<circle cx="413.0" cy="189.0" r="3.9"/>
<circle cx="413.0" cy="195.5" r="3.4"/>
<circle cx="406.5" cy="207.0" r="6.5"/>
<circle cx="415.0" cy="207.5" r="3.4"/>
<circle cx="398.0" cy="206.0" r="3.9"/>
<circle cx="393.0" cy="203.0" r="3.4"/>
<circle cx="400.0" cy="216.0" r="3.4"/>
<circle cx="418.0" cy="214.0" r="2.9"/>
<circle cx="410.0" cy="213.0" r="2.4"/>
<circle cx="390.0" cy="198.0" r="2.4"/>
<circle cx="421.5" cy="197.0" r="1.9"/>
<circle cx="400.0" cy="137.5" r="3.4"/>
<circle cx="334.0" cy="239.5" r="3.9"/>
<circle cx="348.0" cy="255.0" r="3.9"/>
<circle cx="492.7" cy="249.0" r="3.4"/>
<circle cx="269.0" cy="247.0" r="3.4"/>
<circle cx="223.5" cy="264.0" r="2.4"/>
<circle cx="570.0" cy="203.0" r="2.9"/>
</g>
<g fill="#0a7a3f" stroke="#fff" stroke-opacity="0.85" stroke-width="0.8">
<circle cx="418.9" cy="243.4" r="1.1"/>
<circle cx="417.8" cy="178.8" r="0.9"/>
<circle cx="351.6" cy="148.8" r="0.9"/>
<circle cx="298.0" cy="198.5" r="1.0"/>
<circle cx="479.2" cy="197.4" r="1.1"/>
<circle cx="299.9" cy="75.4" r="0.9"/>
<circle cx="575.9" cy="176.8" r="1.0"/>
<circle cx="406.0" cy="165.4" r="1.1"/>
<circle cx="366.9" cy="234.0" r="0.9"/>
<circle cx="365.7" cy="210.4" r="1.0"/>
<circle cx="387.3" cy="174.3" r="1.1"/>
<circle cx="450.5" cy="167.2" r="1.1"/>
<circle cx="509.3" cy="219.7" r="0.9"/>
<circle cx="157.9" cy="225.9" r="0.9"/>
<circle cx="199.9" cy="150.5" r="1.1"/>
<circle cx="392.9" cy="172.5" r="0.9"/>
<circle cx="490.4" cy="172.1" r="1.0"/>
<circle cx="196.1" cy="143.0" r="1.1"/>
<circle cx="127.5" cy="180.0" r="0.9"/>
<circle cx="388.9" cy="244.4" r="0.9"/>
<circle cx="298.3" cy="265.4" r="1.1"/>
<circle cx="474.5" cy="201.9" r="1.0"/>
<circle cx="214.7" cy="157.5" r="0.9"/>
<circle cx="437.4" cy="85.7" r="0.9"/>
<circle cx="504.4" cy="222.8" r="1.1"/>
<circle cx="389.6" cy="69.2" r="1.0"/>
<circle cx="499.0" cy="190.6" r="1.1"/>
<circle cx="251.8" cy="212.3" r="1.0"/>
<circle cx="285.0" cy="183.7" r="0.9"/>
<circle cx="466.8" cy="74.2" r="1.1"/>
<circle cx="448.8" cy="72.9" r="1.0"/>
<circle cx="361.3" cy="208.0" r="1.0"/>
<circle cx="145.8" cy="137.4" r="0.9"/>
<circle cx="219.7" cy="95.7" r="1.1"/>
<circle cx="286.0" cy="240.6" r="1.0"/>
<circle cx="510.8" cy="216.2" r="0.9"/>
<circle cx="344.4" cy="103.0" r="1.1"/>
<circle cx="450.8" cy="127.4" r="1.1"/>
<circle cx="530.0" cy="197.5" r="1.0"/>
<circle cx="95.8" cy="153.1" r="1.1"/>
<circle cx="414.8" cy="104.6" r="1.1"/>
<circle cx="178.7" cy="134.5" r="0.9"/>
<circle cx="200.7" cy="105.5" r="1.0"/>
<circle cx="482.0" cy="169.6" r="1.1"/>
<circle cx="421.8" cy="230.7" r="1.0"/>
<circle cx="332.7" cy="174.8" r="0.9"/>
<circle cx="456.7" cy="202.6" r="0.9"/>
<circle cx="417.9" cy="249.0" r="1.1"/>
<circle cx="483.1" cy="211.4" r="1.1"/>
<circle cx="420.6" cy="73.0" r="0.9"/>
<circle cx="455.0" cy="72.6" r="0.9"/>
<circle cx="473.2" cy="248.9" r="1.1"/>
<circle cx="192.3" cy="148.7" r="0.9"/>
<circle cx="274.1" cy="279.6" r="0.9"/>
<circle cx="484.8" cy="134.7" r="0.9"/>
<circle cx="124.4" cy="131.2" r="1.0"/>
<circle cx="494.7" cy="110.4" r="0.9"/>
<circle cx="496.4" cy="59.0" r="0.9"/>
<circle cx="323.4" cy="158.1" r="1.0"/>
<circle cx="447.4" cy="187.4" r="1.1"/>
<circle cx="484.2" cy="168.0" r="0.9"/>
<circle cx="474.3" cy="170.7" r="1.1"/>
<circle cx="312.6" cy="226.4" r="1.1"/>
<circle cx="540.2" cy="213.6" r="0.9"/>
<circle cx="163.8" cy="159.8" r="1.1"/>
<circle cx="206.8" cy="310.9" r="1.0"/>
<circle cx="369.7" cy="231.6" r="1.0"/>
<circle cx="246.6" cy="69.0" r="1.1"/>
<circle cx="291.3" cy="254.5" r="1.0"/>
<circle cx="247.7" cy="252.7" r="1.1"/>
<circle cx="256.9" cy="266.0" r="1.1"/>
<circle cx="463.6" cy="119.2" r="1.0"/>
<circle cx="553.6" cy="219.8" r="1.0"/>
<circle cx="297.1" cy="225.5" r="1.0"/>
<circle cx="466.1" cy="162.4" r="1.1"/>
<circle cx="452.1" cy="132.1" r="1.0"/>
<circle cx="256.9" cy="289.7" r="1.1"/>
<circle cx="479.9" cy="95.9" r="1.1"/>
<circle cx="159.1" cy="170.2" r="1.0"/>
<circle cx="284.6" cy="251.0" r="1.0"/>
<circle cx="475.8" cy="136.9" r="0.9"/>
<circle cx="328.0" cy="172.2" r="1.0"/>
<circle cx="290.1" cy="51.3" r="0.9"/>
<circle cx="480.1" cy="238.4" r="0.9"/>
<circle cx="369.1" cy="238.3" r="1.1"/>
<circle cx="513.2" cy="146.1" r="1.0"/>
<circle cx="431.3" cy="79.4" r="1.1"/>
<circle cx="474.2" cy="186.9" r="1.0"/>
<circle cx="193.4" cy="217.3" r="1.1"/>
<circle cx="107.9" cy="111.5" r="1.0"/>
<circle cx="489.6" cy="62.0" r="1.1"/>
<circle cx="387.0" cy="230.8" r="0.9"/>
<circle cx="400.7" cy="158.0" r="1.0"/>
<circle cx="431.4" cy="159.7" r="1.0"/>
<circle cx="261.9" cy="144.0" r="0.9"/>
<circle cx="367.7" cy="143.4" r="1.1"/>
<circle cx="471.0" cy="204.8" r="1.1"/>
<circle cx="301.6" cy="272.8" r="1.1"/>
<circle cx="263.2" cy="122.9" r="0.9"/>
<circle cx="353.5" cy="155.7" r="0.9"/>
<circle cx="286.3" cy="144.2" r="0.9"/>
<circle cx="478.1" cy="223.9" r="0.9"/>
<circle cx="398.9" cy="183.9" r="1.1"/>
<circle cx="161.4" cy="130.2" r="1.1"/>
<circle cx="481.9" cy="213.3" r="1.1"/>
<circle cx="430.7" cy="191.3" r="0.9"/>
<circle cx="487.3" cy="96.5" r="1.0"/>
<circle cx="272.2" cy="166.3" r="1.1"/>
<circle cx="449.1" cy="91.8" r="1.0"/>
<circle cx="492.4" cy="119.5" r="1.0"/>
<circle cx="76.2" cy="178.1" r="1.0"/>
<circle cx="447.8" cy="221.9" r="0.9"/>
<circle cx="295.8" cy="250.4" r="1.0"/>
<circle cx="338.3" cy="226.1" r="1.1"/>
<circle cx="472.4" cy="251.5" r="1.0"/>
<circle cx="373.3" cy="254.6" r="0.9"/>
<circle cx="219.4" cy="132.5" r="0.9"/>
<circle cx="477.1" cy="201.8" r="1.0"/>
<circle cx="54.5" cy="156.6" r="0.9"/>
<circle cx="249.5" cy="99.7" r="0.9"/>
<circle cx="436.3" cy="169.3" r="1.1"/>
<circle cx="118.0" cy="96.4" r="1.1"/>
<circle cx="228.3" cy="215.8" r="0.9"/>
<circle cx="366.8" cy="160.0" r="0.9"/>
<circle cx="397.5" cy="239.8" r="1.0"/>
<circle cx="472.4" cy="239.3" r="1.0"/>
<circle cx="411.9" cy="141.2" r="1.1"/>
<circle cx="447.3" cy="245.6" r="0.9"/>
<circle cx="455.3" cy="95.6" r="1.1"/>
<circle cx="444.9" cy="218.9" r="0.9"/>
<circle cx="362.4" cy="225.7" r="1.1"/>
<circle cx="171.9" cy="232.2" r="1.0"/>
<circle cx="292.5" cy="137.1" r="1.0"/>
<circle cx="109.2" cy="177.2" r="1.0"/>
<circle cx="529.3" cy="166.7" r="1.0"/>
<circle cx="354.3" cy="216.6" r="1.0"/>
<circle cx="303.3" cy="223.3" r="1.1"/>
<circle cx="278.2" cy="250.2" r="1.0"/>
<circle cx="429.9" cy="220.5" r="1.0"/>
<circle cx="425.7" cy="64.8" r="1.1"/>
<circle cx="420.4" cy="179.0" r="1.1"/>
<circle cx="378.7" cy="231.8" r="1.0"/>
<circle cx="383.0" cy="220.1" r="1.0"/>
<circle cx="210.4" cy="206.5" r="0.9"/>
<circle cx="363.6" cy="133.8" r="1.1"/>
<circle cx="460.9" cy="195.8" r="1.1"/>
<circle cx="442.4" cy="166.0" r="1.0"/>
<circle cx="509.2" cy="187.7" r="1.0"/>
<circle cx="177.8" cy="213.1" r="1.0"/>
<circle cx="331.6" cy="229.0" r="1.1"/>
<circle cx="143.9" cy="125.6" r="1.0"/>
<circle cx="360.1" cy="234.9" r="1.0"/>
<circle cx="163.0" cy="171.9" r="1.1"/>
<circle cx="218.9" cy="157.4" r="1.0"/>
<circle cx="505.1" cy="230.0" r="0.9"/>
<circle cx="390.9" cy="242.7" r="0.9"/>
<circle cx="147.0" cy="140.8" r="0.9"/>
<circle cx="130.4" cy="211.3" r="0.9"/>
<circle cx="438.1" cy="240.4" r="1.1"/>
<circle cx="281.6" cy="232.1" r="1.0"/>
<circle cx="413.5" cy="163.3" r="1.1"/>
<circle cx="303.5" cy="63.5" r="1.1"/>
<circle cx="334.9" cy="202.4" r="1.0"/>
<circle cx="456.6" cy="188.3" r="1.1"/>
<circle cx="122.7" cy="114.4" r="0.9"/>
<circle cx="389.6" cy="212.3" r="1.0"/>
<circle cx="437.6" cy="244.0" r="1.1"/>
<circle cx="350.1" cy="189.5" r="1.0"/>
<circle cx="455.0" cy="221.1" r="1.1"/>
<circle cx="112.9" cy="122.1" r="0.9"/>
<circle cx="292.5" cy="226.6" r="1.0"/>
<circle cx="440.9" cy="66.4" r="1.0"/>
<circle cx="272.3" cy="41.6" r="1.0"/>
<circle cx="456.6" cy="225.7" r="0.9"/>
<circle cx="399.4" cy="238.5" r="1.0"/>
<circle cx="423.3" cy="161.3" r="1.1"/>
<circle cx="446.4" cy="159.5" r="1.1"/>
<circle cx="142.1" cy="168.4" r="0.9"/>
<circle cx="472.2" cy="243.8" r="0.9"/>
<circle cx="358.3" cy="220.3" r="0.9"/>
<circle cx="282.6" cy="213.8" r="1.0"/>
<circle cx="324.9" cy="116.0" r="0.9"/>
<circle cx="260.5" cy="272.8" r="1.1"/>
<circle cx="433.1" cy="201.0" r="1.1"/>
<circle cx="347.7" cy="161.5" r="1.1"/>
<circle cx="150.8" cy="107.3" r="0.9"/>
<circle cx="523.1" cy="140.6" r="0.9"/>
<circle cx="100.6" cy="114.0" r="0.9"/>
<circle cx="305.6" cy="237.6" r="1.1"/>
<circle cx="462.8" cy="148.3" r="1.0"/>
<circle cx="121.2" cy="100.6" r="0.9"/>
<circle cx="453.7" cy="145.4" r="1.0"/>
<circle cx="282.1" cy="148.8" r="1.1"/>
<circle cx="439.4" cy="169.2" r="1.1"/>
<circle cx="400.5" cy="178.9" r="1.0"/>
<circle cx="462.3" cy="155.3" r="1.1"/>
<circle cx="517.8" cy="160.1" r="0.9"/>
<circle cx="403.5" cy="224.5" r="1.1"/>
<circle cx="452.9" cy="224.8" r="1.1"/>
<circle cx="337.5" cy="83.2" r="0.9"/>
<circle cx="496.9" cy="68.3" r="0.9"/>
<circle cx="267.4" cy="39.3" r="0.9"/>
<circle cx="374.0" cy="110.0" r="0.9"/>
<circle cx="440.1" cy="189.4" r="1.1"/>
<circle cx="236.1" cy="184.8" r="0.9"/>
<circle cx="504.6" cy="129.0" r="0.9"/>
<circle cx="485.8" cy="163.6" r="0.9"/>
<circle cx="173.7" cy="156.1" r="1.1"/>
<circle cx="281.9" cy="125.6" r="1.0"/>
<circle cx="249.9" cy="116.0" r="1.0"/>
</g>
</svg>
<div class="attr">© 2020 Mapbox <span style="margin-left:3.3px">© OpenStreetMap</span></div>
</div>
</body></html>
